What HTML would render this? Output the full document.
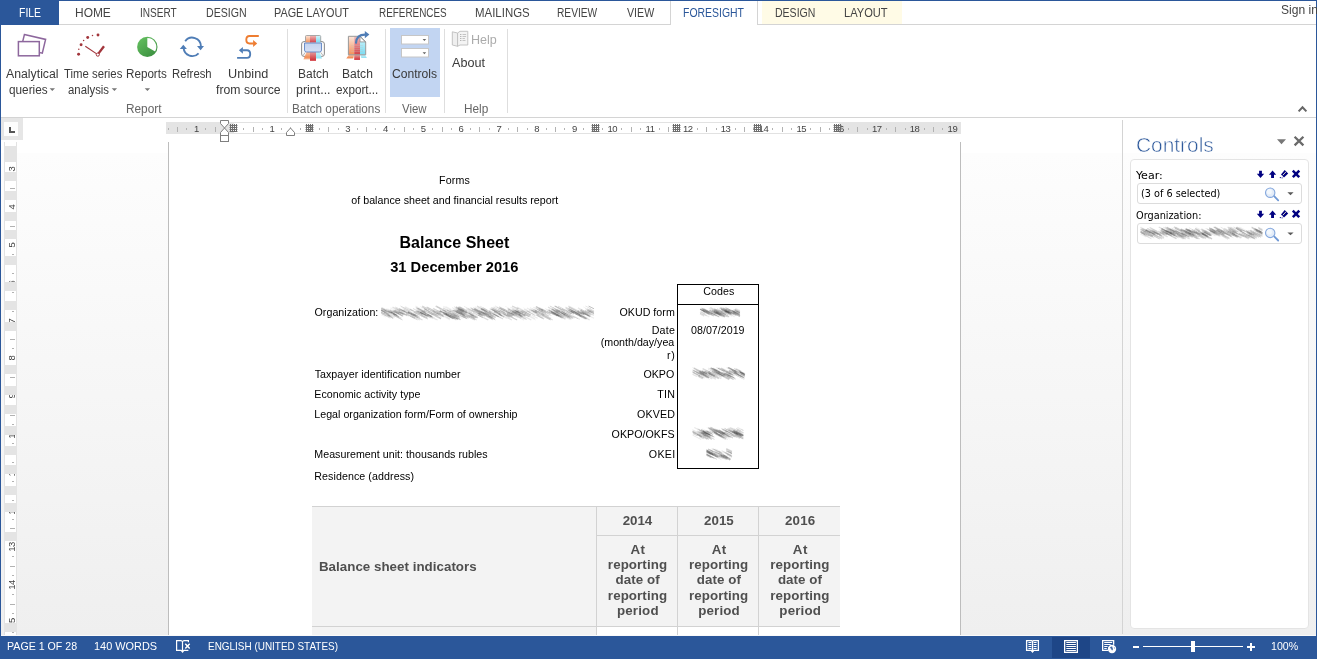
<!DOCTYPE html><html><head><meta charset="utf-8"><title>Document - Word</title><style>
html,body{margin:0;padding:0}
body{width:1317px;height:659px;position:relative;overflow:hidden;background:#fff;
 font-family:"Liberation Sans",sans-serif}
.a{position:absolute}
.t{position:absolute;white-space:pre;line-height:30px;transform-origin:0 0}
svg{position:absolute;left:0;top:0}
.rn{position:absolute;font-size:9.5px;color:#444;line-height:12px;width:20px;text-align:center;letter-spacing:-0.5px}
.vn{position:absolute;font-size:9.5px;color:#444;line-height:12px;width:20px;height:12px;text-align:center;
 transform:rotate(-90deg);transform-origin:50% 50%;letter-spacing:-0.5px}
</style></head><body>
<div class="a" style="left:0px;top:153px;width:1317px;height:483px;background:linear-gradient(#fdfdfd,#efefef);"></div>
<div class="a" style="left:0px;top:24px;width:1317px;height:1px;background:#d4d4d4;"></div>
<div class="a" style="left:0px;top:0px;width:59px;height:25px;background:#2b579a;"></div>
<div class="a" style="left:762px;top:1px;width:140px;height:23px;background:#fffbe6;"></div>
<div class="a" style="left:670px;top:1px;width:88px;height:24px;background:#fff;box-sizing:border-box;border-left:1px solid #d4d4d4;border-right:1px solid #d4d4d4"></div>
<div class="a" style="left:0px;top:117px;width:1317px;height:1px;background:#d4d4d4;"></div>
<div class="a" style="left:287px;top:29px;width:1px;height:84px;background:#dedede;"></div>
<div class="a" style="left:385px;top:29px;width:1px;height:84px;background:#dedede;"></div>
<div class="a" style="left:444px;top:29px;width:1px;height:84px;background:#dedede;"></div>
<div class="a" style="left:507px;top:29px;width:1px;height:84px;background:#dedede;"></div>
<div class="a" style="left:390px;top:28px;width:50px;height:69px;background:#c2d5f2;"></div>
<div class="a" style="left:1px;top:118px;width:22px;height:22px;background:#e6e6e6;"></div>
<div class="a" style="left:4px;top:122px;width:14px;height:14px;background:#fdfdfd;"></div>
<div class="a" style="left:0;top:0;width:1317px;height:659px;will-change:transform"><div class="a" style="left:166px;top:122px;width:795px;height:12px;background:#e4e4e4;"></div>
<div class="a" style="left:234px;top:122px;width:605px;height:12px;background:#fff;box-sizing:border-box;border-top:1px solid #e2e2e2;border-bottom:1px solid #e2e2e2"></div>
<span class="rn" style="left:186.4px;top:122.5px">1</span>
<span class="rn" style="left:262.0px;top:122.5px">1</span>
<span class="rn" style="left:299.8px;top:122.5px">2</span>
<span class="rn" style="left:337.6px;top:122.5px">3</span>
<span class="rn" style="left:375.4px;top:122.5px">4</span>
<span class="rn" style="left:413.2px;top:122.5px">5</span>
<span class="rn" style="left:451.0px;top:122.5px">6</span>
<span class="rn" style="left:488.8px;top:122.5px">7</span>
<span class="rn" style="left:526.6px;top:122.5px">8</span>
<span class="rn" style="left:564.4px;top:122.5px">9</span>
<span class="rn" style="left:602.2px;top:122.5px">10</span>
<span class="rn" style="left:640.0px;top:122.5px">11</span>
<span class="rn" style="left:677.8px;top:122.5px">12</span>
<span class="rn" style="left:715.6px;top:122.5px">13</span>
<span class="rn" style="left:753.4px;top:122.5px">14</span>
<span class="rn" style="left:791.2px;top:122.5px">15</span>
<span class="rn" style="left:829.0px;top:122.5px">16</span>
<span class="rn" style="left:866.8px;top:122.5px">17</span>
<span class="rn" style="left:904.6px;top:122.5px">18</span>
<span class="rn" style="left:942.4px;top:122.5px">19</span><div class="a" style="left:4px;top:142px;width:13px;height:494px;background:#fff;box-sizing:border-box;border-left:1px solid #e2e2e2;border-right:1px solid #e2e2e2"></div>
<span class="vn" style="left:1.5px;top:163.4px">3</span>
<span class="vn" style="left:1.5px;top:201.2px">4</span>
<span class="vn" style="left:1.5px;top:239.0px">5</span>
<span class="vn" style="left:1.5px;top:276.8px">6</span>
<span class="vn" style="left:1.5px;top:314.6px">7</span>
<span class="vn" style="left:1.5px;top:352.4px">8</span>
<span class="vn" style="left:1.5px;top:390.2px">9</span>
<span class="vn" style="left:1.5px;top:428.0px">10</span>
<span class="vn" style="left:1.5px;top:465.8px">11</span>
<span class="vn" style="left:1.5px;top:503.6px">12</span>
<span class="vn" style="left:1.5px;top:541.4px">13</span>
<span class="vn" style="left:1.5px;top:579.2px">14</span>
<span class="vn" style="left:1.5px;top:617.0px">15</span></div>
<div class="a" style="left:168px;top:142px;width:793px;height:494px;background:#fff;box-sizing:border-box;border-left:1px solid #bdbdbd;border-right:1px solid #bdbdbd"></div>
<div class="a" style="left:312px;top:506px;width:528px;height:121px;background:#f3f3f3;"></div>
<div class="a" style="left:312px;top:627px;width:284px;height:9px;background:#f3f3f3;"></div>
<div class="a" style="left:312px;top:506px;width:528px;height:1px;background:#d2d2d2;"></div>
<div class="a" style="left:312px;top:626px;width:528px;height:1px;background:#d2d2d2;"></div>
<div class="a" style="left:596px;top:535px;width:244px;height:1px;background:#d2d2d2;"></div>
<div class="a" style="left:596px;top:506px;width:1px;height:130px;background:#d2d2d2;"></div>
<div class="a" style="left:677px;top:506px;width:1px;height:130px;background:#d2d2d2;"></div>
<div class="a" style="left:758px;top:506px;width:1px;height:130px;background:#d2d2d2;"></div>
<div class="a" style="left:677px;top:284px;width:82px;height:185px;background:transparent;box-sizing:border-box;border:1px solid #000"></div>
<div class="a" style="left:677px;top:304px;width:82px;height:1px;background:#000;"></div>
<div class="a" style="left:1122px;top:120px;width:1px;height:514px;background:#d4d4d4;"></div>
<div class="a" style="left:1130px;top:159px;width:179px;height:470px;background:#fff;box-sizing:border-box;border:1px solid #e4e4e4;border-radius:4px"></div>
<div class="a" style="left:1137px;top:183px;width:165px;height:21px;background:#fff;box-sizing:border-box;border:1px solid #dcdcdc;border-radius:3px"></div>
<div class="a" style="left:1137px;top:223px;width:165px;height:21px;background:#fff;box-sizing:border-box;border:1px solid #dcdcdc;border-radius:3px"></div>
<div class="a" style="left:0px;top:635px;width:1317px;height:1px;background:#fafafa;"></div>
<div class="a" style="left:0px;top:636px;width:1317px;height:23px;background:#2b579a;"></div>
<div class="a" style="left:1052px;top:637px;width:38px;height:21px;background:#1e4687;"></div>
<div class="a" style="left:0px;top:0px;width:1317px;height:1px;background:#2b579a;"></div>
<div class="a" style="left:0px;top:0px;width:1px;height:659px;background:#2b579a;"></div>
<div class="a" style="left:1316px;top:0px;width:1px;height:659px;background:#2b579a;"></div>
<svg width="1317" height="659" viewBox="0 0 1317 659">

<defs>
<filter id="bl" x="-5%" y="-30%" width="110%" height="160%"><feGaussianBlur stdDeviation="0.6"/></filter>
<linearGradient id="gpie" x1="0.15" y1="0.1" x2="0.85" y2="0.95"><stop offset="0" stop-color="#62bd5e"/><stop offset="1" stop-color="#3b8f3f"/></linearGradient>
<linearGradient id="gor" x1="0" y1="0" x2="0" y2="1"><stop offset="0" stop-color="#fde6da"/><stop offset="1" stop-color="#f3905a"/></linearGradient>
<linearGradient id="grd" x1="0" y1="0" x2="0" y2="1"><stop offset="0" stop-color="#f1b9b7"/><stop offset="1" stop-color="#d2434a"/></linearGradient>
<linearGradient id="gcy" x1="0" y1="0" x2="0" y2="1"><stop offset="0" stop-color="#d4f5fb"/><stop offset="1" stop-color="#7adcf2"/></linearGradient>
<linearGradient id="gor2" x1="0" y1="0" x2="0" y2="1"><stop offset="0" stop-color="#f8c3a6"/><stop offset=".7" stop-color="#f28c55"/><stop offset="1" stop-color="#f28c55" stop-opacity=".5"/></linearGradient>
<linearGradient id="grd2" x1="0" y1="0" x2="0" y2="1"><stop offset="0" stop-color="#e59a9c"/><stop offset="1" stop-color="#cf2b32"/></linearGradient>
<linearGradient id="gcy2" x1="0" y1="0" x2="0" y2="1"><stop offset="0" stop-color="#c6f0f8"/><stop offset="1" stop-color="#8fe1f3"/></linearGradient>
<linearGradient id="gpanel" x1="0" y1="0" x2="0" y2="1"><stop offset="0" stop-color="#c3d3ef"/><stop offset="1" stop-color="#d6e0f4"/></linearGradient>
</defs>

<rect x="168" y="128" width="1" height="2" fill="#b2b2b2"/>
<rect x="177" y="127" width="1" height="5" fill="#b2b2b2"/>
<rect x="186" y="128" width="1" height="2" fill="#b2b2b2"/>
<rect x="205" y="128" width="1" height="2" fill="#b2b2b2"/>
<rect x="215" y="127" width="1" height="5" fill="#b2b2b2"/>
<rect x="224" y="128" width="1" height="2" fill="#b2b2b2"/>
<rect x="243" y="128" width="1" height="2" fill="#b2b2b2"/>
<rect x="253" y="127" width="1" height="5" fill="#b2b2b2"/>
<rect x="262" y="128" width="1" height="2" fill="#b2b2b2"/>
<rect x="281" y="128" width="1" height="2" fill="#b2b2b2"/>
<rect x="290" y="127" width="1" height="5" fill="#b2b2b2"/>
<rect x="300" y="128" width="1" height="2" fill="#b2b2b2"/>
<rect x="319" y="128" width="1" height="2" fill="#b2b2b2"/>
<rect x="328" y="127" width="1" height="5" fill="#b2b2b2"/>
<rect x="338" y="128" width="1" height="2" fill="#b2b2b2"/>
<rect x="357" y="128" width="1" height="2" fill="#b2b2b2"/>
<rect x="366" y="127" width="1" height="5" fill="#b2b2b2"/>
<rect x="375" y="128" width="1" height="2" fill="#b2b2b2"/>
<rect x="394" y="128" width="1" height="2" fill="#b2b2b2"/>
<rect x="404" y="127" width="1" height="5" fill="#b2b2b2"/>
<rect x="413" y="128" width="1" height="2" fill="#b2b2b2"/>
<rect x="432" y="128" width="1" height="2" fill="#b2b2b2"/>
<rect x="442" y="127" width="1" height="5" fill="#b2b2b2"/>
<rect x="451" y="128" width="1" height="2" fill="#b2b2b2"/>
<rect x="470" y="128" width="1" height="2" fill="#b2b2b2"/>
<rect x="479" y="127" width="1" height="5" fill="#b2b2b2"/>
<rect x="489" y="128" width="1" height="2" fill="#b2b2b2"/>
<rect x="508" y="128" width="1" height="2" fill="#b2b2b2"/>
<rect x="517" y="127" width="1" height="5" fill="#b2b2b2"/>
<rect x="527" y="128" width="1" height="2" fill="#b2b2b2"/>
<rect x="546" y="128" width="1" height="2" fill="#b2b2b2"/>
<rect x="555" y="127" width="1" height="5" fill="#b2b2b2"/>
<rect x="564" y="128" width="1" height="2" fill="#b2b2b2"/>
<rect x="583" y="128" width="1" height="2" fill="#b2b2b2"/>
<rect x="593" y="127" width="1" height="5" fill="#b2b2b2"/>
<rect x="602" y="128" width="1" height="2" fill="#b2b2b2"/>
<rect x="621" y="128" width="1" height="2" fill="#b2b2b2"/>
<rect x="631" y="127" width="1" height="5" fill="#b2b2b2"/>
<rect x="640" y="128" width="1" height="2" fill="#b2b2b2"/>
<rect x="659" y="128" width="1" height="2" fill="#b2b2b2"/>
<rect x="668" y="127" width="1" height="5" fill="#b2b2b2"/>
<rect x="678" y="128" width="1" height="2" fill="#b2b2b2"/>
<rect x="697" y="128" width="1" height="2" fill="#b2b2b2"/>
<rect x="706" y="127" width="1" height="5" fill="#b2b2b2"/>
<rect x="716" y="128" width="1" height="2" fill="#b2b2b2"/>
<rect x="735" y="128" width="1" height="2" fill="#b2b2b2"/>
<rect x="744" y="127" width="1" height="5" fill="#b2b2b2"/>
<rect x="753" y="128" width="1" height="2" fill="#b2b2b2"/>
<rect x="772" y="128" width="1" height="2" fill="#b2b2b2"/>
<rect x="782" y="127" width="1" height="5" fill="#b2b2b2"/>
<rect x="791" y="128" width="1" height="2" fill="#b2b2b2"/>
<rect x="810" y="128" width="1" height="2" fill="#b2b2b2"/>
<rect x="820" y="127" width="1" height="5" fill="#b2b2b2"/>
<rect x="829" y="128" width="1" height="2" fill="#b2b2b2"/>
<rect x="848" y="128" width="1" height="2" fill="#b2b2b2"/>
<rect x="857" y="127" width="1" height="5" fill="#b2b2b2"/>
<rect x="867" y="128" width="1" height="2" fill="#b2b2b2"/>
<rect x="886" y="128" width="1" height="2" fill="#b2b2b2"/>
<rect x="895" y="127" width="1" height="5" fill="#b2b2b2"/>
<rect x="905" y="128" width="1" height="2" fill="#b2b2b2"/>
<rect x="924" y="128" width="1" height="2" fill="#b2b2b2"/>
<rect x="933" y="127" width="1" height="5" fill="#b2b2b2"/>
<rect x="942" y="128" width="1" height="2" fill="#b2b2b2"/>
<rect x="230" y="124" width="7" height="8" fill="#fff" opacity="0.35"/>
<rect x="230" y="124" width="1" height="8" fill="#6e6e6e"/>
<rect x="232" y="124" width="1" height="8" fill="#6e6e6e"/>
<rect x="234" y="124" width="1" height="8" fill="#6e6e6e"/>
<rect x="236" y="124" width="1" height="8" fill="#6e6e6e"/>
<rect x="229.6" y="125" width="7.8" height="1" fill="#6e6e6e"/>
<rect x="229.6" y="127" width="7.8" height="1" fill="#6e6e6e"/>
<rect x="229.6" y="129" width="7.8" height="1" fill="#6e6e6e"/>
<rect x="229.6" y="131" width="7.8" height="1" fill="#6e6e6e"/>
<rect x="306" y="124" width="7" height="8" fill="#fff" opacity="0.35"/>
<rect x="306" y="124" width="1" height="8" fill="#6e6e6e"/>
<rect x="308" y="124" width="1" height="8" fill="#6e6e6e"/>
<rect x="310" y="124" width="1" height="8" fill="#6e6e6e"/>
<rect x="312" y="124" width="1" height="8" fill="#6e6e6e"/>
<rect x="305.6" y="125" width="7.8" height="1" fill="#6e6e6e"/>
<rect x="305.6" y="127" width="7.8" height="1" fill="#6e6e6e"/>
<rect x="305.6" y="129" width="7.8" height="1" fill="#6e6e6e"/>
<rect x="305.6" y="131" width="7.8" height="1" fill="#6e6e6e"/>
<rect x="592" y="124" width="7" height="8" fill="#fff" opacity="0.35"/>
<rect x="592" y="124" width="1" height="8" fill="#6e6e6e"/>
<rect x="594" y="124" width="1" height="8" fill="#6e6e6e"/>
<rect x="596" y="124" width="1" height="8" fill="#6e6e6e"/>
<rect x="598" y="124" width="1" height="8" fill="#6e6e6e"/>
<rect x="591.6" y="125" width="7.8" height="1" fill="#6e6e6e"/>
<rect x="591.6" y="127" width="7.8" height="1" fill="#6e6e6e"/>
<rect x="591.6" y="129" width="7.8" height="1" fill="#6e6e6e"/>
<rect x="591.6" y="131" width="7.8" height="1" fill="#6e6e6e"/>
<rect x="673" y="124" width="7" height="8" fill="#fff" opacity="0.35"/>
<rect x="673" y="124" width="1" height="8" fill="#6e6e6e"/>
<rect x="675" y="124" width="1" height="8" fill="#6e6e6e"/>
<rect x="677" y="124" width="1" height="8" fill="#6e6e6e"/>
<rect x="679" y="124" width="1" height="8" fill="#6e6e6e"/>
<rect x="672.6" y="125" width="7.8" height="1" fill="#6e6e6e"/>
<rect x="672.6" y="127" width="7.8" height="1" fill="#6e6e6e"/>
<rect x="672.6" y="129" width="7.8" height="1" fill="#6e6e6e"/>
<rect x="672.6" y="131" width="7.8" height="1" fill="#6e6e6e"/>
<rect x="754" y="124" width="7" height="8" fill="#fff" opacity="0.35"/>
<rect x="754" y="124" width="1" height="8" fill="#6e6e6e"/>
<rect x="756" y="124" width="1" height="8" fill="#6e6e6e"/>
<rect x="758" y="124" width="1" height="8" fill="#6e6e6e"/>
<rect x="760" y="124" width="1" height="8" fill="#6e6e6e"/>
<rect x="753.6" y="125" width="7.8" height="1" fill="#6e6e6e"/>
<rect x="753.6" y="127" width="7.8" height="1" fill="#6e6e6e"/>
<rect x="753.6" y="129" width="7.8" height="1" fill="#6e6e6e"/>
<rect x="753.6" y="131" width="7.8" height="1" fill="#6e6e6e"/>
<rect x="834" y="124" width="7" height="8" fill="#fff" opacity="0.35"/>
<rect x="834" y="124" width="1" height="8" fill="#6e6e6e"/>
<rect x="836" y="124" width="1" height="8" fill="#6e6e6e"/>
<rect x="838" y="124" width="1" height="8" fill="#6e6e6e"/>
<rect x="840" y="124" width="1" height="8" fill="#6e6e6e"/>
<rect x="833.6" y="125" width="7.8" height="1" fill="#6e6e6e"/>
<rect x="833.6" y="127" width="7.8" height="1" fill="#6e6e6e"/>
<rect x="833.6" y="129" width="7.8" height="1" fill="#6e6e6e"/>
<rect x="833.6" y="131" width="7.8" height="1" fill="#6e6e6e"/>
<g fill="#fff" stroke="#7f7f7f" stroke-width="1"><path d="M220.5 120.5 h8 v3 l-4 4.5 l-4 -4.5 z"/><path d="M220.5 135.5 v-3 l4 -4.5 l4 4.5 v3 z"/><rect x="220.5" y="135.5" width="8" height="6"/></g>
<path d="M286.5 135.5 v-3 l4 -4.5 l4 4.5 v3 z" fill="#fff" stroke="#7f7f7f"/>
<g fill="#fff" stroke="#8d679d" stroke-width="1.5" stroke-linejoin="miter"><path d="M24.4 34.6 L45.6 39.4 L42.3 53.2 L21 48.4 Z"/><rect x="18.4" y="41.6" width="20.9" height="14.2"/></g>
<g fill="#a2353b"><circle cx="78.6" cy="54.2" r="1.45"/><circle cx="78.8" cy="49.2" r="0.75"/><circle cx="81.1" cy="44.7" r="1.45"/><circle cx="83.6" cy="40.5" r="0.75"/><circle cx="87.7" cy="37.5" r="1.45"/><circle cx="92.5" cy="35.4" r="0.75"/><circle cx="98" cy="35" r="1.45"/></g>
<g stroke="#a2353b" fill="none"><path d="M97.8 54.6 L85.3 46.2" stroke-width="1.1"/><path d="M98.4 53.6 L104 46.2" stroke-width="2.3"/><circle cx="97.8" cy="54.6" r="1.6" fill="#fff" stroke-width="1"/></g>
<circle cx="147.3" cy="46.9" r="10.2" fill="url(#gpie)"/><path d="M147.3 46.9 V37.9 A9 9 0 0 1 155.1 51.4 Z" fill="#fff"/>
<g fill="none" stroke="#4f7db6" stroke-width="1.9"><path d="M185.2 41.2 A8.7 8.7 0 0 1 200.9 46.2"/><path d="M198.6 53.3 A8.7 8.7 0 0 1 183.6 48.2"/></g><path d="M197 46 L204 46 L200.6 50.2 Z" fill="#4f7db6"/><path d="M179.8 48.9 L186.9 48.9 L183.3 44.8 Z" fill="#4f7db6"/>
<path d="M258.8 36 H249.5 Q246.3 36 246.3 39.8 Q246.3 43.5 249.5 43.5 H253.5" fill="none" stroke="#ee7d31" stroke-width="1.9"/><path d="M253.1 40 L257.2 43.5 L253.1 47 Z" fill="#ee7d31"/><path d="M242.5 50.2 H247 Q250.2 50.2 250.2 54 Q250.2 57.9 247 57.9 H237.1" fill="none" stroke="#4f7db6" stroke-width="1.9"/><path d="M242.9 46.9 L238.9 50.3 L242.9 53.8 Z" fill="#4f7db6"/>
<g><rect x="301.6" y="41.6" width="22.8" height="14.8" rx="2.4" fill="#fbfbfb" stroke="#8c8c8c" stroke-width="1"/><path d="M303 55.6 l2.2 -3.2 M323 55.6 l-2.2 -3.2" fill="none" stroke="#a4a4a4" stroke-width="0.8"/><rect x="305.5" y="35.5" width="5" height="7" fill="url(#gor)"/><rect x="310" y="35.5" width="6" height="7" fill="url(#grd)"/><rect x="316" y="35.5" width="4.7" height="7" fill="url(#gcy)"/><path d="M305.5 42 v-5.5 q0 -1 1 -1 h13.2 q1 0 1 1 v5.5" fill="none" stroke="#a0a0a0" stroke-width="0.9"/><path d="M306.6 52 h3.4 v7.6 h-6.6 z" fill="url(#gor2)"/><rect x="310" y="52" width="6" height="8.8" fill="url(#grd2)"/><path d="M316 52 h3.6 l2.4 6.6 h-6 z" fill="url(#gcy2)"/><path d="M304.5 43 h17 v7 q0 2 -2 2 h-13 q-2 0 -2 -2 z" fill="url(#gpanel)" stroke="#5f85c4" stroke-width="0.9"/></g>
<g><path d="M348.6 55 h5.5 l-.9 3.8 h-7 z" fill="url(#gor2)"/><rect x="354.2" y="55" width="5.8" height="4.9" fill="url(#grd2)"/><path d="M360.3 55 h5 l1.6 3 h-5.5 z" fill="url(#gcy2)"/><rect x="348.7" y="36.6" width="5.6" height="18" fill="url(#gor)"/><rect x="354.2" y="36.6" width="5.8" height="18" fill="url(#grd)"/><path d="M360 36.6 l5.4 5.4 v12.6 h-5.4 z" fill="url(#gcy)"/><path d="M360 36.4 v5.5 h5.6 z" fill="#fff" stroke="#8c8c8c" stroke-width="0.8"/><path d="M348.4 36.3 H360 L365.7 42 V54.8 H348.4 Z" fill="none" stroke="#8c8c8c" stroke-width="0.9"/><g stroke="#c9b8b8" stroke-width="0.5" opacity=".55"><path d="M351 45.5h12M351 47.5h12M351 49.5h12M351 51.5h12"/></g><path d="M356 42.8 Q356.6 34.6 365 34.6" fill="none" stroke="#4f7db6" stroke-width="2.1" stroke-linecap="round"/><path d="M364.8 31 L369.4 34.6 L364.8 38.2 Z" fill="#4f7db6"/></g>
<g fill="#fff" stroke="#c6c6c6" stroke-width="1"><rect x="401.5" y="35.5" width="27" height="8.5"/><rect x="401.5" y="48.5" width="27" height="8.5"/></g><path d="M422.6 39 h3.6 l-1.8 2 z M422.6 52.2 h3.6 l-1.8 2 z" fill="#666"/>
<g stroke="#bdbdbd" stroke-width="0.9" fill="#efefef"><path d="M452.3 31.8 L457.6 33 V46.3 L452.3 45 Z"/><path d="M457.6 33 L460 31.3 H467.8 V45 H460 L457.6 46.3 Z" fill="#f4f4f4"/></g><g fill="#9a9a9a"><rect x="460.3" y="34" width="1" height="1"/><rect x="460.3" y="36" width="1" height="1"/><rect x="460.3" y="38" width="1" height="1"/><rect x="460.3" y="40" width="1" height="1"/></g><g fill="#c4c4c4"><rect x="462.5" y="34" width="3.6" height="1"/><rect x="462.5" y="36" width="3.6" height="1"/><rect x="462.5" y="38" width="2.4" height="1"/><rect x="462.5" y="40" width="3" height="1"/></g>
<path d="M10 127 V132 H15" fill="none" stroke="#555" stroke-width="2"/>
<path d="M49.6 88.2 h5.4 l-2.7 2.7 z M111.7 88.2 h5.4 l-2.7 2.7 z M144.7 88.2 h5.4 l-2.7 2.7 z" fill="#777"/>
<path d="M1298.6 111.4 L1302.5 107.3 L1306.4 111.4" fill="none" stroke="#666" stroke-width="2"/>
<path d="M1277 139.2 h9 l-4.5 5 z" fill="#777"/>
<path d="M1294.6 136.8 L1303.4 145.4 M1303.4 136.8 L1294.6 145.4" stroke="#6a6a6a" stroke-width="2.3"/>
<g transform="translate(0,0.0)"><path d="M1259.1 170.7 h2.8 v3 h2.3 l-3.7 4.4 l-3.7 -4.4 h2.3 z" fill="#000080"/><path d="M1271.1 178 h2.9 v-3.2 h2.2 l-3.65 -4.2 l-3.65 4.2 h2.2 z" fill="#000080"/><path d="M1284.7 169.9 L1288.2 173.4 L1284 177.6 L1281 174.4 Z" fill="#000080"/><path d="M1282.8 175.3 L1286.2 171.6" stroke="#d9d6c4" stroke-width="1"/><path d="M1279.8 177.6 h1.2 M1281.6 177.9 h1" stroke="#000080" stroke-width="0.9"/><path d="M1293.7 171.6 L1298.4 176.3 M1298.4 171.6 L1293.7 176.3" stroke="#000080" stroke-width="2.5" stroke-linecap="square"/></g>
<g transform="translate(0,40.0)"><path d="M1259.1 170.7 h2.8 v3 h2.3 l-3.7 4.4 l-3.7 -4.4 h2.3 z" fill="#000080"/><path d="M1271.1 178 h2.9 v-3.2 h2.2 l-3.65 -4.2 l-3.65 4.2 h2.2 z" fill="#000080"/><path d="M1284.7 169.9 L1288.2 173.4 L1284 177.6 L1281 174.4 Z" fill="#000080"/><path d="M1282.8 175.3 L1286.2 171.6" stroke="#d9d6c4" stroke-width="1"/><path d="M1279.8 177.6 h1.2 M1281.6 177.9 h1" stroke="#000080" stroke-width="0.9"/><path d="M1293.7 171.6 L1298.4 176.3 M1298.4 171.6 L1293.7 176.3" stroke="#000080" stroke-width="2.5" stroke-linecap="square"/></g>
<g transform="translate(1264.6,187.3)"><path d="M9.3 8.6 L13.6 13" stroke="#7099d6" stroke-width="1.8" stroke-linecap="round"/><circle cx="5.6" cy="5.4" r="4.7" fill="#e4edf9" stroke="#86a9de" stroke-width="1.1"/><circle cx="4.8" cy="4.4" r="2.6" fill="#f4f8fd" opacity=".9"/></g>
<g transform="translate(1264.6,227.5)"><path d="M9.3 8.6 L13.6 13" stroke="#7099d6" stroke-width="1.8" stroke-linecap="round"/><circle cx="5.6" cy="5.4" r="4.7" fill="#e4edf9" stroke="#86a9de" stroke-width="1.1"/><circle cx="4.8" cy="4.4" r="2.6" fill="#f4f8fd" opacity=".9"/></g>
<path d="M1287.4 192.3 h6.2 l-3.1 2.9 z M1287.4 232.4 h6.2 l-3.1 2.9 z" fill="#5a5a5a"/>
<g filter="url(#bl)" stroke-linecap="butt"><path d="M556.9 309.6L566.1 314.3" stroke="rgba(30,30,30,0.09)" stroke-width="1.3"/><path d="M398.7 311.9L403.3 314.3" stroke="rgba(30,30,30,0.24)" stroke-width="1.1"/><path d="M531.7 315.2L537.6 318.2" stroke="rgba(30,30,30,0.08)" stroke-width="1.1"/><path d="M577.6 309.7L584.5 313.1" stroke="rgba(30,30,30,0.04)" stroke-width="1.1"/><path d="M483.7 308.7L489.6 311.7" stroke="rgba(30,30,30,0.09)" stroke-width="0.7"/><path d="M555.4 310.0L563.4 314.0" stroke="rgba(30,30,30,0.16)" stroke-width="0.8"/><path d="M447.4 315.3L456.3 319.9" stroke="rgba(30,30,30,0.09)" stroke-width="1.2"/><path d="M441.6 314.9L449.7 319.0" stroke="rgba(30,30,30,0.10)" stroke-width="0.7"/><path d="M428.0 309.1L437.4 313.9" stroke="rgba(30,30,30,0.10)" stroke-width="1.2"/><path d="M457.2 312.0L464.4 315.6" stroke="rgba(30,30,30,0.10)" stroke-width="1.1"/><path d="M384.9 315.2L389.7 317.6" stroke="rgba(30,30,30,0.11)" stroke-width="0.8"/><path d="M482.7 312.7L493.3 318.1" stroke="rgba(30,30,30,0.14)" stroke-width="1.1"/><path d="M579.8 310.3L587.9 314.5" stroke="rgba(30,30,30,0.10)" stroke-width="0.7"/><path d="M543.1 315.1L552.7 320.0" stroke="rgba(30,30,30,0.14)" stroke-width="1.1"/><path d="M469.4 315.4L474.2 317.8" stroke="rgba(30,30,30,0.06)" stroke-width="1.1"/><path d="M453.7 310.7L460.3 314.1" stroke="rgba(30,30,30,0.11)" stroke-width="0.7"/><path d="M427.1 314.5L432.7 317.3" stroke="rgba(30,30,30,0.14)" stroke-width="1.4"/><path d="M430.5 310.4L440.2 315.4" stroke="rgba(30,30,30,0.07)" stroke-width="1.3"/><path d="M431.6 312.6L436.7 315.2" stroke="rgba(30,30,30,0.05)" stroke-width="1.1"/><path d="M413.7 313.7L419.9 316.9" stroke="rgba(30,30,30,0.08)" stroke-width="0.7"/><path d="M459.8 306.8L466.9 310.4" stroke="rgba(30,30,30,0.15)" stroke-width="0.9"/><path d="M505.2 306.3L514.8 311.1" stroke="rgba(30,30,30,0.06)" stroke-width="0.8"/><path d="M526.7 311.0L535.4 315.5" stroke="rgba(30,30,30,0.16)" stroke-width="1.1"/><path d="M424.3 310.8L432.8 315.1" stroke="rgba(30,30,30,0.08)" stroke-width="0.7"/><path d="M439.4 311.0L449.8 316.3" stroke="rgba(30,30,30,0.14)" stroke-width="1.5"/><path d="M535.9 306.7L543.0 310.3" stroke="rgba(30,30,30,0.26)" stroke-width="1.4"/><path d="M581.9 312.5L590.0 316.6" stroke="rgba(30,30,30,0.16)" stroke-width="1.1"/><path d="M458.2 309.9L464.8 313.3" stroke="rgba(30,30,30,0.09)" stroke-width="0.8"/><path d="M519.7 310.5L526.0 313.7" stroke="rgba(30,30,30,0.14)" stroke-width="0.7"/><path d="M420.5 315.0L427.0 318.3" stroke="rgba(30,30,30,0.08)" stroke-width="1.2"/><path d="M554.3 311.6L564.6 316.9" stroke="rgba(30,30,30,0.12)" stroke-width="1.5"/><path d="M426.5 307.0L435.5 311.6" stroke="rgba(30,30,30,0.15)" stroke-width="1.3"/><path d="M504.0 309.8L513.7 314.8" stroke="rgba(30,30,30,0.07)" stroke-width="1.2"/><path d="M579.3 309.7L589.3 314.8" stroke="rgba(30,30,30,0.09)" stroke-width="0.8"/><path d="M560.8 312.6L570.2 317.4" stroke="rgba(30,30,30,0.11)" stroke-width="1.0"/><path d="M499.7 307.7L505.5 310.7" stroke="rgba(30,30,30,0.15)" stroke-width="1.4"/><path d="M475.4 313.9L481.6 317.0" stroke="rgba(30,30,30,0.04)" stroke-width="0.8"/><path d="M400.5 306.0L410.5 311.1" stroke="rgba(30,30,30,0.16)" stroke-width="0.8"/><path d="M413.7 311.9L419.6 315.0" stroke="rgba(30,30,30,0.15)" stroke-width="1.5"/><path d="M571.5 309.2L577.8 312.4" stroke="rgba(30,30,30,0.05)" stroke-width="0.7"/><path d="M381.0 310.0L388.5 313.8" stroke="rgba(30,30,30,0.09)" stroke-width="0.8"/><path d="M570.3 310.3L580.8 315.6" stroke="rgba(30,30,30,0.06)" stroke-width="1.5"/><path d="M492.3 309.2L501.0 313.6" stroke="rgba(30,30,30,0.10)" stroke-width="0.9"/><path d="M395.2 315.3L401.4 318.4" stroke="rgba(30,30,30,0.12)" stroke-width="1.5"/><path d="M461.0 309.1L467.4 312.3" stroke="rgba(30,30,30,0.14)" stroke-width="0.9"/><path d="M448.3 312.9L456.1 316.9" stroke="rgba(30,30,30,0.12)" stroke-width="0.9"/><path d="M392.5 307.2L400.4 311.2" stroke="rgba(30,30,30,0.12)" stroke-width="1.3"/><path d="M481.1 308.8L491.0 313.8" stroke="rgba(30,30,30,0.24)" stroke-width="1.5"/><path d="M413.3 315.3L422.5 320.0" stroke="rgba(30,30,30,0.14)" stroke-width="1.1"/><path d="M573.7 311.3L580.0 314.5" stroke="rgba(30,30,30,0.27)" stroke-width="1.0"/><path d="M568.6 314.0L578.1 318.8" stroke="rgba(30,30,30,0.13)" stroke-width="0.8"/><path d="M470.4 315.1L475.9 317.9" stroke="rgba(30,30,30,0.12)" stroke-width="1.5"/><path d="M549.2 312.1L557.1 316.1" stroke="rgba(30,30,30,0.09)" stroke-width="1.0"/><path d="M433.6 313.6L438.3 315.9" stroke="rgba(30,30,30,0.19)" stroke-width="1.0"/><path d="M407.8 312.4L413.1 315.1" stroke="rgba(30,30,30,0.09)" stroke-width="1.2"/><path d="M428.5 312.5L433.0 314.8" stroke="rgba(30,30,30,0.12)" stroke-width="1.2"/><path d="M533.8 310.6L539.8 313.7" stroke="rgba(30,30,30,0.07)" stroke-width="1.1"/><path d="M569.1 309.2L579.3 314.4" stroke="rgba(30,30,30,0.08)" stroke-width="1.1"/><path d="M565.2 316.8L570.6 319.5" stroke="rgba(30,30,30,0.08)" stroke-width="1.4"/><path d="M455.7 311.7L464.6 316.2" stroke="rgba(30,30,30,0.14)" stroke-width="1.5"/><path d="M499.9 308.5L505.4 311.3" stroke="rgba(30,30,30,0.11)" stroke-width="0.7"/><path d="M521.7 310.7L530.7 315.2" stroke="rgba(30,30,30,0.06)" stroke-width="0.7"/><path d="M585.3 308.7L594.0 313.2" stroke="rgba(30,30,30,0.15)" stroke-width="0.8"/><path d="M541.4 313.5L551.1 318.5" stroke="rgba(30,30,30,0.09)" stroke-width="1.5"/><path d="M457.7 307.7L467.2 312.6" stroke="rgba(30,30,30,0.08)" stroke-width="1.4"/><path d="M582.8 312.9L588.0 315.6" stroke="rgba(30,30,30,0.05)" stroke-width="0.9"/><path d="M538.4 309.7L542.9 312.0" stroke="rgba(30,30,30,0.04)" stroke-width="1.2"/><path d="M556.1 310.4L561.8 313.3" stroke="rgba(30,30,30,0.07)" stroke-width="0.9"/><path d="M521.9 315.2L531.3 320.0" stroke="rgba(30,30,30,0.10)" stroke-width="1.4"/><path d="M540.8 309.8L548.8 313.8" stroke="rgba(30,30,30,0.05)" stroke-width="0.8"/><path d="M536.2 315.0L544.1 319.0" stroke="rgba(30,30,30,0.16)" stroke-width="1.1"/><path d="M499.8 310.5L506.2 313.8" stroke="rgba(30,30,30,0.18)" stroke-width="1.1"/><path d="M473.6 311.1L479.9 314.3" stroke="rgba(30,30,30,0.12)" stroke-width="1.2"/><path d="M458.6 306.7L464.3 309.6" stroke="rgba(30,30,30,0.11)" stroke-width="1.4"/><path d="M484.5 312.9L495.1 318.3" stroke="rgba(30,30,30,0.09)" stroke-width="1.5"/><path d="M443.3 312.3L448.8 315.1" stroke="rgba(30,30,30,0.15)" stroke-width="1.0"/><path d="M468.2 314.8L475.2 318.4" stroke="rgba(30,30,30,0.13)" stroke-width="1.3"/><path d="M481.4 312.6L490.5 317.2" stroke="rgba(30,30,30,0.11)" stroke-width="1.2"/><path d="M510.8 312.9L521.1 318.1" stroke="rgba(30,30,30,0.13)" stroke-width="1.2"/><path d="M452.4 316.3L458.5 319.4" stroke="rgba(30,30,30,0.10)" stroke-width="1.4"/><path d="M480.5 308.6L487.9 312.3" stroke="rgba(30,30,30,0.13)" stroke-width="1.0"/><path d="M518.6 314.2L523.2 316.6" stroke="rgba(30,30,30,0.12)" stroke-width="1.3"/><path d="M507.0 313.2L512.7 316.2" stroke="rgba(30,30,30,0.13)" stroke-width="1.4"/><path d="M489.1 314.1L495.8 317.5" stroke="rgba(30,30,30,0.06)" stroke-width="1.3"/><path d="M551.5 309.6L557.7 312.8" stroke="rgba(30,30,30,0.11)" stroke-width="1.3"/><path d="M562.4 313.4L568.9 316.8" stroke="rgba(30,30,30,0.12)" stroke-width="0.7"/><path d="M568.4 308.4L576.7 312.7" stroke="rgba(30,30,30,0.13)" stroke-width="0.9"/><path d="M511.6 312.6L517.1 315.4" stroke="rgba(30,30,30,0.15)" stroke-width="1.2"/><path d="M432.9 308.4L440.7 312.4" stroke="rgba(30,30,30,0.13)" stroke-width="1.3"/><path d="M427.8 311.6L436.7 316.2" stroke="rgba(30,30,30,0.05)" stroke-width="1.1"/><path d="M399.5 308.4L405.1 311.2" stroke="rgba(30,30,30,0.15)" stroke-width="0.7"/><path d="M526.2 315.1L535.7 320.0" stroke="rgba(30,30,30,0.08)" stroke-width="0.8"/><path d="M526.0 312.3L531.1 314.8" stroke="rgba(30,30,30,0.08)" stroke-width="0.9"/><path d="M552.0 309.2L559.4 313.0" stroke="rgba(30,30,30,0.13)" stroke-width="1.2"/><path d="M569.4 308.7L580.0 314.2" stroke="rgba(30,30,30,0.14)" stroke-width="1.0"/><path d="M499.5 312.2L509.7 317.4" stroke="rgba(30,30,30,0.13)" stroke-width="1.4"/><path d="M381.6 309.0L386.9 311.7" stroke="rgba(30,30,30,0.08)" stroke-width="1.1"/><path d="M554.9 306.0L565.0 311.1" stroke="rgba(30,30,30,0.25)" stroke-width="0.9"/><path d="M403.5 309.3L408.5 311.8" stroke="rgba(30,30,30,0.13)" stroke-width="1.4"/><path d="M518.8 314.7L525.7 318.2" stroke="rgba(30,30,30,0.12)" stroke-width="0.7"/><path d="M576.1 311.0L584.3 315.1" stroke="rgba(30,30,30,0.11)" stroke-width="0.7"/><path d="M452.7 310.0L459.8 313.6" stroke="rgba(30,30,30,0.09)" stroke-width="1.3"/><path d="M534.8 310.5L543.8 315.0" stroke="rgba(30,30,30,0.16)" stroke-width="1.4"/><path d="M558.1 306.2L567.9 311.2" stroke="rgba(30,30,30,0.14)" stroke-width="1.0"/><path d="M588.4 310.5L593.1 312.9" stroke="rgba(30,30,30,0.05)" stroke-width="1.3"/><path d="M566.6 311.3L571.2 313.6" stroke="rgba(30,30,30,0.24)" stroke-width="0.7"/><path d="M458.3 307.0L467.4 311.6" stroke="rgba(30,30,30,0.13)" stroke-width="1.4"/><path d="M442.1 309.9L449.2 313.5" stroke="rgba(30,30,30,0.08)" stroke-width="1.3"/><path d="M580.6 310.6L588.7 314.8" stroke="rgba(30,30,30,0.09)" stroke-width="1.3"/><path d="M554.4 313.1L563.2 317.6" stroke="rgba(30,30,30,0.14)" stroke-width="0.8"/><path d="M456.0 306.9L463.7 310.8" stroke="rgba(30,30,30,0.19)" stroke-width="1.4"/><path d="M516.5 309.0L522.9 312.2" stroke="rgba(30,30,30,0.08)" stroke-width="1.1"/><path d="M490.4 314.5L495.8 317.3" stroke="rgba(30,30,30,0.14)" stroke-width="1.5"/><path d="M478.1 314.8L488.3 320.0" stroke="rgba(30,30,30,0.14)" stroke-width="1.4"/><path d="M549.0 310.8L554.3 313.5" stroke="rgba(30,30,30,0.16)" stroke-width="1.3"/><path d="M536.7 314.5L543.4 317.9" stroke="rgba(30,30,30,0.09)" stroke-width="1.5"/><path d="M491.6 309.1L497.1 311.9" stroke="rgba(30,30,30,0.11)" stroke-width="0.8"/><path d="M464.1 306.4L473.1 311.0" stroke="rgba(30,30,30,0.10)" stroke-width="0.8"/><path d="M432.5 310.1L440.9 314.4" stroke="rgba(30,30,30,0.05)" stroke-width="1.2"/><path d="M413.0 308.5L422.8 313.6" stroke="rgba(30,30,30,0.14)" stroke-width="0.9"/><path d="M566.8 313.9L574.9 318.1" stroke="rgba(30,30,30,0.09)" stroke-width="1.1"/><path d="M577.5 314.3L586.9 319.1" stroke="rgba(30,30,30,0.16)" stroke-width="0.9"/><path d="M535.4 310.5L544.7 315.2" stroke="rgba(30,30,30,0.09)" stroke-width="1.3"/><path d="M503.2 314.0L507.9 316.4" stroke="rgba(30,30,30,0.06)" stroke-width="1.3"/><path d="M381.0 312.0L384.8 314.0" stroke="rgba(30,30,30,0.13)" stroke-width="1.1"/><path d="M498.9 311.3L506.8 315.3" stroke="rgba(30,30,30,0.14)" stroke-width="1.0"/><path d="M512.0 309.1L518.4 312.3" stroke="rgba(30,30,30,0.11)" stroke-width="1.5"/><path d="M411.5 315.7L419.9 320.0" stroke="rgba(30,30,30,0.11)" stroke-width="1.0"/><path d="M575.5 314.0L585.5 319.2" stroke="rgba(30,30,30,0.15)" stroke-width="1.0"/><path d="M475.2 310.5L484.6 315.3" stroke="rgba(30,30,30,0.10)" stroke-width="1.1"/><path d="M402.5 307.5L409.1 310.9" stroke="rgba(30,30,30,0.06)" stroke-width="1.4"/><path d="M503.5 313.5L509.7 316.6" stroke="rgba(30,30,30,0.10)" stroke-width="1.3"/><path d="M468.7 313.1L478.0 317.9" stroke="rgba(30,30,30,0.10)" stroke-width="1.3"/><path d="M397.8 311.2L403.1 313.9" stroke="rgba(30,30,30,0.04)" stroke-width="1.1"/><path d="M580.3 315.3L587.3 318.9" stroke="rgba(30,30,30,0.05)" stroke-width="1.5"/><path d="M494.2 311.8L502.0 315.7" stroke="rgba(30,30,30,0.28)" stroke-width="1.1"/><path d="M466.1 308.1L474.7 312.5" stroke="rgba(30,30,30,0.07)" stroke-width="1.3"/><path d="M559.0 310.0L568.4 314.8" stroke="rgba(30,30,30,0.09)" stroke-width="0.9"/><path d="M484.1 311.1L494.2 316.2" stroke="rgba(30,30,30,0.05)" stroke-width="1.4"/><path d="M420.0 312.0L427.7 316.0" stroke="rgba(30,30,30,0.16)" stroke-width="1.1"/><path d="M567.7 309.7L575.6 313.7" stroke="rgba(30,30,30,0.08)" stroke-width="0.7"/><path d="M587.4 314.9L594.0 318.3" stroke="rgba(30,30,30,0.07)" stroke-width="1.1"/><path d="M538.0 308.0L547.7 313.0" stroke="rgba(30,30,30,0.12)" stroke-width="0.8"/><path d="M418.6 313.2L426.6 317.3" stroke="rgba(30,30,30,0.10)" stroke-width="0.8"/><path d="M466.0 311.8L472.2 315.0" stroke="rgba(30,30,30,0.06)" stroke-width="1.1"/><path d="M449.0 312.3L457.2 316.5" stroke="rgba(30,30,30,0.12)" stroke-width="0.7"/><path d="M446.1 314.0L454.8 318.5" stroke="rgba(30,30,30,0.15)" stroke-width="1.1"/><path d="M448.7 309.0L453.9 311.7" stroke="rgba(30,30,30,0.05)" stroke-width="1.3"/><path d="M496.6 307.1L505.3 311.5" stroke="rgba(30,30,30,0.11)" stroke-width="1.0"/><path d="M381.0 310.6L384.2 312.2" stroke="rgba(30,30,30,0.05)" stroke-width="1.2"/><path d="M587.5 310.9L594.0 314.2" stroke="rgba(30,30,30,0.04)" stroke-width="0.8"/><path d="M429.8 310.2L439.1 314.9" stroke="rgba(30,30,30,0.05)" stroke-width="0.8"/><path d="M445.5 306.5L451.6 309.6" stroke="rgba(30,30,30,0.06)" stroke-width="1.4"/><path d="M514.0 310.3L520.0 313.4" stroke="rgba(30,30,30,0.10)" stroke-width="1.5"/><path d="M451.3 315.0L460.8 319.8" stroke="rgba(30,30,30,0.11)" stroke-width="1.0"/><path d="M521.5 312.0L529.8 316.3" stroke="rgba(30,30,30,0.10)" stroke-width="1.4"/><path d="M511.8 307.4L519.7 311.4" stroke="rgba(30,30,30,0.06)" stroke-width="1.0"/><path d="M494.3 309.3L500.3 312.4" stroke="rgba(30,30,30,0.10)" stroke-width="0.8"/><path d="M456.3 310.4L464.8 314.8" stroke="rgba(30,30,30,0.14)" stroke-width="1.2"/><path d="M384.3 309.9L390.7 313.2" stroke="rgba(30,30,30,0.15)" stroke-width="1.4"/><path d="M422.2 311.4L431.9 316.4" stroke="rgba(30,30,30,0.15)" stroke-width="1.4"/><path d="M458.7 309.0L465.9 312.6" stroke="rgba(30,30,30,0.07)" stroke-width="1.3"/><path d="M507.3 317.7L511.8 320.0" stroke="rgba(30,30,30,0.12)" stroke-width="1.1"/><path d="M565.4 314.9L572.7 318.7" stroke="rgba(30,30,30,0.09)" stroke-width="1.0"/><path d="M507.6 310.2L512.4 312.6" stroke="rgba(30,30,30,0.22)" stroke-width="0.7"/><path d="M402.0 310.1L407.3 312.8" stroke="rgba(30,30,30,0.07)" stroke-width="1.4"/><path d="M515.8 310.7L525.2 315.5" stroke="rgba(30,30,30,0.14)" stroke-width="1.1"/><path d="M454.5 314.1L459.9 316.9" stroke="rgba(30,30,30,0.08)" stroke-width="1.0"/><path d="M515.7 309.1L526.4 314.6" stroke="rgba(30,30,30,0.09)" stroke-width="0.9"/><path d="M551.2 312.2L558.4 315.9" stroke="rgba(30,30,30,0.18)" stroke-width="1.2"/><path d="M568.1 311.0L573.6 313.8" stroke="rgba(30,30,30,0.08)" stroke-width="1.5"/><path d="M381.0 311.0L390.6 316.0" stroke="rgba(30,30,30,0.06)" stroke-width="0.8"/><path d="M447.2 313.8L457.7 319.2" stroke="rgba(30,30,30,0.09)" stroke-width="1.1"/><path d="M541.2 309.5L550.2 314.0" stroke="rgba(30,30,30,0.10)" stroke-width="1.4"/><path d="M557.2 308.7L562.6 311.5" stroke="rgba(30,30,30,0.08)" stroke-width="0.8"/><path d="M539.9 311.9L548.5 316.3" stroke="rgba(30,30,30,0.06)" stroke-width="1.4"/><path d="M580.4 312.7L585.0 315.1" stroke="rgba(30,30,30,0.13)" stroke-width="1.1"/><path d="M462.0 316.1L466.5 318.4" stroke="rgba(30,30,30,0.15)" stroke-width="1.0"/><path d="M427.3 315.3L436.6 320.0" stroke="rgba(30,30,30,0.06)" stroke-width="1.1"/><path d="M467.3 315.2L476.7 320.0" stroke="rgba(30,30,30,0.12)" stroke-width="1.2"/><path d="M492.3 309.5L498.3 312.6" stroke="rgba(30,30,30,0.12)" stroke-width="1.1"/><path d="M513.9 311.6L521.3 315.4" stroke="rgba(30,30,30,0.04)" stroke-width="0.9"/><path d="M436.7 313.4L443.8 317.0" stroke="rgba(30,30,30,0.12)" stroke-width="1.1"/><path d="M472.8 307.3L480.4 311.2" stroke="rgba(30,30,30,0.09)" stroke-width="0.9"/><path d="M551.7 308.9L558.4 312.3" stroke="rgba(30,30,30,0.14)" stroke-width="1.2"/><path d="M533.4 307.2L540.0 310.5" stroke="rgba(30,30,30,0.08)" stroke-width="1.1"/><path d="M410.1 309.1L415.4 311.8" stroke="rgba(30,30,30,0.14)" stroke-width="0.9"/><path d="M467.5 312.4L477.4 317.5" stroke="rgba(30,30,30,0.09)" stroke-width="1.2"/><path d="M392.8 310.7L402.1 315.5" stroke="rgba(30,30,30,0.08)" stroke-width="1.2"/><path d="M404.6 307.0L412.4 311.0" stroke="rgba(30,30,30,0.08)" stroke-width="1.2"/><path d="M587.9 310.6L594.0 313.7" stroke="rgba(30,30,30,0.12)" stroke-width="1.1"/><path d="M395.1 307.0L404.7 311.9" stroke="rgba(30,30,30,0.07)" stroke-width="1.2"/><path d="M507.5 308.3L516.6 313.0" stroke="rgba(30,30,30,0.14)" stroke-width="1.3"/><path d="M580.6 311.7L589.0 316.0" stroke="rgba(30,30,30,0.12)" stroke-width="0.9"/><path d="M486.5 316.0L491.8 318.7" stroke="rgba(30,30,30,0.14)" stroke-width="1.4"/><path d="M405.1 306.6L414.0 311.1" stroke="rgba(30,30,30,0.05)" stroke-width="1.3"/><path d="M457.8 309.7L465.3 313.5" stroke="rgba(30,30,30,0.12)" stroke-width="1.4"/><path d="M483.2 315.0L493.0 320.0" stroke="rgba(30,30,30,0.09)" stroke-width="0.8"/><path d="M555.4 311.4L560.6 314.1" stroke="rgba(30,30,30,0.04)" stroke-width="1.4"/><path d="M490.6 309.1L500.8 314.3" stroke="rgba(30,30,30,0.22)" stroke-width="1.0"/><path d="M469.9 307.5L480.3 312.8" stroke="rgba(30,30,30,0.10)" stroke-width="0.9"/><path d="M452.7 313.4L462.6 318.4" stroke="rgba(30,30,30,0.05)" stroke-width="1.1"/><path d="M555.9 311.7L561.4 314.5" stroke="rgba(30,30,30,0.13)" stroke-width="1.1"/><path d="M587.2 311.8L594.0 315.3" stroke="rgba(30,30,30,0.13)" stroke-width="1.2"/><path d="M460.0 312.6L470.1 317.8" stroke="rgba(30,30,30,0.11)" stroke-width="1.1"/><path d="M467.8 309.0L476.0 313.1" stroke="rgba(30,30,30,0.11)" stroke-width="0.9"/><path d="M560.6 312.7L569.9 317.5" stroke="rgba(30,30,30,0.16)" stroke-width="1.2"/><path d="M401.2 309.8L409.2 313.9" stroke="rgba(30,30,30,0.08)" stroke-width="1.1"/><path d="M512.7 310.7L520.8 314.8" stroke="rgba(30,30,30,0.14)" stroke-width="1.1"/><path d="M551.4 307.9L555.8 310.1" stroke="rgba(30,30,30,0.06)" stroke-width="0.8"/><path d="M400.8 312.3L407.2 315.6" stroke="rgba(30,30,30,0.16)" stroke-width="1.2"/><path d="M386.6 314.1L391.4 316.6" stroke="rgba(30,30,30,0.07)" stroke-width="1.1"/><path d="M499.1 306.6L507.4 310.8" stroke="rgba(30,30,30,0.15)" stroke-width="0.8"/><path d="M436.7 306.7L445.6 311.3" stroke="rgba(30,30,30,0.07)" stroke-width="1.3"/><path d="M440.2 314.7L450.1 319.8" stroke="rgba(30,30,30,0.05)" stroke-width="1.4"/><path d="M561.4 311.3L566.7 314.0" stroke="rgba(30,30,30,0.23)" stroke-width="1.0"/><path d="M535.7 308.3L545.7 313.4" stroke="rgba(30,30,30,0.12)" stroke-width="1.0"/><path d="M585.4 306.0L591.1 308.9" stroke="rgba(30,30,30,0.11)" stroke-width="0.9"/><path d="M420.4 312.6L425.2 315.0" stroke="rgba(30,30,30,0.16)" stroke-width="0.9"/><path d="M577.4 312.1L581.9 314.4" stroke="rgba(30,30,30,0.07)" stroke-width="0.7"/><path d="M541.4 311.4L546.4 314.0" stroke="rgba(30,30,30,0.10)" stroke-width="0.9"/><path d="M482.1 311.7L488.9 315.2" stroke="rgba(30,30,30,0.06)" stroke-width="1.2"/><path d="M439.1 309.4L449.4 314.6" stroke="rgba(30,30,30,0.07)" stroke-width="0.8"/><path d="M510.0 311.6L518.6 316.0" stroke="rgba(30,30,30,0.12)" stroke-width="0.8"/><path d="M466.1 315.5L474.9 320.0" stroke="rgba(30,30,30,0.14)" stroke-width="1.1"/><path d="M484.0 313.1L491.5 316.9" stroke="rgba(30,30,30,0.14)" stroke-width="1.1"/><path d="M553.9 311.0L562.6 315.5" stroke="rgba(30,30,30,0.14)" stroke-width="0.9"/><path d="M443.0 308.1L451.2 312.3" stroke="rgba(30,30,30,0.15)" stroke-width="1.1"/><path d="M524.9 313.6L535.1 318.8" stroke="rgba(30,30,30,0.08)" stroke-width="1.2"/><path d="M452.2 307.7L461.6 312.5" stroke="rgba(30,30,30,0.13)" stroke-width="0.7"/><path d="M449.0 315.8L457.1 319.9" stroke="rgba(30,30,30,0.11)" stroke-width="0.8"/><path d="M587.4 308.8L594.0 312.2" stroke="rgba(30,30,30,0.15)" stroke-width="0.9"/><path d="M581.6 311.8L590.4 316.3" stroke="rgba(30,30,30,0.10)" stroke-width="1.0"/><path d="M440.0 310.6L447.1 314.2" stroke="rgba(30,30,30,0.26)" stroke-width="0.9"/><path d="M576.6 312.7L584.8 316.9" stroke="rgba(30,30,30,0.07)" stroke-width="0.9"/><path d="M408.1 314.6L418.7 320.0" stroke="rgba(30,30,30,0.04)" stroke-width="0.9"/><path d="M482.7 307.8L491.4 312.3" stroke="rgba(30,30,30,0.11)" stroke-width="1.1"/><path d="M444.5 310.5L452.8 314.7" stroke="rgba(30,30,30,0.10)" stroke-width="0.7"/><path d="M444.7 311.8L449.7 314.3" stroke="rgba(30,30,30,0.14)" stroke-width="1.3"/><path d="M588.7 308.2L594.0 310.9" stroke="rgba(30,30,30,0.05)" stroke-width="1.1"/><path d="M403.5 310.6L413.7 315.8" stroke="rgba(30,30,30,0.07)" stroke-width="1.3"/><path d="M560.2 309.7L565.0 312.2" stroke="rgba(30,30,30,0.14)" stroke-width="0.7"/><path d="M423.2 310.3L428.9 313.2" stroke="rgba(30,30,30,0.07)" stroke-width="0.9"/><path d="M567.0 310.0L572.9 313.1" stroke="rgba(30,30,30,0.08)" stroke-width="0.7"/><path d="M416.2 309.4L424.6 313.7" stroke="rgba(30,30,30,0.06)" stroke-width="0.8"/><path d="M545.3 308.7L555.3 313.8" stroke="rgba(30,30,30,0.10)" stroke-width="0.9"/><path d="M450.3 313.6L458.4 317.7" stroke="rgba(30,30,30,0.21)" stroke-width="0.9"/><path d="M537.3 315.9L542.5 318.5" stroke="rgba(30,30,30,0.07)" stroke-width="0.9"/><path d="M468.1 308.3L474.1 311.4" stroke="rgba(30,30,30,0.06)" stroke-width="1.1"/><path d="M562.9 314.9L571.5 319.2" stroke="rgba(30,30,30,0.09)" stroke-width="0.9"/><path d="M552.9 313.1L562.8 318.1" stroke="rgba(30,30,30,0.09)" stroke-width="1.3"/><path d="M565.7 314.3L573.5 318.3" stroke="rgba(30,30,30,0.13)" stroke-width="1.1"/><path d="M452.5 309.9L459.4 313.5" stroke="rgba(30,30,30,0.05)" stroke-width="1.2"/><path d="M562.2 309.7L571.1 314.3" stroke="rgba(30,30,30,0.11)" stroke-width="0.8"/><path d="M508.4 311.9L514.3 314.9" stroke="rgba(30,30,30,0.14)" stroke-width="1.0"/><path d="M493.2 313.9L503.1 319.0" stroke="rgba(30,30,30,0.22)" stroke-width="0.8"/><path d="M489.6 308.4L500.2 313.8" stroke="rgba(30,30,30,0.08)" stroke-width="1.1"/><path d="M561.5 314.0L571.3 319.0" stroke="rgba(30,30,30,0.12)" stroke-width="0.8"/><path d="M580.7 312.0L585.4 314.3" stroke="rgba(30,30,30,0.16)" stroke-width="0.9"/><path d="M558.4 310.3L564.9 313.6" stroke="rgba(30,30,30,0.04)" stroke-width="1.3"/><path d="M381.0 308.0L385.0 310.1" stroke="rgba(30,30,30,0.15)" stroke-width="0.9"/><path d="M443.5 313.7L451.2 317.5" stroke="rgba(30,30,30,0.15)" stroke-width="1.0"/><path d="M562.6 312.1L570.7 316.2" stroke="rgba(30,30,30,0.08)" stroke-width="0.8"/><path d="M420.1 306.3L429.3 311.0" stroke="rgba(30,30,30,0.06)" stroke-width="0.7"/><path d="M453.6 312.6L461.9 316.8" stroke="rgba(30,30,30,0.05)" stroke-width="0.9"/><path d="M449.9 315.1L458.0 319.2" stroke="rgba(30,30,30,0.28)" stroke-width="1.0"/><path d="M481.0 308.3L485.7 310.7" stroke="rgba(30,30,30,0.11)" stroke-width="0.8"/><path d="M444.4 314.3L453.5 318.9" stroke="rgba(30,30,30,0.11)" stroke-width="1.2"/><path d="M479.9 306.1L487.0 309.7" stroke="rgba(30,30,30,0.12)" stroke-width="0.7"/><path d="M416.1 310.7L422.6 314.0" stroke="rgba(30,30,30,0.07)" stroke-width="1.1"/><path d="M580.4 310.5L586.7 313.7" stroke="rgba(30,30,30,0.09)" stroke-width="0.9"/><path d="M452.7 310.1L461.2 314.5" stroke="rgba(30,30,30,0.11)" stroke-width="1.0"/><path d="M452.4 313.3L459.4 316.9" stroke="rgba(30,30,30,0.14)" stroke-width="1.1"/><path d="M553.1 309.9L563.6 315.3" stroke="rgba(30,30,30,0.07)" stroke-width="0.7"/><path d="M485.0 315.3L493.0 319.4" stroke="rgba(30,30,30,0.13)" stroke-width="1.1"/><path d="M381.0 312.1L387.8 315.6" stroke="rgba(30,30,30,0.06)" stroke-width="0.7"/><path d="M530.8 310.4L540.4 315.2" stroke="rgba(30,30,30,0.12)" stroke-width="0.8"/><path d="M539.1 309.3L545.8 312.7" stroke="rgba(30,30,30,0.14)" stroke-width="1.2"/><path d="M584.8 310.3L590.3 313.2" stroke="rgba(30,30,30,0.07)" stroke-width="0.7"/><path d="M516.6 316.1L524.2 320.0" stroke="rgba(30,30,30,0.05)" stroke-width="1.5"/><path d="M448.5 315.4L454.1 318.2" stroke="rgba(30,30,30,0.08)" stroke-width="1.0"/><path d="M474.6 308.7L482.5 312.8" stroke="rgba(30,30,30,0.15)" stroke-width="1.3"/><path d="M438.5 310.6L443.9 313.3" stroke="rgba(30,30,30,0.05)" stroke-width="1.2"/><path d="M533.3 311.7L541.6 316.0" stroke="rgba(30,30,30,0.09)" stroke-width="0.7"/><path d="M532.3 309.7L537.3 312.3" stroke="rgba(30,30,30,0.06)" stroke-width="1.4"/><path d="M385.9 313.7L391.6 316.6" stroke="rgba(30,30,30,0.09)" stroke-width="1.3"/><path d="M413.9 312.2L422.1 316.4" stroke="rgba(30,30,30,0.11)" stroke-width="0.8"/><path d="M575.7 313.2L581.6 316.2" stroke="rgba(30,30,30,0.26)" stroke-width="0.7"/><path d="M475.6 309.6L485.9 314.8" stroke="rgba(30,30,30,0.06)" stroke-width="1.0"/><path d="M565.6 307.1L574.7 311.7" stroke="rgba(30,30,30,0.06)" stroke-width="1.2"/><path d="M424.2 308.9L433.7 313.7" stroke="rgba(30,30,30,0.26)" stroke-width="0.8"/><path d="M389.5 310.2L394.9 313.0" stroke="rgba(30,30,30,0.13)" stroke-width="1.1"/><path d="M471.3 308.5L480.4 313.1" stroke="rgba(30,30,30,0.08)" stroke-width="0.8"/><path d="M481.6 311.3L488.8 315.0" stroke="rgba(30,30,30,0.10)" stroke-width="1.4"/><path d="M579.7 313.9L587.6 318.0" stroke="rgba(30,30,30,0.08)" stroke-width="1.1"/><path d="M480.7 309.8L487.6 313.3" stroke="rgba(30,30,30,0.07)" stroke-width="1.2"/><path d="M428.6 315.2L437.9 320.0" stroke="rgba(30,30,30,0.08)" stroke-width="1.0"/><path d="M453.9 310.0L462.1 314.1" stroke="rgba(30,30,30,0.13)" stroke-width="0.9"/><path d="M425.4 313.5L432.3 317.0" stroke="rgba(30,30,30,0.06)" stroke-width="1.4"/><path d="M581.3 315.7L589.6 319.9" stroke="rgba(30,30,30,0.12)" stroke-width="1.2"/><path d="M458.5 308.7L467.4 313.2" stroke="rgba(30,30,30,0.25)" stroke-width="1.0"/><path d="M409.7 315.9L417.5 319.9" stroke="rgba(30,30,30,0.13)" stroke-width="1.0"/><path d="M492.3 313.5L500.7 317.8" stroke="rgba(30,30,30,0.15)" stroke-width="0.8"/><path d="M584.9 313.7L590.3 316.5" stroke="rgba(30,30,30,0.11)" stroke-width="0.8"/><path d="M447.4 311.6L456.8 316.4" stroke="rgba(30,30,30,0.06)" stroke-width="0.8"/><path d="M427.3 314.0L434.8 317.8" stroke="rgba(30,30,30,0.05)" stroke-width="1.2"/><path d="M408.1 311.9L414.8 315.3" stroke="rgba(30,30,30,0.15)" stroke-width="1.1"/><path d="M488.7 311.7L498.7 316.7" stroke="rgba(30,30,30,0.27)" stroke-width="1.3"/><path d="M385.2 310.4L394.8 315.3" stroke="rgba(30,30,30,0.14)" stroke-width="0.8"/><path d="M463.7 315.9L468.8 318.5" stroke="rgba(30,30,30,0.10)" stroke-width="1.2"/><path d="M408.0 312.2L414.8 315.7" stroke="rgba(30,30,30,0.09)" stroke-width="1.1"/><path d="M422.4 307.0L427.3 309.5" stroke="rgba(30,30,30,0.12)" stroke-width="1.2"/><path d="M499.5 315.2L504.3 317.6" stroke="rgba(30,30,30,0.04)" stroke-width="1.3"/><path d="M464.6 313.2L474.4 318.2" stroke="rgba(30,30,30,0.15)" stroke-width="1.2"/><path d="M387.4 312.5L394.7 316.2" stroke="rgba(30,30,30,0.11)" stroke-width="1.4"/><path d="M429.1 309.4L437.5 313.7" stroke="rgba(30,30,30,0.04)" stroke-width="0.9"/><path d="M479.3 310.5L483.9 312.9" stroke="rgba(30,30,30,0.16)" stroke-width="1.1"/><path d="M506.8 314.0L511.9 316.6" stroke="rgba(30,30,30,0.15)" stroke-width="1.1"/><path d="M463.3 310.9L473.4 316.1" stroke="rgba(30,30,30,0.13)" stroke-width="0.8"/><path d="M502.1 308.1L512.0 313.1" stroke="rgba(30,30,30,0.05)" stroke-width="0.8"/><path d="M517.8 313.8L522.8 316.4" stroke="rgba(30,30,30,0.07)" stroke-width="1.2"/><path d="M499.2 307.7L507.1 311.8" stroke="rgba(30,30,30,0.11)" stroke-width="1.2"/><path d="M471.2 314.8L477.3 317.9" stroke="rgba(30,30,30,0.16)" stroke-width="1.1"/><path d="M435.5 311.0L441.0 313.8" stroke="rgba(30,30,30,0.11)" stroke-width="1.1"/><path d="M516.7 311.0L525.9 315.7" stroke="rgba(30,30,30,0.12)" stroke-width="1.1"/><path d="M512.1 306.0L518.4 309.2" stroke="rgba(30,30,30,0.16)" stroke-width="1.4"/><path d="M431.4 313.9L441.0 318.8" stroke="rgba(30,30,30,0.14)" stroke-width="1.5"/><path d="M588.9 310.9L594.0 313.5" stroke="rgba(30,30,30,0.15)" stroke-width="0.8"/><path d="M585.0 311.8L592.8 315.8" stroke="rgba(30,30,30,0.05)" stroke-width="0.7"/><path d="M432.4 310.2L442.9 315.5" stroke="rgba(30,30,30,0.05)" stroke-width="1.2"/><path d="M512.4 312.0L521.2 316.4" stroke="rgba(30,30,30,0.11)" stroke-width="1.2"/><path d="M522.9 307.5L528.5 310.4" stroke="rgba(30,30,30,0.04)" stroke-width="0.9"/><path d="M545.4 313.0L550.9 315.8" stroke="rgba(30,30,30,0.05)" stroke-width="1.3"/><path d="M497.8 309.4L503.9 312.5" stroke="rgba(30,30,30,0.07)" stroke-width="0.9"/><path d="M577.5 311.4L582.0 313.8" stroke="rgba(30,30,30,0.10)" stroke-width="1.3"/><path d="M415.8 307.4L425.1 312.2" stroke="rgba(30,30,30,0.14)" stroke-width="1.4"/><path d="M453.2 314.8L459.9 318.2" stroke="rgba(30,30,30,0.13)" stroke-width="1.5"/><path d="M453.9 306.7L463.8 311.7" stroke="rgba(30,30,30,0.07)" stroke-width="1.5"/><path d="M489.4 316.3L494.5 319.0" stroke="rgba(30,30,30,0.24)" stroke-width="0.9"/><path d="M542.0 315.5L550.8 320.0" stroke="rgba(30,30,30,0.14)" stroke-width="1.0"/><path d="M383.8 312.1L393.1 316.8" stroke="rgba(30,30,30,0.05)" stroke-width="1.2"/><path d="M565.3 308.9L574.2 313.4" stroke="rgba(30,30,30,0.05)" stroke-width="1.2"/><path d="M415.5 311.0L422.2 314.5" stroke="rgba(30,30,30,0.15)" stroke-width="1.1"/><path d="M466.3 314.8L475.4 319.5" stroke="rgba(30,30,30,0.06)" stroke-width="0.9"/><path d="M508.0 309.4L516.5 313.7" stroke="rgba(30,30,30,0.11)" stroke-width="1.4"/><path d="M399.0 308.9L408.4 313.7" stroke="rgba(30,30,30,0.13)" stroke-width="1.4"/><path d="M381.9 314.0L390.5 318.3" stroke="rgba(30,30,30,0.09)" stroke-width="0.9"/><path d="M548.6 309.9L555.6 313.4" stroke="rgba(30,30,30,0.11)" stroke-width="1.3"/><path d="M584.0 313.1L591.5 317.0" stroke="rgba(30,30,30,0.04)" stroke-width="1.0"/><path d="M394.6 312.2L403.2 316.6" stroke="rgba(30,30,30,0.11)" stroke-width="0.7"/><path d="M394.2 310.7L399.0 313.1" stroke="rgba(30,30,30,0.10)" stroke-width="1.4"/><path d="M560.6 315.1L566.1 317.9" stroke="rgba(30,30,30,0.07)" stroke-width="1.5"/><path d="M511.7 311.4L520.5 315.9" stroke="rgba(30,30,30,0.14)" stroke-width="0.9"/><path d="M381.0 314.8L385.8 317.2" stroke="rgba(30,30,30,0.06)" stroke-width="0.8"/><path d="M433.4 311.4L439.2 314.3" stroke="rgba(30,30,30,0.15)" stroke-width="1.2"/><path d="M443.3 306.4L453.4 311.6" stroke="rgba(30,30,30,0.06)" stroke-width="1.3"/><path d="M444.3 312.4L450.1 315.4" stroke="rgba(30,30,30,0.13)" stroke-width="0.8"/><path d="M393.1 313.8L399.0 316.8" stroke="rgba(30,30,30,0.19)" stroke-width="1.5"/><path d="M474.7 306.8L482.5 310.8" stroke="rgba(30,30,30,0.06)" stroke-width="1.4"/><path d="M433.9 309.0L440.6 312.4" stroke="rgba(30,30,30,0.04)" stroke-width="1.5"/><path d="M387.6 310.3L392.5 312.8" stroke="rgba(30,30,30,0.07)" stroke-width="0.9"/><path d="M417.4 311.2L427.5 316.4" stroke="rgba(30,30,30,0.21)" stroke-width="1.5"/><path d="M384.2 312.7L390.1 315.7" stroke="rgba(30,30,30,0.28)" stroke-width="0.8"/><path d="M381.7 310.6L387.1 313.3" stroke="rgba(30,30,30,0.10)" stroke-width="0.7"/><path d="M437.5 312.7L443.6 315.8" stroke="rgba(30,30,30,0.10)" stroke-width="0.9"/><path d="M415.6 311.3L423.1 315.1" stroke="rgba(30,30,30,0.11)" stroke-width="0.7"/><path d="M445.6 313.4L451.5 316.4" stroke="rgba(30,30,30,0.13)" stroke-width="1.4"/><path d="M565.8 312.2L570.7 314.7" stroke="rgba(30,30,30,0.09)" stroke-width="0.9"/><path d="M387.6 315.3L393.3 318.2" stroke="rgba(30,30,30,0.27)" stroke-width="1.2"/><path d="M417.8 308.2L425.5 312.1" stroke="rgba(30,30,30,0.05)" stroke-width="0.7"/><path d="M555.1 309.5L565.1 314.6" stroke="rgba(30,30,30,0.25)" stroke-width="1.2"/><path d="M479.4 313.4L484.9 316.2" stroke="rgba(30,30,30,0.14)" stroke-width="1.5"/><path d="M517.2 307.1L527.1 312.1" stroke="rgba(30,30,30,0.10)" stroke-width="1.0"/><path d="M551.0 311.8L559.1 315.9" stroke="rgba(30,30,30,0.15)" stroke-width="1.5"/><path d="M498.2 309.4L505.0 312.9" stroke="rgba(30,30,30,0.12)" stroke-width="1.3"/><path d="M393.6 310.4L400.7 314.0" stroke="rgba(30,30,30,0.13)" stroke-width="1.2"/><path d="M538.6 310.7L548.9 316.0" stroke="rgba(30,30,30,0.15)" stroke-width="0.9"/><path d="M501.9 311.1L511.2 315.8" stroke="rgba(30,30,30,0.06)" stroke-width="1.3"/><path d="M532.6 312.3L540.1 316.1" stroke="rgba(30,30,30,0.07)" stroke-width="0.7"/><path d="M394.8 311.7L403.2 316.0" stroke="rgba(30,30,30,0.13)" stroke-width="1.0"/><path d="M512.0 311.2L521.3 315.9" stroke="rgba(30,30,30,0.10)" stroke-width="1.4"/><path d="M496.9 310.4L504.8 314.4" stroke="rgba(30,30,30,0.07)" stroke-width="0.9"/><path d="M491.4 307.8L499.7 312.0" stroke="rgba(30,30,30,0.14)" stroke-width="1.5"/><path d="M449.8 310.4L459.5 315.3" stroke="rgba(30,30,30,0.10)" stroke-width="1.5"/><path d="M427.0 307.0L433.9 310.5" stroke="rgba(30,30,30,0.10)" stroke-width="0.8"/><path d="M556.5 314.9L562.3 317.9" stroke="rgba(30,30,30,0.16)" stroke-width="1.4"/><path d="M505.5 311.5L514.4 316.0" stroke="rgba(30,30,30,0.07)" stroke-width="1.4"/><path d="M392.9 311.3L402.5 316.2" stroke="rgba(30,30,30,0.09)" stroke-width="1.1"/><path d="M485.4 312.8L493.0 316.7" stroke="rgba(30,30,30,0.13)" stroke-width="1.0"/><path d="M526.8 308.0L536.7 313.0" stroke="rgba(30,30,30,0.08)" stroke-width="1.4"/><path d="M528.0 311.2L533.9 314.2" stroke="rgba(30,30,30,0.07)" stroke-width="0.8"/><path d="M588.5 306.0L594.0 308.8" stroke="rgba(30,30,30,0.25)" stroke-width="0.8"/><path d="M460.1 309.1L465.6 311.9" stroke="rgba(30,30,30,0.12)" stroke-width="0.7"/><path d="M388.2 311.1L395.6 314.9" stroke="rgba(30,30,30,0.20)" stroke-width="1.4"/><path d="M561.9 308.7L572.2 313.9" stroke="rgba(30,30,30,0.14)" stroke-width="1.0"/><path d="M467.6 312.8L476.5 317.3" stroke="rgba(30,30,30,0.07)" stroke-width="0.7"/><path d="M580.7 309.7L591.2 315.0" stroke="rgba(30,30,30,0.16)" stroke-width="1.5"/><path d="M407.5 311.0L416.4 315.5" stroke="rgba(30,30,30,0.06)" stroke-width="0.9"/><path d="M507.2 314.8L517.4 319.9" stroke="rgba(30,30,30,0.07)" stroke-width="0.8"/><path d="M462.4 309.7L469.9 313.5" stroke="rgba(30,30,30,0.05)" stroke-width="0.8"/><path d="M571.1 310.6L578.4 314.3" stroke="rgba(30,30,30,0.14)" stroke-width="1.4"/><path d="M394.1 315.8L402.4 320.0" stroke="rgba(30,30,30,0.11)" stroke-width="0.8"/><path d="M381.0 310.8L385.0 312.8" stroke="rgba(30,30,30,0.09)" stroke-width="0.9"/><path d="M583.2 306.8L593.4 312.0" stroke="rgba(30,30,30,0.05)" stroke-width="0.9"/><path d="M532.6 308.8L539.0 312.1" stroke="rgba(30,30,30,0.12)" stroke-width="0.9"/><path d="M540.3 314.7L550.2 319.7" stroke="rgba(30,30,30,0.09)" stroke-width="1.3"/><path d="M443.3 313.5L453.2 318.5" stroke="rgba(30,30,30,0.23)" stroke-width="1.4"/><path d="M471.8 309.7L480.5 314.2" stroke="rgba(30,30,30,0.13)" stroke-width="1.5"/><path d="M381.0 312.2L389.8 316.7" stroke="rgba(30,30,30,0.13)" stroke-width="1.0"/><path d="M384.5 312.1L394.8 317.3" stroke="rgba(30,30,30,0.11)" stroke-width="0.8"/><path d="M498.0 313.8L507.0 318.3" stroke="rgba(30,30,30,0.07)" stroke-width="1.3"/><path d="M459.1 307.6L469.4 312.9" stroke="rgba(30,30,30,0.06)" stroke-width="1.5"/><path d="M570.8 310.9L580.9 316.1" stroke="rgba(30,30,30,0.12)" stroke-width="1.5"/><path d="M461.2 314.1L468.1 317.6" stroke="rgba(30,30,30,0.13)" stroke-width="1.2"/><path d="M435.2 306.0L441.3 309.1" stroke="rgba(30,30,30,0.05)" stroke-width="1.3"/><path d="M398.6 310.8L408.9 316.1" stroke="rgba(30,30,30,0.08)" stroke-width="1.4"/><path d="M399.2 308.8L403.9 311.1" stroke="rgba(30,30,30,0.09)" stroke-width="0.8"/><path d="M555.4 313.9L565.5 319.1" stroke="rgba(30,30,30,0.14)" stroke-width="1.2"/><path d="M562.5 311.9L572.4 316.9" stroke="rgba(30,30,30,0.09)" stroke-width="1.3"/><path d="M520.1 316.1L526.6 319.4" stroke="rgba(30,30,30,0.25)" stroke-width="0.7"/><path d="M501.0 311.5L506.1 314.1" stroke="rgba(30,30,30,0.04)" stroke-width="0.9"/><path d="M574.5 312.0L584.8 317.2" stroke="rgba(30,30,30,0.05)" stroke-width="0.9"/><path d="M512.9 312.1L522.2 316.8" stroke="rgba(30,30,30,0.15)" stroke-width="1.3"/><path d="M397.5 309.5L404.7 313.1" stroke="rgba(30,30,30,0.08)" stroke-width="0.9"/><path d="M574.8 310.5L580.1 313.3" stroke="rgba(30,30,30,0.07)" stroke-width="1.0"/><path d="M403.8 310.9L412.4 315.3" stroke="rgba(30,30,30,0.09)" stroke-width="0.9"/><path d="M487.9 312.9L493.6 315.8" stroke="rgba(30,30,30,0.07)" stroke-width="1.4"/><path d="M588.9 309.4L594.0 312.0" stroke="rgba(30,30,30,0.05)" stroke-width="0.9"/><path d="M424.1 310.0L431.3 313.7" stroke="rgba(30,30,30,0.14)" stroke-width="1.3"/><path d="M412.3 313.4L418.4 316.6" stroke="rgba(30,30,30,0.13)" stroke-width="0.8"/><path d="M423.0 313.3L433.3 318.5" stroke="rgba(30,30,30,0.07)" stroke-width="1.5"/><path d="M546.7 310.2L555.5 314.7" stroke="rgba(30,30,30,0.05)" stroke-width="1.3"/><path d="M455.1 310.4L464.6 315.3" stroke="rgba(30,30,30,0.15)" stroke-width="1.0"/><path d="M547.0 311.3L553.6 314.6" stroke="rgba(30,30,30,0.15)" stroke-width="0.9"/><path d="M453.8 313.8L458.7 316.3" stroke="rgba(30,30,30,0.07)" stroke-width="1.0"/><path d="M438.9 313.9L443.6 316.3" stroke="rgba(30,30,30,0.06)" stroke-width="1.3"/><path d="M490.2 309.3L499.9 314.3" stroke="rgba(30,30,30,0.05)" stroke-width="1.2"/><path d="M556.7 313.7L564.1 317.5" stroke="rgba(30,30,30,0.09)" stroke-width="1.4"/><path d="M568.6 307.1L577.2 311.5" stroke="rgba(30,30,30,0.19)" stroke-width="0.9"/><path d="M545.8 312.6L551.8 315.7" stroke="rgba(30,30,30,0.05)" stroke-width="1.0"/><path d="M437.0 313.0L443.4 316.3" stroke="rgba(30,30,30,0.10)" stroke-width="0.9"/><path d="M548.0 307.2L554.5 310.5" stroke="rgba(30,30,30,0.12)" stroke-width="1.4"/><path d="M483.7 311.5L489.2 314.3" stroke="rgba(30,30,30,0.11)" stroke-width="1.0"/><path d="M489.2 310.1L495.6 313.3" stroke="rgba(30,30,30,0.11)" stroke-width="0.8"/><path d="M381.0 309.4L386.2 312.1" stroke="rgba(30,30,30,0.12)" stroke-width="0.7"/><path d="M381.4 310.1L388.7 313.8" stroke="rgba(30,30,30,0.13)" stroke-width="1.2"/><path d="M420.9 307.1L430.3 311.9" stroke="rgba(30,30,30,0.04)" stroke-width="1.5"/><path d="M522.4 310.6L531.0 315.0" stroke="rgba(30,30,30,0.15)" stroke-width="1.0"/><path d="M502.5 310.0L510.0 313.8" stroke="rgba(30,30,30,0.05)" stroke-width="1.0"/><path d="M515.7 311.4L525.0 316.1" stroke="rgba(30,30,30,0.16)" stroke-width="0.8"/><path d="M512.9 309.9L521.6 314.3" stroke="rgba(30,30,30,0.07)" stroke-width="0.8"/><path d="M508.3 309.0L517.4 313.7" stroke="rgba(30,30,30,0.13)" stroke-width="0.8"/><path d="M432.3 309.6L438.1 312.5" stroke="rgba(30,30,30,0.04)" stroke-width="0.7"/><path d="M459.8 310.3L464.8 312.9" stroke="rgba(30,30,30,0.05)" stroke-width="1.2"/><path d="M513.6 309.9L521.4 313.9" stroke="rgba(30,30,30,0.16)" stroke-width="0.7"/><path d="M465.4 315.8L473.7 320.0" stroke="rgba(30,30,30,0.04)" stroke-width="1.0"/><path d="M466.5 309.6L472.0 312.4" stroke="rgba(30,30,30,0.10)" stroke-width="1.2"/><path d="M417.8 310.2L425.9 314.4" stroke="rgba(30,30,30,0.07)" stroke-width="1.5"/><path d="M408.1 311.9L416.5 316.2" stroke="rgba(30,30,30,0.10)" stroke-width="1.4"/><path d="M493.1 307.0L497.7 309.3" stroke="rgba(30,30,30,0.08)" stroke-width="1.2"/><path d="M507.2 311.9L514.0 315.4" stroke="rgba(30,30,30,0.08)" stroke-width="1.4"/><path d="M529.1 310.1L539.4 315.3" stroke="rgba(30,30,30,0.09)" stroke-width="1.2"/><path d="M438.9 312.5L445.1 315.7" stroke="rgba(30,30,30,0.06)" stroke-width="0.8"/><path d="M391.0 312.0L397.1 315.1" stroke="rgba(30,30,30,0.26)" stroke-width="1.0"/><path d="M381.0 313.3L386.3 316.0" stroke="rgba(30,30,30,0.14)" stroke-width="1.0"/><path d="M455.0 307.9L463.2 312.1" stroke="rgba(30,30,30,0.09)" stroke-width="1.4"/><path d="M393.7 315.4L402.7 320.0" stroke="rgba(30,30,30,0.11)" stroke-width="0.8"/><path d="M564.7 311.5L569.5 313.9" stroke="rgba(30,30,30,0.07)" stroke-width="1.0"/><path d="M524.2 309.2L530.1 312.2" stroke="rgba(30,30,30,0.10)" stroke-width="1.4"/><path d="M456.4 308.2L466.8 313.5" stroke="rgba(30,30,30,0.10)" stroke-width="1.3"/><path d="M401.2 307.3L411.7 312.7" stroke="rgba(30,30,30,0.07)" stroke-width="0.7"/><path d="M443.1 310.0L451.8 314.4" stroke="rgba(30,30,30,0.11)" stroke-width="1.3"/><path d="M393.7 314.7L399.4 317.6" stroke="rgba(30,30,30,0.06)" stroke-width="1.4"/><path d="M415.4 311.6L420.3 314.1" stroke="rgba(30,30,30,0.12)" stroke-width="0.9"/><path d="M506.5 314.7L517.0 320.0" stroke="rgba(30,30,30,0.16)" stroke-width="1.2"/><path d="M457.8 309.1L462.7 311.7" stroke="rgba(30,30,30,0.11)" stroke-width="1.1"/><path d="M499.7 313.8L507.6 317.8" stroke="rgba(30,30,30,0.05)" stroke-width="1.3"/><path d="M455.7 309.8L462.9 313.5" stroke="rgba(30,30,30,0.12)" stroke-width="0.7"/><path d="M571.1 311.8L581.7 317.2" stroke="rgba(30,30,30,0.12)" stroke-width="1.0"/><path d="M411.4 311.1L417.1 314.0" stroke="rgba(30,30,30,0.06)" stroke-width="0.9"/><path d="M555.8 309.5L560.8 312.0" stroke="rgba(30,30,30,0.06)" stroke-width="1.1"/><path d="M391.3 312.2L397.0 315.2" stroke="rgba(30,30,30,0.07)" stroke-width="0.7"/><path d="M539.3 307.9L545.8 311.2" stroke="rgba(30,30,30,0.10)" stroke-width="1.5"/><path d="M577.4 311.9L581.9 314.3" stroke="rgba(30,30,30,0.10)" stroke-width="1.4"/><path d="M503.9 314.7L511.1 318.3" stroke="rgba(30,30,30,0.04)" stroke-width="1.5"/><path d="M517.3 310.5L523.0 313.4" stroke="rgba(30,30,30,0.14)" stroke-width="1.4"/><path d="M416.3 308.7L421.7 311.4" stroke="rgba(30,30,30,0.12)" stroke-width="0.8"/><path d="M577.9 307.9L587.6 312.8" stroke="rgba(30,30,30,0.09)" stroke-width="1.5"/><path d="M414.1 314.7L419.8 317.6" stroke="rgba(30,30,30,0.12)" stroke-width="1.4"/><path d="M548.2 309.8L556.5 314.1" stroke="rgba(30,30,30,0.15)" stroke-width="0.8"/><path d="M539.6 313.2L550.3 318.6" stroke="rgba(30,30,30,0.05)" stroke-width="0.8"/><path d="M492.7 308.2L499.7 311.7" stroke="rgba(30,30,30,0.13)" stroke-width="0.8"/><path d="M575.3 312.6L585.6 317.9" stroke="rgba(30,30,30,0.06)" stroke-width="1.4"/><path d="M395.8 308.4L402.8 311.9" stroke="rgba(30,30,30,0.08)" stroke-width="1.2"/><path d="M396.5 309.6L405.9 314.4" stroke="rgba(30,30,30,0.06)" stroke-width="1.5"/><path d="M424.4 313.0L431.0 316.3" stroke="rgba(30,30,30,0.08)" stroke-width="0.8"/><path d="M474.3 308.5L484.7 313.9" stroke="rgba(30,30,30,0.10)" stroke-width="1.5"/><path d="M530.9 309.8L536.9 312.9" stroke="rgba(30,30,30,0.16)" stroke-width="0.9"/><path d="M565.3 307.7L572.9 311.5" stroke="rgba(30,30,30,0.09)" stroke-width="1.1"/><path d="M470.8 308.1L476.9 311.2" stroke="rgba(30,30,30,0.13)" stroke-width="1.4"/><path d="M407.7 312.4L417.9 317.6" stroke="rgba(30,30,30,0.15)" stroke-width="1.4"/><path d="M494.7 306.0L504.6 311.0" stroke="rgba(30,30,30,0.06)" stroke-width="1.5"/><path d="M419.7 315.0L425.0 317.7" stroke="rgba(30,30,30,0.10)" stroke-width="0.9"/><path d="M436.9 310.4L441.4 312.7" stroke="rgba(30,30,30,0.05)" stroke-width="1.3"/><path d="M529.9 307.5L536.3 310.8" stroke="rgba(30,30,30,0.08)" stroke-width="0.9"/><path d="M476.9 306.0L487.5 311.4" stroke="rgba(30,30,30,0.14)" stroke-width="1.3"/><path d="M392.5 310.4L403.2 315.8" stroke="rgba(30,30,30,0.07)" stroke-width="1.3"/><path d="M532.2 310.2L542.7 315.5" stroke="rgba(30,30,30,0.11)" stroke-width="0.9"/><path d="M395.3 307.0L405.3 312.2" stroke="rgba(30,30,30,0.05)" stroke-width="1.1"/><path d="M419.9 311.9L429.3 316.7" stroke="rgba(30,30,30,0.12)" stroke-width="1.0"/><path d="M568.4 310.1L574.0 312.9" stroke="rgba(30,30,30,0.12)" stroke-width="1.2"/><path d="M590.3 309.0L594.0 310.9" stroke="rgba(30,30,30,0.07)" stroke-width="1.0"/><path d="M446.7 309.8L454.4 313.7" stroke="rgba(30,30,30,0.15)" stroke-width="1.3"/><path d="M452.2 310.5L457.4 313.2" stroke="rgba(30,30,30,0.08)" stroke-width="1.2"/><path d="M417.4 308.4L426.2 312.9" stroke="rgba(30,30,30,0.20)" stroke-width="1.2"/><path d="M433.5 313.0L441.7 317.1" stroke="rgba(30,30,30,0.11)" stroke-width="0.9"/><path d="M478.4 313.8L483.2 316.2" stroke="rgba(30,30,30,0.10)" stroke-width="1.4"/><path d="M498.9 314.2L504.2 316.9" stroke="rgba(30,30,30,0.16)" stroke-width="1.3"/><path d="M557.5 310.7L565.3 314.7" stroke="rgba(30,30,30,0.06)" stroke-width="0.9"/><path d="M489.0 310.8L497.5 315.1" stroke="rgba(30,30,30,0.07)" stroke-width="1.1"/><path d="M582.0 311.9L590.5 316.3" stroke="rgba(30,30,30,0.04)" stroke-width="0.9"/><path d="M447.3 311.4L456.3 316.0" stroke="rgba(30,30,30,0.09)" stroke-width="0.7"/><path d="M389.9 309.6L398.6 314.0" stroke="rgba(30,30,30,0.08)" stroke-width="1.5"/><path d="M561.7 310.5L568.0 313.7" stroke="rgba(30,30,30,0.05)" stroke-width="1.2"/><path d="M529.6 308.9L536.7 312.5" stroke="rgba(30,30,30,0.07)" stroke-width="1.5"/><path d="M584.3 314.0L590.1 316.9" stroke="rgba(30,30,30,0.09)" stroke-width="1.3"/><path d="M422.1 306.0L429.5 309.7" stroke="rgba(30,30,30,0.16)" stroke-width="1.2"/><path d="M421.5 316.0L427.8 319.2" stroke="rgba(30,30,30,0.12)" stroke-width="1.0"/><path d="M556.2 311.7L565.2 316.3" stroke="rgba(30,30,30,0.04)" stroke-width="1.1"/><path d="M577.5 310.8L584.1 314.1" stroke="rgba(30,30,30,0.22)" stroke-width="1.3"/><path d="M460.1 315.3L467.2 318.9" stroke="rgba(30,30,30,0.16)" stroke-width="1.0"/><path d="M457.9 308.4L463.2 311.1" stroke="rgba(30,30,30,0.06)" stroke-width="0.9"/><path d="M483.1 313.3L493.1 318.4" stroke="rgba(30,30,30,0.07)" stroke-width="1.3"/><path d="M469.1 312.2L477.7 316.6" stroke="rgba(30,30,30,0.08)" stroke-width="1.5"/><path d="M420.6 314.5L428.0 318.3" stroke="rgba(30,30,30,0.16)" stroke-width="0.9"/><path d="M563.5 315.1L568.3 317.6" stroke="rgba(30,30,30,0.12)" stroke-width="1.1"/><path d="M550.9 312.2L560.6 317.2" stroke="rgba(30,30,30,0.07)" stroke-width="1.3"/><path d="M553.0 307.6L560.1 311.2" stroke="rgba(30,30,30,0.12)" stroke-width="0.8"/><path d="M505.9 312.4L512.7 315.9" stroke="rgba(30,30,30,0.11)" stroke-width="0.9"/><path d="M408.4 311.1L417.5 315.7" stroke="rgba(30,30,30,0.12)" stroke-width="1.2"/><path d="M523.7 314.1L528.8 316.7" stroke="rgba(30,30,30,0.25)" stroke-width="0.7"/><path d="M515.5 312.5L521.9 315.7" stroke="rgba(30,30,30,0.09)" stroke-width="1.1"/><path d="M421.1 311.1L431.5 316.5" stroke="rgba(30,30,30,0.16)" stroke-width="1.4"/><path d="M569.6 312.7L574.3 315.1" stroke="rgba(30,30,30,0.08)" stroke-width="0.8"/><path d="M381.6 307.7L392.1 313.1" stroke="rgba(30,30,30,0.11)" stroke-width="1.4"/><path d="M552.6 313.7L557.2 316.0" stroke="rgba(30,30,30,0.09)" stroke-width="1.2"/><path d="M381.1 308.6L387.9 312.1" stroke="rgba(30,30,30,0.11)" stroke-width="1.1"/><path d="M493.7 307.4L499.3 310.3" stroke="rgba(30,30,30,0.07)" stroke-width="0.8"/><path d="M473.6 308.9L481.2 312.8" stroke="rgba(30,30,30,0.15)" stroke-width="1.4"/><path d="M548.9 309.5L558.9 314.6" stroke="rgba(30,30,30,0.08)" stroke-width="1.0"/><path d="M516.7 307.7L526.6 312.7" stroke="rgba(30,30,30,0.14)" stroke-width="0.8"/><path d="M537.0 309.3L543.2 312.5" stroke="rgba(30,30,30,0.11)" stroke-width="1.1"/><path d="M453.9 309.4L463.2 314.1" stroke="rgba(30,30,30,0.06)" stroke-width="1.4"/><path d="M381.0 310.2L384.3 311.9" stroke="rgba(30,30,30,0.14)" stroke-width="0.9"/><path d="M475.8 312.9L481.1 315.7" stroke="rgba(30,30,30,0.09)" stroke-width="1.3"/><path d="M492.7 310.4L501.2 314.7" stroke="rgba(30,30,30,0.07)" stroke-width="1.2"/><path d="M456.3 310.0L466.7 315.3" stroke="rgba(30,30,30,0.09)" stroke-width="1.0"/><path d="M510.4 307.1L519.0 311.5" stroke="rgba(30,30,30,0.06)" stroke-width="1.2"/><path d="M569.2 310.9L576.7 314.7" stroke="rgba(30,30,30,0.12)" stroke-width="0.8"/><path d="M552.9 309.2L559.8 312.7" stroke="rgba(30,30,30,0.07)" stroke-width="0.8"/><path d="M394.7 309.9L404.5 314.9" stroke="rgba(30,30,30,0.16)" stroke-width="1.2"/><path d="M518.7 315.8L525.4 319.2" stroke="rgba(30,30,30,0.09)" stroke-width="1.0"/><path d="M554.4 306.0L561.9 309.9" stroke="rgba(30,30,30,0.12)" stroke-width="1.3"/><path d="M505.9 311.0L511.6 313.9" stroke="rgba(30,30,30,0.06)" stroke-width="1.1"/><path d="M445.9 312.8L455.4 317.7" stroke="rgba(30,30,30,0.13)" stroke-width="0.7"/><path d="M409.6 309.3L420.3 314.7" stroke="rgba(30,30,30,0.10)" stroke-width="0.9"/><path d="M515.2 310.5L525.5 315.7" stroke="rgba(30,30,30,0.15)" stroke-width="1.4"/><path d="M515.0 310.4L520.9 313.5" stroke="rgba(30,30,30,0.11)" stroke-width="0.8"/><path d="M577.8 311.9L583.5 314.8" stroke="rgba(30,30,30,0.13)" stroke-width="0.9"/><path d="M456.5 312.5L466.0 317.3" stroke="rgba(30,30,30,0.06)" stroke-width="1.5"/><path d="M587.3 309.4L593.6 312.6" stroke="rgba(30,30,30,0.09)" stroke-width="0.8"/><path d="M582.9 312.5L589.8 316.0" stroke="rgba(30,30,30,0.07)" stroke-width="1.0"/><path d="M420.3 312.6L430.9 318.0" stroke="rgba(30,30,30,0.10)" stroke-width="1.2"/><path d="M405.9 313.6L414.8 318.1" stroke="rgba(30,30,30,0.18)" stroke-width="1.4"/><path d="M584.9 310.3L589.7 312.8" stroke="rgba(30,30,30,0.13)" stroke-width="1.4"/><path d="M564.4 313.9L572.6 318.1" stroke="rgba(30,30,30,0.08)" stroke-width="1.4"/><path d="M431.5 313.5L441.1 318.4" stroke="rgba(30,30,30,0.13)" stroke-width="1.4"/><path d="M445.9 314.1L455.6 319.1" stroke="rgba(30,30,30,0.06)" stroke-width="1.3"/><path d="M459.7 313.6L466.0 316.8" stroke="rgba(30,30,30,0.08)" stroke-width="1.5"/><path d="M520.7 310.6L530.4 315.5" stroke="rgba(30,30,30,0.14)" stroke-width="1.4"/><path d="M450.0 314.4L460.3 319.6" stroke="rgba(30,30,30,0.14)" stroke-width="1.4"/><path d="M565.5 307.0L576.0 312.4" stroke="rgba(30,30,30,0.07)" stroke-width="0.8"/><path d="M457.6 310.6L465.7 314.8" stroke="rgba(30,30,30,0.15)" stroke-width="1.3"/><path d="M554.0 313.4L560.7 316.8" stroke="rgba(30,30,30,0.08)" stroke-width="1.4"/><path d="M381.0 312.5L388.2 316.2" stroke="rgba(30,30,30,0.05)" stroke-width="1.1"/><path d="M436.1 311.4L443.6 315.2" stroke="rgba(30,30,30,0.09)" stroke-width="1.4"/><path d="M424.1 308.7L431.7 312.6" stroke="rgba(30,30,30,0.11)" stroke-width="0.8"/><path d="M467.8 311.3L473.8 314.4" stroke="rgba(30,30,30,0.07)" stroke-width="1.2"/><path d="M415.4 306.0L425.0 310.9" stroke="rgba(30,30,30,0.06)" stroke-width="1.1"/><path d="M572.4 315.6L579.9 319.4" stroke="rgba(30,30,30,0.08)" stroke-width="1.3"/><path d="M440.0 311.0L447.3 314.8" stroke="rgba(30,30,30,0.26)" stroke-width="0.9"/><path d="M391.1 312.2L397.2 315.3" stroke="rgba(30,30,30,0.10)" stroke-width="1.3"/><path d="M411.4 314.6L420.5 319.2" stroke="rgba(30,30,30,0.05)" stroke-width="1.4"/><path d="M488.4 316.4L495.5 320.0" stroke="rgba(30,30,30,0.13)" stroke-width="1.0"/><path d="M435.8 306.0L446.3 311.4" stroke="rgba(30,30,30,0.12)" stroke-width="1.5"/><path d="M505.8 311.1L515.6 316.1" stroke="rgba(30,30,30,0.13)" stroke-width="1.3"/><path d="M469.1 313.4L473.8 315.8" stroke="rgba(30,30,30,0.14)" stroke-width="1.3"/><path d="M456.6 309.4L463.0 312.7" stroke="rgba(30,30,30,0.08)" stroke-width="1.3"/><path d="M410.6 313.0L415.9 315.7" stroke="rgba(30,30,30,0.12)" stroke-width="1.2"/><path d="M506.8 313.4L513.1 316.6" stroke="rgba(30,30,30,0.05)" stroke-width="1.2"/><path d="M477.2 310.7L486.9 315.7" stroke="rgba(30,30,30,0.13)" stroke-width="1.2"/><path d="M590.3 309.9L594.0 311.8" stroke="rgba(30,30,30,0.07)" stroke-width="1.4"/><path d="M480.7 311.4L485.7 313.9" stroke="rgba(30,30,30,0.17)" stroke-width="0.9"/><path d="M490.7 307.4L497.2 310.7" stroke="rgba(30,30,30,0.05)" stroke-width="1.0"/><path d="M477.0 312.5L484.8 316.5" stroke="rgba(30,30,30,0.06)" stroke-width="0.8"/><path d="M389.5 311.8L398.4 316.3" stroke="rgba(30,30,30,0.18)" stroke-width="0.8"/><path d="M382.7 308.6L390.7 312.7" stroke="rgba(30,30,30,0.07)" stroke-width="1.4"/><path d="M566.1 308.5L575.7 313.4" stroke="rgba(30,30,30,0.08)" stroke-width="0.9"/><path d="M532.9 311.2L538.1 313.8" stroke="rgba(30,30,30,0.07)" stroke-width="0.8"/><path d="M569.5 307.1L575.8 310.3" stroke="rgba(30,30,30,0.05)" stroke-width="1.1"/><path d="M445.4 316.2L449.9 318.5" stroke="rgba(30,30,30,0.11)" stroke-width="0.8"/><path d="M481.6 308.7L487.1 311.5" stroke="rgba(30,30,30,0.13)" stroke-width="0.9"/><path d="M578.8 314.3L587.0 318.5" stroke="rgba(30,30,30,0.09)" stroke-width="1.0"/><path d="M390.4 307.8L400.7 313.1" stroke="rgba(30,30,30,0.05)" stroke-width="1.3"/><path d="M484.2 311.7L490.7 315.0" stroke="rgba(30,30,30,0.07)" stroke-width="1.1"/><path d="M477.7 312.8L482.6 315.4" stroke="rgba(30,30,30,0.25)" stroke-width="1.2"/><path d="M549.8 306.0L559.8 311.1" stroke="rgba(30,30,30,0.15)" stroke-width="1.0"/><path d="M534.3 309.2L540.1 312.2" stroke="rgba(30,30,30,0.11)" stroke-width="0.8"/><path d="M515.9 312.3L521.1 315.0" stroke="rgba(30,30,30,0.09)" stroke-width="1.0"/><path d="M551.3 311.0L561.1 316.0" stroke="rgba(30,30,30,0.09)" stroke-width="1.2"/><path d="M506.9 314.4L514.2 318.1" stroke="rgba(30,30,30,0.08)" stroke-width="0.8"/><path d="M586.9 310.1L591.6 312.5" stroke="rgba(30,30,30,0.21)" stroke-width="1.0"/><path d="M386.2 309.0L393.3 312.6" stroke="rgba(30,30,30,0.10)" stroke-width="1.4"/><path d="M462.9 312.4L467.5 314.8" stroke="rgba(30,30,30,0.10)" stroke-width="1.0"/><path d="M439.8 309.2L445.1 311.9" stroke="rgba(30,30,30,0.06)" stroke-width="0.9"/><path d="M568.6 310.2L574.3 313.1" stroke="rgba(30,30,30,0.10)" stroke-width="1.3"/><path d="M477.5 307.3L484.6 310.9" stroke="rgba(30,30,30,0.07)" stroke-width="1.4"/><path d="M507.7 312.3L518.0 317.6" stroke="rgba(30,30,30,0.05)" stroke-width="1.4"/><path d="M541.7 309.0L551.3 313.9" stroke="rgba(30,30,30,0.10)" stroke-width="1.3"/><path d="M454.2 312.9L464.3 318.0" stroke="rgba(30,30,30,0.13)" stroke-width="0.8"/><path d="M451.9 313.2L459.1 316.9" stroke="rgba(30,30,30,0.09)" stroke-width="0.7"/><path d="M387.5 308.7L395.0 312.5" stroke="rgba(30,30,30,0.07)" stroke-width="0.8"/><path d="M479.3 312.3L485.2 315.3" stroke="rgba(30,30,30,0.05)" stroke-width="1.3"/><path d="M568.4 306.0L579.0 311.4" stroke="rgba(30,30,30,0.12)" stroke-width="1.4"/><path d="M503.0 308.4L512.6 313.3" stroke="rgba(30,30,30,0.06)" stroke-width="0.8"/><path d="M579.0 315.2L585.9 318.7" stroke="rgba(30,30,30,0.14)" stroke-width="1.3"/><path d="M472.7 312.5L483.0 317.8" stroke="rgba(30,30,30,0.15)" stroke-width="1.0"/><path d="M381.0 309.9L386.4 312.7" stroke="rgba(30,30,30,0.11)" stroke-width="1.4"/><path d="M588.8 306.2L594.0 308.8" stroke="rgba(30,30,30,0.06)" stroke-width="1.2"/></g>
<g filter="url(#bl)" stroke-linecap="butt"><path d="M735.5 310.9L740.0 313.2" stroke="rgba(30,30,30,0.13)" stroke-width="0.9"/><path d="M720.1 308.0L728.4 312.2" stroke="rgba(30,30,30,0.09)" stroke-width="1.3"/><path d="M734.6 310.0L740.0 312.7" stroke="rgba(30,30,30,0.13)" stroke-width="0.7"/><path d="M715.4 312.3L721.8 315.6" stroke="rgba(30,30,30,0.10)" stroke-width="0.9"/><path d="M700.0 309.3L704.2 311.4" stroke="rgba(30,30,30,0.16)" stroke-width="0.8"/><path d="M731.0 312.2L740.0 316.8" stroke="rgba(30,30,30,0.13)" stroke-width="1.0"/><path d="M734.0 309.6L740.0 312.7" stroke="rgba(30,30,30,0.13)" stroke-width="1.1"/><path d="M714.5 311.7L724.7 316.9" stroke="rgba(30,30,30,0.08)" stroke-width="1.4"/><path d="M714.4 312.9L722.4 317.0" stroke="rgba(30,30,30,0.10)" stroke-width="1.0"/><path d="M725.2 310.8L730.7 313.6" stroke="rgba(30,30,30,0.15)" stroke-width="1.5"/><path d="M724.4 310.3L732.0 314.1" stroke="rgba(30,30,30,0.11)" stroke-width="0.9"/><path d="M715.3 309.3L725.6 314.5" stroke="rgba(30,30,30,0.14)" stroke-width="1.4"/><path d="M703.1 308.4L712.2 313.0" stroke="rgba(30,30,30,0.07)" stroke-width="1.4"/><path d="M700.4 309.9L708.1 313.9" stroke="rgba(30,30,30,0.06)" stroke-width="1.0"/><path d="M726.4 308.5L731.0 310.9" stroke="rgba(30,30,30,0.22)" stroke-width="1.5"/><path d="M700.0 309.3L705.5 312.1" stroke="rgba(30,30,30,0.14)" stroke-width="0.8"/><path d="M724.2 309.9L731.1 313.4" stroke="rgba(30,30,30,0.10)" stroke-width="1.0"/><path d="M720.1 307.5L729.2 312.1" stroke="rgba(30,30,30,0.04)" stroke-width="1.3"/><path d="M724.6 311.6L734.6 316.7" stroke="rgba(30,30,30,0.12)" stroke-width="0.9"/><path d="M723.2 307.9L729.6 311.2" stroke="rgba(30,30,30,0.14)" stroke-width="1.2"/><path d="M711.9 311.1L719.6 315.0" stroke="rgba(30,30,30,0.07)" stroke-width="1.0"/><path d="M700.0 309.2L704.7 311.5" stroke="rgba(30,30,30,0.04)" stroke-width="0.8"/><path d="M721.6 313.0L729.2 316.9" stroke="rgba(30,30,30,0.16)" stroke-width="1.1"/><path d="M706.0 311.7L714.1 315.8" stroke="rgba(30,30,30,0.12)" stroke-width="1.0"/><path d="M718.8 309.8L723.3 312.1" stroke="rgba(30,30,30,0.05)" stroke-width="0.9"/><path d="M701.2 307.9L706.8 310.7" stroke="rgba(30,30,30,0.10)" stroke-width="0.9"/><path d="M722.8 313.3L728.6 316.2" stroke="rgba(30,30,30,0.13)" stroke-width="1.1"/><path d="M720.9 311.9L725.6 314.3" stroke="rgba(30,30,30,0.11)" stroke-width="1.3"/><path d="M710.8 312.7L718.5 316.6" stroke="rgba(30,30,30,0.07)" stroke-width="1.0"/><path d="M700.0 309.3L705.1 311.9" stroke="rgba(30,30,30,0.14)" stroke-width="0.7"/><path d="M714.5 309.8L721.6 313.4" stroke="rgba(30,30,30,0.20)" stroke-width="0.9"/><path d="M709.8 309.3L720.1 314.5" stroke="rgba(30,30,30,0.06)" stroke-width="1.0"/><path d="M714.0 308.6L723.1 313.3" stroke="rgba(30,30,30,0.10)" stroke-width="1.4"/><path d="M720.4 307.5L730.9 312.8" stroke="rgba(30,30,30,0.12)" stroke-width="1.3"/><path d="M716.6 312.4L723.3 315.8" stroke="rgba(30,30,30,0.07)" stroke-width="1.1"/><path d="M733.5 312.2L740.0 315.5" stroke="rgba(30,30,30,0.07)" stroke-width="1.1"/><path d="M706.8 312.7L713.9 316.3" stroke="rgba(30,30,30,0.11)" stroke-width="0.8"/><path d="M708.9 308.0L719.6 313.5" stroke="rgba(30,30,30,0.08)" stroke-width="1.4"/><path d="M735.3 308.2L740.0 310.6" stroke="rgba(30,30,30,0.07)" stroke-width="1.2"/><path d="M713.7 309.5L721.4 313.4" stroke="rgba(30,30,30,0.15)" stroke-width="0.8"/><path d="M716.2 311.4L725.1 316.0" stroke="rgba(30,30,30,0.09)" stroke-width="1.0"/><path d="M735.1 309.2L740.0 311.6" stroke="rgba(30,30,30,0.17)" stroke-width="1.2"/><path d="M732.5 310.8L738.1 313.6" stroke="rgba(30,30,30,0.09)" stroke-width="1.4"/><path d="M724.5 310.8L731.9 314.6" stroke="rgba(30,30,30,0.13)" stroke-width="1.3"/><path d="M731.2 310.7L737.0 313.7" stroke="rgba(30,30,30,0.12)" stroke-width="1.2"/><path d="M700.0 313.3L704.1 315.4" stroke="rgba(30,30,30,0.12)" stroke-width="0.7"/><path d="M733.2 312.2L740.0 315.7" stroke="rgba(30,30,30,0.26)" stroke-width="1.4"/><path d="M727.8 311.6L733.5 314.5" stroke="rgba(30,30,30,0.06)" stroke-width="0.8"/><path d="M720.9 308.6L728.1 312.3" stroke="rgba(30,30,30,0.10)" stroke-width="1.5"/><path d="M700.7 311.5L705.2 313.8" stroke="rgba(30,30,30,0.12)" stroke-width="1.1"/><path d="M723.7 308.8L730.3 312.2" stroke="rgba(30,30,30,0.08)" stroke-width="1.3"/><path d="M702.4 310.2L711.5 314.9" stroke="rgba(30,30,30,0.12)" stroke-width="1.4"/><path d="M702.7 309.6L708.1 312.4" stroke="rgba(30,30,30,0.13)" stroke-width="1.1"/><path d="M735.3 310.5L740.0 312.9" stroke="rgba(30,30,30,0.09)" stroke-width="0.9"/><path d="M722.2 311.2L729.7 315.0" stroke="rgba(30,30,30,0.05)" stroke-width="0.9"/><path d="M721.1 309.1L730.6 313.9" stroke="rgba(30,30,30,0.25)" stroke-width="1.2"/><path d="M711.8 313.0L719.5 317.0" stroke="rgba(30,30,30,0.11)" stroke-width="0.9"/><path d="M715.4 312.3L721.3 315.3" stroke="rgba(30,30,30,0.05)" stroke-width="1.0"/><path d="M711.4 309.0L717.8 312.3" stroke="rgba(30,30,30,0.06)" stroke-width="0.9"/><path d="M730.7 310.0L740.0 314.7" stroke="rgba(30,30,30,0.15)" stroke-width="0.8"/><path d="M706.7 310.8L712.3 313.7" stroke="rgba(30,30,30,0.08)" stroke-width="0.9"/><path d="M728.1 310.7L736.5 315.0" stroke="rgba(30,30,30,0.08)" stroke-width="1.4"/><path d="M715.7 312.5L724.5 317.0" stroke="rgba(30,30,30,0.13)" stroke-width="1.4"/><path d="M724.9 308.7L735.4 314.1" stroke="rgba(30,30,30,0.12)" stroke-width="1.0"/><path d="M701.8 308.4L712.2 313.8" stroke="rgba(30,30,30,0.15)" stroke-width="1.5"/><path d="M702.8 309.3L707.4 311.6" stroke="rgba(30,30,30,0.15)" stroke-width="1.3"/><path d="M713.5 311.1L721.4 315.1" stroke="rgba(30,30,30,0.09)" stroke-width="1.2"/><path d="M702.8 310.1L709.2 313.4" stroke="rgba(30,30,30,0.06)" stroke-width="0.9"/><path d="M713.8 309.6L719.8 312.6" stroke="rgba(30,30,30,0.07)" stroke-width="1.0"/><path d="M710.3 307.5L719.5 312.2" stroke="rgba(30,30,30,0.14)" stroke-width="1.3"/><path d="M701.5 310.4L709.2 314.3" stroke="rgba(30,30,30,0.13)" stroke-width="1.0"/><path d="M736.4 311.3L740.0 313.1" stroke="rgba(30,30,30,0.08)" stroke-width="1.2"/><path d="M719.6 313.0L727.4 317.0" stroke="rgba(30,30,30,0.14)" stroke-width="1.0"/><path d="M718.6 312.3L723.4 314.8" stroke="rgba(30,30,30,0.05)" stroke-width="1.2"/><path d="M734.1 311.5L739.1 314.0" stroke="rgba(30,30,30,0.07)" stroke-width="1.0"/><path d="M704.2 309.4L709.6 312.2" stroke="rgba(30,30,30,0.16)" stroke-width="0.7"/><path d="M733.0 310.9L738.9 314.0" stroke="rgba(30,30,30,0.06)" stroke-width="0.7"/><path d="M702.9 310.7L713.1 315.8" stroke="rgba(30,30,30,0.12)" stroke-width="0.8"/><path d="M717.0 308.6L722.3 311.3" stroke="rgba(30,30,30,0.12)" stroke-width="0.9"/><path d="M711.0 312.8L719.3 317.0" stroke="rgba(30,30,30,0.13)" stroke-width="1.4"/><path d="M704.0 312.2L709.1 314.8" stroke="rgba(30,30,30,0.06)" stroke-width="0.9"/><path d="M713.7 311.7L720.8 315.4" stroke="rgba(30,30,30,0.14)" stroke-width="1.1"/><path d="M706.8 310.7L716.0 315.4" stroke="rgba(30,30,30,0.12)" stroke-width="1.2"/><path d="M700.0 308.9L705.2 311.5" stroke="rgba(30,30,30,0.11)" stroke-width="1.2"/><path d="M725.3 307.5L734.1 312.0" stroke="rgba(30,30,30,0.13)" stroke-width="1.4"/><path d="M721.6 307.5L726.3 309.9" stroke="rgba(30,30,30,0.12)" stroke-width="0.8"/><path d="M733.0 311.3L740.0 314.9" stroke="rgba(30,30,30,0.07)" stroke-width="1.4"/><path d="M724.9 311.8L731.1 315.0" stroke="rgba(30,30,30,0.09)" stroke-width="1.3"/><path d="M713.9 310.0L722.5 314.3" stroke="rgba(30,30,30,0.07)" stroke-width="0.9"/><path d="M709.4 310.1L717.2 314.1" stroke="rgba(30,30,30,0.15)" stroke-width="1.3"/><path d="M723.1 308.7L732.4 313.5" stroke="rgba(30,30,30,0.08)" stroke-width="0.9"/><path d="M703.9 308.6L711.3 312.4" stroke="rgba(30,30,30,0.11)" stroke-width="0.8"/><path d="M719.3 308.0L729.1 313.0" stroke="rgba(30,30,30,0.12)" stroke-width="1.2"/><path d="M709.4 311.4L715.2 314.3" stroke="rgba(30,30,30,0.04)" stroke-width="0.9"/><path d="M709.3 310.6L715.7 313.9" stroke="rgba(30,30,30,0.08)" stroke-width="1.0"/><path d="M731.1 309.7L735.6 312.0" stroke="rgba(30,30,30,0.06)" stroke-width="1.0"/><path d="M700.0 312.3L706.7 315.6" stroke="rgba(30,30,30,0.10)" stroke-width="1.4"/><path d="M702.9 313.6L709.2 316.8" stroke="rgba(30,30,30,0.06)" stroke-width="1.4"/><path d="M719.2 310.2L728.1 314.7" stroke="rgba(30,30,30,0.12)" stroke-width="1.2"/><path d="M701.4 308.8L709.7 313.1" stroke="rgba(30,30,30,0.16)" stroke-width="1.1"/><path d="M712.3 310.1L718.1 313.1" stroke="rgba(30,30,30,0.25)" stroke-width="1.5"/><path d="M724.6 310.6L729.4 313.1" stroke="rgba(30,30,30,0.18)" stroke-width="1.1"/><path d="M716.1 311.9L725.5 316.6" stroke="rgba(30,30,30,0.13)" stroke-width="0.7"/><path d="M716.5 309.5L721.8 312.2" stroke="rgba(30,30,30,0.10)" stroke-width="1.2"/><path d="M735.2 309.7L740.0 312.2" stroke="rgba(30,30,30,0.12)" stroke-width="0.8"/><path d="M708.1 311.8L716.7 316.2" stroke="rgba(30,30,30,0.08)" stroke-width="1.4"/><path d="M721.7 310.4L726.8 313.0" stroke="rgba(30,30,30,0.15)" stroke-width="1.3"/><path d="M732.0 310.3L739.7 314.2" stroke="rgba(30,30,30,0.08)" stroke-width="0.7"/><path d="M721.6 311.0L732.2 316.4" stroke="rgba(30,30,30,0.05)" stroke-width="1.2"/><path d="M713.9 310.8L721.0 314.4" stroke="rgba(30,30,30,0.04)" stroke-width="1.5"/><path d="M728.8 310.6L737.4 315.0" stroke="rgba(30,30,30,0.04)" stroke-width="1.3"/><path d="M732.3 310.6L739.3 314.1" stroke="rgba(30,30,30,0.20)" stroke-width="0.9"/><path d="M705.3 310.3L709.8 312.6" stroke="rgba(30,30,30,0.07)" stroke-width="0.7"/><path d="M716.8 312.4L724.6 316.4" stroke="rgba(30,30,30,0.05)" stroke-width="1.1"/><path d="M709.6 310.2L720.2 315.6" stroke="rgba(30,30,30,0.09)" stroke-width="1.5"/><path d="M727.7 308.8L736.2 313.1" stroke="rgba(30,30,30,0.05)" stroke-width="0.7"/><path d="M722.9 309.7L733.5 315.0" stroke="rgba(30,30,30,0.07)" stroke-width="1.1"/><path d="M713.9 311.1L720.0 314.2" stroke="rgba(30,30,30,0.15)" stroke-width="1.2"/><path d="M700.0 313.9L704.3 316.1" stroke="rgba(30,30,30,0.10)" stroke-width="1.2"/><path d="M705.4 310.6L714.3 315.2" stroke="rgba(30,30,30,0.09)" stroke-width="1.1"/><path d="M717.7 313.3L725.1 317.0" stroke="rgba(30,30,30,0.09)" stroke-width="1.4"/><path d="M725.6 309.8L734.1 314.2" stroke="rgba(30,30,30,0.11)" stroke-width="1.1"/><path d="M733.3 309.9L740.0 313.3" stroke="rgba(30,30,30,0.13)" stroke-width="1.0"/><path d="M728.6 309.5L735.2 312.8" stroke="rgba(30,30,30,0.12)" stroke-width="1.1"/><path d="M734.8 311.5L740.0 314.1" stroke="rgba(30,30,30,0.11)" stroke-width="1.2"/><path d="M726.3 310.6L736.4 315.7" stroke="rgba(30,30,30,0.16)" stroke-width="1.1"/><path d="M700.0 309.1L709.7 314.0" stroke="rgba(30,30,30,0.13)" stroke-width="1.4"/><path d="M710.5 311.1L715.5 313.6" stroke="rgba(30,30,30,0.15)" stroke-width="0.8"/><path d="M700.0 311.6L703.1 313.2" stroke="rgba(30,30,30,0.04)" stroke-width="1.1"/><path d="M730.6 311.6L740.0 316.4" stroke="rgba(30,30,30,0.11)" stroke-width="1.2"/><path d="M703.5 311.7L709.8 314.9" stroke="rgba(30,30,30,0.13)" stroke-width="0.9"/><path d="M716.1 311.4L724.2 315.4" stroke="rgba(30,30,30,0.16)" stroke-width="0.9"/></g>
<g filter="url(#bl)" stroke-linecap="butt"><path d="M717.7 372.8L724.5 376.3" stroke="rgba(30,30,30,0.08)" stroke-width="1.4"/><path d="M703.2 374.9L709.1 377.9" stroke="rgba(30,30,30,0.14)" stroke-width="1.2"/><path d="M696.2 373.0L704.6 377.3" stroke="rgba(30,30,30,0.13)" stroke-width="0.8"/><path d="M728.2 367.5L736.4 371.6" stroke="rgba(30,30,30,0.14)" stroke-width="1.3"/><path d="M734.2 372.4L743.1 377.0" stroke="rgba(30,30,30,0.14)" stroke-width="1.4"/><path d="M736.1 368.7L741.2 371.2" stroke="rgba(30,30,30,0.16)" stroke-width="1.2"/><path d="M704.5 371.2L712.1 375.0" stroke="rgba(30,30,30,0.11)" stroke-width="1.4"/><path d="M723.2 374.3L733.4 379.5" stroke="rgba(30,30,30,0.12)" stroke-width="1.4"/><path d="M738.1 372.6L745.0 376.1" stroke="rgba(30,30,30,0.06)" stroke-width="1.2"/><path d="M705.0 377.0L709.9 379.5" stroke="rgba(30,30,30,0.05)" stroke-width="1.0"/><path d="M697.3 374.8L703.6 378.0" stroke="rgba(30,30,30,0.04)" stroke-width="0.7"/><path d="M727.0 376.2L733.5 379.5" stroke="rgba(30,30,30,0.10)" stroke-width="0.9"/><path d="M692.5 367.5L700.6 371.7" stroke="rgba(30,30,30,0.09)" stroke-width="0.8"/><path d="M692.5 372.6L699.7 376.3" stroke="rgba(30,30,30,0.15)" stroke-width="1.1"/><path d="M715.6 371.8L724.0 376.2" stroke="rgba(30,30,30,0.11)" stroke-width="1.1"/><path d="M710.7 368.0L719.6 372.5" stroke="rgba(30,30,30,0.16)" stroke-width="1.1"/><path d="M692.5 369.9L696.6 372.0" stroke="rgba(30,30,30,0.11)" stroke-width="0.7"/><path d="M721.8 372.3L729.1 376.1" stroke="rgba(30,30,30,0.12)" stroke-width="0.7"/><path d="M692.5 372.0L700.0 375.8" stroke="rgba(30,30,30,0.09)" stroke-width="1.0"/><path d="M708.4 373.1L714.8 376.3" stroke="rgba(30,30,30,0.07)" stroke-width="1.3"/><path d="M692.5 371.8L697.9 374.5" stroke="rgba(30,30,30,0.07)" stroke-width="0.9"/><path d="M698.8 370.7L705.9 374.4" stroke="rgba(30,30,30,0.08)" stroke-width="1.4"/><path d="M710.6 367.7L720.4 372.7" stroke="rgba(30,30,30,0.12)" stroke-width="1.1"/><path d="M701.7 371.1L706.9 373.8" stroke="rgba(30,30,30,0.14)" stroke-width="0.8"/><path d="M702.4 374.0L711.9 378.9" stroke="rgba(30,30,30,0.08)" stroke-width="0.9"/><path d="M731.1 369.8L737.3 372.9" stroke="rgba(30,30,30,0.09)" stroke-width="1.4"/><path d="M698.4 376.2L702.9 378.5" stroke="rgba(30,30,30,0.16)" stroke-width="1.5"/><path d="M738.3 374.9L744.1 377.9" stroke="rgba(30,30,30,0.12)" stroke-width="0.9"/><path d="M707.5 371.5L713.3 374.5" stroke="rgba(30,30,30,0.07)" stroke-width="0.7"/><path d="M735.5 375.0L744.3 379.5" stroke="rgba(30,30,30,0.15)" stroke-width="0.7"/><path d="M728.9 370.5L734.4 373.3" stroke="rgba(30,30,30,0.10)" stroke-width="1.5"/><path d="M721.3 372.8L727.9 376.2" stroke="rgba(30,30,30,0.10)" stroke-width="1.0"/><path d="M699.0 371.6L706.8 375.5" stroke="rgba(30,30,30,0.13)" stroke-width="1.3"/><path d="M733.5 374.0L738.0 376.3" stroke="rgba(30,30,30,0.04)" stroke-width="0.9"/><path d="M716.6 372.7L723.7 376.3" stroke="rgba(30,30,30,0.07)" stroke-width="0.8"/><path d="M696.6 375.9L701.5 378.4" stroke="rgba(30,30,30,0.05)" stroke-width="1.0"/><path d="M705.7 374.0L712.3 377.3" stroke="rgba(30,30,30,0.08)" stroke-width="1.0"/><path d="M695.0 371.5L703.0 375.5" stroke="rgba(30,30,30,0.05)" stroke-width="1.0"/><path d="M719.6 372.4L728.9 377.2" stroke="rgba(30,30,30,0.11)" stroke-width="1.0"/><path d="M714.1 371.4L723.0 375.9" stroke="rgba(30,30,30,0.09)" stroke-width="1.1"/><path d="M726.5 372.6L731.4 375.1" stroke="rgba(30,30,30,0.14)" stroke-width="1.0"/><path d="M734.9 369.5L744.3 374.3" stroke="rgba(30,30,30,0.05)" stroke-width="1.2"/><path d="M734.4 372.8L743.8 377.6" stroke="rgba(30,30,30,0.19)" stroke-width="1.2"/><path d="M692.5 371.1L695.4 372.6" stroke="rgba(30,30,30,0.09)" stroke-width="1.4"/><path d="M699.6 372.1L704.2 374.4" stroke="rgba(30,30,30,0.14)" stroke-width="1.4"/><path d="M738.5 370.8L745.0 374.2" stroke="rgba(30,30,30,0.13)" stroke-width="1.3"/><path d="M693.5 370.5L702.7 375.2" stroke="rgba(30,30,30,0.08)" stroke-width="1.4"/><path d="M702.4 371.9L708.0 374.7" stroke="rgba(30,30,30,0.13)" stroke-width="1.0"/><path d="M710.0 368.1L716.6 371.5" stroke="rgba(30,30,30,0.10)" stroke-width="1.0"/><path d="M729.0 372.9L734.5 375.7" stroke="rgba(30,30,30,0.12)" stroke-width="1.1"/><path d="M721.2 367.9L731.3 373.0" stroke="rgba(30,30,30,0.13)" stroke-width="1.1"/><path d="M711.3 367.7L720.2 372.2" stroke="rgba(30,30,30,0.06)" stroke-width="1.0"/><path d="M700.3 372.9L709.1 377.3" stroke="rgba(30,30,30,0.12)" stroke-width="1.4"/><path d="M720.1 368.4L726.3 371.5" stroke="rgba(30,30,30,0.10)" stroke-width="0.8"/><path d="M708.2 372.8L714.7 376.1" stroke="rgba(30,30,30,0.16)" stroke-width="1.2"/><path d="M712.2 372.2L721.9 377.2" stroke="rgba(30,30,30,0.10)" stroke-width="1.4"/><path d="M709.0 372.1L718.0 376.7" stroke="rgba(30,30,30,0.07)" stroke-width="1.3"/><path d="M722.7 372.2L733.2 377.6" stroke="rgba(30,30,30,0.06)" stroke-width="0.8"/><path d="M724.6 372.9L734.4 377.9" stroke="rgba(30,30,30,0.14)" stroke-width="1.0"/><path d="M728.3 373.2L733.3 375.8" stroke="rgba(30,30,30,0.07)" stroke-width="1.2"/><path d="M725.7 372.2L730.2 374.4" stroke="rgba(30,30,30,0.10)" stroke-width="1.2"/><path d="M739.2 370.3L745.0 373.3" stroke="rgba(30,30,30,0.07)" stroke-width="0.8"/><path d="M734.0 370.8L744.1 376.0" stroke="rgba(30,30,30,0.08)" stroke-width="1.3"/><path d="M703.7 374.4L712.4 378.8" stroke="rgba(30,30,30,0.07)" stroke-width="1.5"/><path d="M723.9 370.5L731.7 374.5" stroke="rgba(30,30,30,0.08)" stroke-width="1.2"/><path d="M719.4 373.5L725.0 376.4" stroke="rgba(30,30,30,0.06)" stroke-width="1.2"/><path d="M693.8 367.8L704.1 373.0" stroke="rgba(30,30,30,0.13)" stroke-width="1.1"/><path d="M722.8 369.8L730.1 373.6" stroke="rgba(30,30,30,0.05)" stroke-width="1.3"/><path d="M716.5 369.2L725.5 373.9" stroke="rgba(30,30,30,0.08)" stroke-width="0.7"/><path d="M716.0 372.2L722.0 375.2" stroke="rgba(30,30,30,0.08)" stroke-width="1.1"/><path d="M729.7 370.4L736.3 373.8" stroke="rgba(30,30,30,0.13)" stroke-width="0.8"/><path d="M728.9 367.5L737.9 372.1" stroke="rgba(30,30,30,0.09)" stroke-width="1.4"/><path d="M727.7 367.8L735.9 372.0" stroke="rgba(30,30,30,0.06)" stroke-width="1.2"/><path d="M700.1 371.2L706.1 374.2" stroke="rgba(30,30,30,0.14)" stroke-width="1.5"/><path d="M708.7 371.2L716.6 375.3" stroke="rgba(30,30,30,0.16)" stroke-width="0.9"/><path d="M733.9 372.7L741.4 376.5" stroke="rgba(30,30,30,0.04)" stroke-width="1.2"/><path d="M714.5 369.3L722.2 373.3" stroke="rgba(30,30,30,0.18)" stroke-width="1.1"/><path d="M722.8 375.0L730.0 378.6" stroke="rgba(30,30,30,0.15)" stroke-width="1.3"/><path d="M722.8 370.8L727.6 373.2" stroke="rgba(30,30,30,0.05)" stroke-width="1.4"/><path d="M704.5 371.2L714.4 376.2" stroke="rgba(30,30,30,0.14)" stroke-width="1.4"/><path d="M725.6 373.2L734.6 377.8" stroke="rgba(30,30,30,0.15)" stroke-width="1.0"/><path d="M728.5 367.5L736.0 371.3" stroke="rgba(30,30,30,0.05)" stroke-width="0.8"/><path d="M714.2 370.6L723.0 375.1" stroke="rgba(30,30,30,0.12)" stroke-width="1.1"/><path d="M728.8 370.8L735.7 374.4" stroke="rgba(30,30,30,0.13)" stroke-width="1.0"/><path d="M716.2 367.5L724.4 371.7" stroke="rgba(30,30,30,0.06)" stroke-width="0.8"/><path d="M713.8 368.3L719.5 371.1" stroke="rgba(30,30,30,0.09)" stroke-width="0.7"/><path d="M695.5 369.3L701.0 372.1" stroke="rgba(30,30,30,0.04)" stroke-width="1.0"/><path d="M727.0 372.4L731.8 374.9" stroke="rgba(30,30,30,0.04)" stroke-width="0.9"/><path d="M693.7 369.9L701.2 373.6" stroke="rgba(30,30,30,0.08)" stroke-width="0.7"/><path d="M727.6 374.5L733.8 377.7" stroke="rgba(30,30,30,0.15)" stroke-width="0.9"/><path d="M701.7 371.6L711.2 376.4" stroke="rgba(30,30,30,0.05)" stroke-width="1.5"/><path d="M721.4 368.3L725.8 370.6" stroke="rgba(30,30,30,0.11)" stroke-width="0.7"/><path d="M721.8 372.6L731.9 377.7" stroke="rgba(30,30,30,0.10)" stroke-width="1.4"/><path d="M739.5 372.0L744.2 374.4" stroke="rgba(30,30,30,0.28)" stroke-width="0.9"/><path d="M734.5 370.2L739.7 372.9" stroke="rgba(30,30,30,0.12)" stroke-width="0.8"/><path d="M726.8 374.5L735.9 379.2" stroke="rgba(30,30,30,0.15)" stroke-width="1.0"/><path d="M699.9 370.2L709.2 375.0" stroke="rgba(30,30,30,0.06)" stroke-width="1.2"/><path d="M726.4 371.2L733.2 374.7" stroke="rgba(30,30,30,0.22)" stroke-width="1.1"/><path d="M728.0 367.5L736.7 371.9" stroke="rgba(30,30,30,0.14)" stroke-width="1.4"/><path d="M734.7 374.4L741.9 378.1" stroke="rgba(30,30,30,0.08)" stroke-width="0.8"/><path d="M708.3 368.0L718.7 373.3" stroke="rgba(30,30,30,0.09)" stroke-width="1.2"/><path d="M702.8 371.7L707.5 374.1" stroke="rgba(30,30,30,0.20)" stroke-width="0.9"/><path d="M740.4 372.3L745.0 374.6" stroke="rgba(30,30,30,0.13)" stroke-width="1.3"/><path d="M717.8 368.2L723.4 371.1" stroke="rgba(30,30,30,0.25)" stroke-width="0.7"/><path d="M740.4 372.3L745.0 374.6" stroke="rgba(30,30,30,0.09)" stroke-width="1.4"/><path d="M720.6 374.9L729.0 379.2" stroke="rgba(30,30,30,0.08)" stroke-width="1.1"/><path d="M693.5 372.5L703.2 377.4" stroke="rgba(30,30,30,0.06)" stroke-width="1.1"/><path d="M728.3 372.7L733.2 375.3" stroke="rgba(30,30,30,0.05)" stroke-width="1.3"/><path d="M710.5 369.4L718.9 373.8" stroke="rgba(30,30,30,0.08)" stroke-width="1.0"/><path d="M712.6 368.2L717.6 370.8" stroke="rgba(30,30,30,0.15)" stroke-width="1.4"/><path d="M740.2 374.2L745.0 376.6" stroke="rgba(30,30,30,0.09)" stroke-width="1.4"/><path d="M738.6 372.7L745.0 375.9" stroke="rgba(30,30,30,0.16)" stroke-width="0.9"/><path d="M738.7 371.2L744.3 374.1" stroke="rgba(30,30,30,0.07)" stroke-width="1.2"/><path d="M692.5 369.9L699.2 373.3" stroke="rgba(30,30,30,0.08)" stroke-width="1.3"/><path d="M705.0 371.6L710.1 374.2" stroke="rgba(30,30,30,0.05)" stroke-width="1.3"/><path d="M724.0 374.1L734.5 379.5" stroke="rgba(30,30,30,0.08)" stroke-width="0.9"/><path d="M712.9 370.3L720.7 374.3" stroke="rgba(30,30,30,0.14)" stroke-width="1.1"/><path d="M734.3 368.5L743.8 373.3" stroke="rgba(30,30,30,0.24)" stroke-width="0.8"/><path d="M716.5 367.5L724.3 371.5" stroke="rgba(30,30,30,0.06)" stroke-width="1.1"/><path d="M739.2 371.6L745.0 374.5" stroke="rgba(30,30,30,0.11)" stroke-width="1.0"/><path d="M707.9 371.7L712.6 374.1" stroke="rgba(30,30,30,0.08)" stroke-width="1.3"/><path d="M711.4 368.3L717.5 371.4" stroke="rgba(30,30,30,0.11)" stroke-width="1.4"/><path d="M732.0 370.5L737.9 373.6" stroke="rgba(30,30,30,0.13)" stroke-width="1.4"/><path d="M718.4 367.9L724.6 371.0" stroke="rgba(30,30,30,0.12)" stroke-width="1.4"/><path d="M712.7 374.3L721.3 378.7" stroke="rgba(30,30,30,0.11)" stroke-width="1.1"/><path d="M698.7 375.3L704.3 378.2" stroke="rgba(30,30,30,0.10)" stroke-width="1.0"/><path d="M711.7 372.3L721.1 377.2" stroke="rgba(30,30,30,0.06)" stroke-width="1.1"/><path d="M709.2 373.7L719.0 378.6" stroke="rgba(30,30,30,0.20)" stroke-width="1.2"/><path d="M717.6 371.5L725.1 375.3" stroke="rgba(30,30,30,0.27)" stroke-width="1.2"/><path d="M708.2 374.4L715.8 378.3" stroke="rgba(30,30,30,0.12)" stroke-width="1.4"/><path d="M698.6 372.4L705.4 375.9" stroke="rgba(30,30,30,0.07)" stroke-width="1.5"/><path d="M705.7 369.9L712.6 373.4" stroke="rgba(30,30,30,0.07)" stroke-width="0.8"/><path d="M701.7 370.4L707.4 373.4" stroke="rgba(30,30,30,0.13)" stroke-width="1.2"/><path d="M733.2 372.7L737.7 375.0" stroke="rgba(30,30,30,0.05)" stroke-width="1.1"/><path d="M702.6 368.6L710.5 372.6" stroke="rgba(30,30,30,0.15)" stroke-width="1.4"/><path d="M696.5 372.3L707.2 377.7" stroke="rgba(30,30,30,0.10)" stroke-width="1.3"/><path d="M698.9 375.4L704.6 378.3" stroke="rgba(30,30,30,0.04)" stroke-width="1.1"/><path d="M710.0 372.7L715.1 375.3" stroke="rgba(30,30,30,0.07)" stroke-width="0.8"/><path d="M695.8 371.3L702.5 374.7" stroke="rgba(30,30,30,0.06)" stroke-width="1.5"/><path d="M741.0 373.9L745.0 376.0" stroke="rgba(30,30,30,0.10)" stroke-width="1.0"/><path d="M692.5 374.3L696.9 376.5" stroke="rgba(30,30,30,0.11)" stroke-width="1.1"/><path d="M711.8 370.8L719.6 374.8" stroke="rgba(30,30,30,0.11)" stroke-width="1.4"/><path d="M696.7 370.8L707.2 376.2" stroke="rgba(30,30,30,0.07)" stroke-width="0.7"/><path d="M740.4 372.1L745.0 374.4" stroke="rgba(30,30,30,0.04)" stroke-width="1.3"/><path d="M740.2 373.2L745.0 375.7" stroke="rgba(30,30,30,0.05)" stroke-width="1.1"/><path d="M696.1 370.3L704.3 374.4" stroke="rgba(30,30,30,0.08)" stroke-width="1.0"/><path d="M718.8 374.1L729.3 379.5" stroke="rgba(30,30,30,0.14)" stroke-width="1.5"/><path d="M704.1 374.0L709.3 376.6" stroke="rgba(30,30,30,0.08)" stroke-width="0.9"/><path d="M739.6 372.0L745.0 374.8" stroke="rgba(30,30,30,0.14)" stroke-width="1.1"/><path d="M711.5 368.0L719.8 372.2" stroke="rgba(30,30,30,0.14)" stroke-width="0.7"/><path d="M733.9 372.9L740.8 376.4" stroke="rgba(30,30,30,0.06)" stroke-width="1.4"/><path d="M710.2 370.4L720.1 375.4" stroke="rgba(30,30,30,0.07)" stroke-width="1.0"/><path d="M707.8 372.2L716.3 376.5" stroke="rgba(30,30,30,0.06)" stroke-width="1.0"/><path d="M722.1 369.7L727.4 372.4" stroke="rgba(30,30,30,0.13)" stroke-width="1.1"/><path d="M737.0 374.3L744.8 378.2" stroke="rgba(30,30,30,0.14)" stroke-width="1.1"/><path d="M725.7 374.4L730.9 377.1" stroke="rgba(30,30,30,0.10)" stroke-width="0.9"/><path d="M697.7 369.5L707.3 374.4" stroke="rgba(30,30,30,0.04)" stroke-width="0.7"/><path d="M733.4 369.7L739.0 372.5" stroke="rgba(30,30,30,0.10)" stroke-width="1.2"/><path d="M723.6 372.9L730.7 376.5" stroke="rgba(30,30,30,0.22)" stroke-width="1.1"/><path d="M726.7 367.5L737.4 372.9" stroke="rgba(30,30,30,0.10)" stroke-width="1.4"/><path d="M732.6 371.1L739.2 374.4" stroke="rgba(30,30,30,0.15)" stroke-width="1.0"/><path d="M692.9 370.4L701.4 374.7" stroke="rgba(30,30,30,0.10)" stroke-width="0.8"/><path d="M701.0 373.9L708.4 377.7" stroke="rgba(30,30,30,0.07)" stroke-width="1.2"/><path d="M717.4 372.8L723.1 375.7" stroke="rgba(30,30,30,0.05)" stroke-width="1.2"/><path d="M706.5 374.8L715.8 379.5" stroke="rgba(30,30,30,0.13)" stroke-width="0.7"/><path d="M712.0 371.2L718.4 374.5" stroke="rgba(30,30,30,0.06)" stroke-width="1.5"/><path d="M693.7 368.5L703.9 373.7" stroke="rgba(30,30,30,0.11)" stroke-width="1.1"/><path d="M707.8 369.1L717.6 374.1" stroke="rgba(30,30,30,0.09)" stroke-width="0.8"/><path d="M702.6 372.6L708.7 375.7" stroke="rgba(30,30,30,0.05)" stroke-width="1.1"/><path d="M719.2 371.6L725.1 374.7" stroke="rgba(30,30,30,0.12)" stroke-width="0.8"/><path d="M728.5 371.1L735.4 374.6" stroke="rgba(30,30,30,0.11)" stroke-width="0.7"/><path d="M728.9 370.3L738.7 375.3" stroke="rgba(30,30,30,0.07)" stroke-width="1.2"/><path d="M699.4 373.0L708.9 377.9" stroke="rgba(30,30,30,0.16)" stroke-width="0.8"/></g>
<g filter="url(#bl)" stroke-linecap="butt"><path d="M694.3 427.5L701.2 431.0" stroke="rgba(30,30,30,0.09)" stroke-width="1.3"/><path d="M728.6 429.7L734.4 432.7" stroke="rgba(30,30,30,0.11)" stroke-width="0.9"/><path d="M735.0 433.9L743.5 438.2" stroke="rgba(30,30,30,0.06)" stroke-width="1.2"/><path d="M724.9 432.1L734.7 437.0" stroke="rgba(30,30,30,0.11)" stroke-width="1.1"/><path d="M697.9 431.6L705.3 435.4" stroke="rgba(30,30,30,0.14)" stroke-width="0.9"/><path d="M734.8 434.7L742.9 438.8" stroke="rgba(30,30,30,0.10)" stroke-width="1.2"/><path d="M711.8 431.6L717.2 434.4" stroke="rgba(30,30,30,0.08)" stroke-width="1.2"/><path d="M702.9 431.3L710.7 435.2" stroke="rgba(30,30,30,0.16)" stroke-width="1.0"/><path d="M698.6 429.6L707.0 433.9" stroke="rgba(30,30,30,0.13)" stroke-width="1.1"/><path d="M736.1 428.3L741.2 430.9" stroke="rgba(30,30,30,0.13)" stroke-width="0.9"/><path d="M706.6 430.7L712.2 433.5" stroke="rgba(30,30,30,0.12)" stroke-width="1.5"/><path d="M724.8 428.6L735.2 434.0" stroke="rgba(30,30,30,0.16)" stroke-width="1.0"/><path d="M736.4 431.9L743.5 435.5" stroke="rgba(30,30,30,0.06)" stroke-width="0.8"/><path d="M706.7 427.5L717.2 432.8" stroke="rgba(30,30,30,0.04)" stroke-width="1.3"/><path d="M707.9 433.6L714.1 436.8" stroke="rgba(30,30,30,0.09)" stroke-width="0.7"/><path d="M692.6 430.2L698.1 433.0" stroke="rgba(30,30,30,0.04)" stroke-width="0.9"/><path d="M740.8 434.0L743.5 435.4" stroke="rgba(30,30,30,0.09)" stroke-width="1.1"/><path d="M701.3 429.4L708.3 433.0" stroke="rgba(30,30,30,0.07)" stroke-width="1.4"/><path d="M715.6 429.3L720.3 431.7" stroke="rgba(30,30,30,0.06)" stroke-width="1.4"/><path d="M697.3 434.4L702.1 436.8" stroke="rgba(30,30,30,0.16)" stroke-width="1.4"/><path d="M721.2 432.9L730.5 437.7" stroke="rgba(30,30,30,0.05)" stroke-width="1.4"/><path d="M733.3 430.5L743.5 435.7" stroke="rgba(30,30,30,0.14)" stroke-width="1.4"/><path d="M715.2 430.8L723.7 435.1" stroke="rgba(30,30,30,0.15)" stroke-width="0.8"/><path d="M736.8 429.6L743.5 433.0" stroke="rgba(30,30,30,0.15)" stroke-width="1.5"/><path d="M724.1 432.0L728.9 434.5" stroke="rgba(30,30,30,0.11)" stroke-width="1.4"/><path d="M701.4 432.3L705.9 434.5" stroke="rgba(30,30,30,0.26)" stroke-width="1.3"/><path d="M727.5 431.8L737.4 436.9" stroke="rgba(30,30,30,0.06)" stroke-width="1.0"/><path d="M733.3 430.7L742.6 435.4" stroke="rgba(30,30,30,0.08)" stroke-width="1.2"/><path d="M712.5 429.1L722.4 434.1" stroke="rgba(30,30,30,0.08)" stroke-width="1.1"/><path d="M692.5 431.4L697.9 434.2" stroke="rgba(30,30,30,0.10)" stroke-width="1.3"/><path d="M705.4 435.1L711.3 438.2" stroke="rgba(30,30,30,0.09)" stroke-width="1.2"/><path d="M733.8 432.5L741.5 436.4" stroke="rgba(30,30,30,0.24)" stroke-width="1.4"/><path d="M699.3 433.2L705.7 436.4" stroke="rgba(30,30,30,0.14)" stroke-width="1.4"/><path d="M698.8 431.2L704.2 433.9" stroke="rgba(30,30,30,0.10)" stroke-width="1.3"/><path d="M692.5 432.1L696.0 433.9" stroke="rgba(30,30,30,0.13)" stroke-width="0.8"/><path d="M700.1 432.0L709.9 437.0" stroke="rgba(30,30,30,0.16)" stroke-width="1.2"/><path d="M720.4 434.0L726.8 437.3" stroke="rgba(30,30,30,0.15)" stroke-width="1.4"/><path d="M728.5 428.1L736.8 432.3" stroke="rgba(30,30,30,0.13)" stroke-width="1.2"/><path d="M696.8 431.6L701.8 434.1" stroke="rgba(30,30,30,0.06)" stroke-width="1.0"/><path d="M718.6 430.4L725.2 433.8" stroke="rgba(30,30,30,0.09)" stroke-width="0.8"/><path d="M722.6 429.1L729.1 432.4" stroke="rgba(30,30,30,0.04)" stroke-width="1.4"/><path d="M728.6 430.5L738.1 435.3" stroke="rgba(30,30,30,0.11)" stroke-width="1.2"/><path d="M735.7 431.5L743.5 435.4" stroke="rgba(30,30,30,0.12)" stroke-width="1.3"/><path d="M719.2 432.5L728.8 437.4" stroke="rgba(30,30,30,0.09)" stroke-width="1.4"/><path d="M725.2 430.7L731.6 433.9" stroke="rgba(30,30,30,0.11)" stroke-width="1.4"/><path d="M709.4 430.9L716.4 434.5" stroke="rgba(30,30,30,0.16)" stroke-width="0.8"/><path d="M715.7 430.9L724.4 435.4" stroke="rgba(30,30,30,0.15)" stroke-width="0.8"/><path d="M692.5 435.1L701.2 439.5" stroke="rgba(30,30,30,0.11)" stroke-width="0.8"/><path d="M702.7 436.5L708.6 439.5" stroke="rgba(30,30,30,0.13)" stroke-width="0.9"/><path d="M702.6 431.4L712.9 436.7" stroke="rgba(30,30,30,0.12)" stroke-width="1.5"/><path d="M702.0 428.4L709.7 432.3" stroke="rgba(30,30,30,0.04)" stroke-width="0.8"/><path d="M692.5 431.8L700.9 436.1" stroke="rgba(30,30,30,0.12)" stroke-width="1.2"/><path d="M736.1 432.4L743.5 436.1" stroke="rgba(30,30,30,0.12)" stroke-width="1.1"/><path d="M715.4 433.2L720.8 436.0" stroke="rgba(30,30,30,0.05)" stroke-width="1.4"/><path d="M702.1 434.9L709.0 438.4" stroke="rgba(30,30,30,0.08)" stroke-width="1.0"/><path d="M692.5 431.4L698.9 434.7" stroke="rgba(30,30,30,0.06)" stroke-width="1.4"/><path d="M731.5 431.2L737.4 434.2" stroke="rgba(30,30,30,0.13)" stroke-width="1.4"/><path d="M738.9 435.0L743.5 437.3" stroke="rgba(30,30,30,0.08)" stroke-width="1.4"/><path d="M719.9 434.9L725.0 437.5" stroke="rgba(30,30,30,0.08)" stroke-width="1.4"/><path d="M720.8 432.0L725.4 434.4" stroke="rgba(30,30,30,0.14)" stroke-width="0.9"/><path d="M734.0 431.8L742.4 436.1" stroke="rgba(30,30,30,0.15)" stroke-width="1.4"/><path d="M721.7 432.6L730.5 437.1" stroke="rgba(30,30,30,0.16)" stroke-width="0.8"/><path d="M725.1 433.4L732.7 437.2" stroke="rgba(30,30,30,0.07)" stroke-width="0.8"/><path d="M727.3 428.7L737.4 433.9" stroke="rgba(30,30,30,0.16)" stroke-width="1.1"/><path d="M692.5 433.3L697.4 435.8" stroke="rgba(30,30,30,0.04)" stroke-width="0.7"/><path d="M714.2 432.7L719.6 435.4" stroke="rgba(30,30,30,0.13)" stroke-width="0.9"/><path d="M708.2 427.5L716.4 431.7" stroke="rgba(30,30,30,0.16)" stroke-width="1.4"/><path d="M703.4 434.5L712.1 439.0" stroke="rgba(30,30,30,0.09)" stroke-width="0.7"/><path d="M732.6 430.6L742.9 435.8" stroke="rgba(30,30,30,0.09)" stroke-width="1.4"/><path d="M704.7 431.2L713.0 435.5" stroke="rgba(30,30,30,0.04)" stroke-width="0.9"/><path d="M736.5 431.1L741.8 433.8" stroke="rgba(30,30,30,0.16)" stroke-width="0.8"/><path d="M698.2 433.8L708.4 439.0" stroke="rgba(30,30,30,0.18)" stroke-width="1.0"/><path d="M710.4 427.5L721.1 432.9" stroke="rgba(30,30,30,0.25)" stroke-width="1.5"/><path d="M703.6 435.1L711.6 439.1" stroke="rgba(30,30,30,0.05)" stroke-width="0.8"/><path d="M726.8 433.2L731.4 435.5" stroke="rgba(30,30,30,0.11)" stroke-width="1.0"/><path d="M703.9 431.7L714.5 437.1" stroke="rgba(30,30,30,0.16)" stroke-width="0.9"/><path d="M736.1 434.2L743.5 437.9" stroke="rgba(30,30,30,0.05)" stroke-width="1.3"/><path d="M721.7 428.3L731.4 433.3" stroke="rgba(30,30,30,0.06)" stroke-width="1.1"/><path d="M716.7 434.4L723.4 437.9" stroke="rgba(30,30,30,0.23)" stroke-width="0.8"/><path d="M700.7 431.1L706.7 434.1" stroke="rgba(30,30,30,0.11)" stroke-width="1.0"/><path d="M723.4 429.6L733.8 434.9" stroke="rgba(30,30,30,0.16)" stroke-width="0.7"/><path d="M697.4 434.4L707.0 439.3" stroke="rgba(30,30,30,0.18)" stroke-width="0.9"/><path d="M725.7 430.5L732.6 434.0" stroke="rgba(30,30,30,0.09)" stroke-width="1.1"/><path d="M697.1 434.5L701.8 436.8" stroke="rgba(30,30,30,0.16)" stroke-width="0.9"/><path d="M716.0 433.1L726.0 438.2" stroke="rgba(30,30,30,0.10)" stroke-width="1.2"/><path d="M719.0 430.4L727.2 434.6" stroke="rgba(30,30,30,0.09)" stroke-width="0.8"/><path d="M692.5 429.9L697.5 432.4" stroke="rgba(30,30,30,0.08)" stroke-width="0.8"/><path d="M705.8 434.9L714.5 439.4" stroke="rgba(30,30,30,0.15)" stroke-width="1.0"/><path d="M716.0 432.4L723.8 436.4" stroke="rgba(30,30,30,0.06)" stroke-width="0.8"/><path d="M733.5 431.5L741.6 435.7" stroke="rgba(30,30,30,0.12)" stroke-width="0.7"/><path d="M729.4 430.1L739.3 435.1" stroke="rgba(30,30,30,0.13)" stroke-width="1.1"/><path d="M703.5 434.5L708.3 437.0" stroke="rgba(30,30,30,0.06)" stroke-width="0.9"/><path d="M722.5 432.6L733.0 437.9" stroke="rgba(30,30,30,0.16)" stroke-width="1.1"/><path d="M731.2 427.8L740.9 432.8" stroke="rgba(30,30,30,0.05)" stroke-width="1.4"/><path d="M702.1 434.5L711.8 439.5" stroke="rgba(30,30,30,0.06)" stroke-width="1.4"/><path d="M741.2 429.2L743.5 430.4" stroke="rgba(30,30,30,0.10)" stroke-width="0.8"/><path d="M720.9 432.5L729.5 436.9" stroke="rgba(30,30,30,0.10)" stroke-width="0.8"/><path d="M712.1 430.5L717.4 433.2" stroke="rgba(30,30,30,0.08)" stroke-width="0.9"/><path d="M719.9 430.9L725.0 433.5" stroke="rgba(30,30,30,0.15)" stroke-width="1.3"/><path d="M716.8 429.8L723.9 433.5" stroke="rgba(30,30,30,0.13)" stroke-width="1.1"/><path d="M701.0 430.1L709.3 434.3" stroke="rgba(30,30,30,0.12)" stroke-width="1.2"/><path d="M718.7 435.2L724.4 438.1" stroke="rgba(30,30,30,0.13)" stroke-width="1.1"/><path d="M706.3 431.1L712.6 434.3" stroke="rgba(30,30,30,0.08)" stroke-width="1.1"/><path d="M704.0 432.4L710.8 435.9" stroke="rgba(30,30,30,0.14)" stroke-width="1.0"/><path d="M732.3 431.7L737.8 434.5" stroke="rgba(30,30,30,0.08)" stroke-width="1.4"/><path d="M692.5 430.9L696.9 433.2" stroke="rgba(30,30,30,0.07)" stroke-width="1.0"/><path d="M701.2 432.2L708.4 435.8" stroke="rgba(30,30,30,0.05)" stroke-width="0.8"/><path d="M693.1 433.5L697.6 435.7" stroke="rgba(30,30,30,0.13)" stroke-width="1.5"/><path d="M706.7 431.4L713.3 434.8" stroke="rgba(30,30,30,0.08)" stroke-width="1.2"/><path d="M712.3 431.1L722.6 436.3" stroke="rgba(30,30,30,0.15)" stroke-width="1.0"/><path d="M700.9 429.6L705.6 431.9" stroke="rgba(30,30,30,0.09)" stroke-width="1.3"/><path d="M734.3 434.1L740.8 437.4" stroke="rgba(30,30,30,0.09)" stroke-width="0.8"/><path d="M734.5 434.4L743.5 439.0" stroke="rgba(30,30,30,0.12)" stroke-width="1.3"/><path d="M733.3 433.6L741.3 437.7" stroke="rgba(30,30,30,0.07)" stroke-width="0.7"/><path d="M733.1 430.4L741.5 434.6" stroke="rgba(30,30,30,0.06)" stroke-width="1.4"/><path d="M707.0 434.2L714.1 437.8" stroke="rgba(30,30,30,0.05)" stroke-width="0.7"/><path d="M723.5 433.2L732.8 437.9" stroke="rgba(30,30,30,0.07)" stroke-width="1.0"/><path d="M701.6 432.9L710.5 437.4" stroke="rgba(30,30,30,0.16)" stroke-width="1.3"/><path d="M736.8 431.5L743.5 434.9" stroke="rgba(30,30,30,0.10)" stroke-width="1.3"/><path d="M733.9 430.4L742.9 435.0" stroke="rgba(30,30,30,0.11)" stroke-width="1.2"/><path d="M699.2 436.3L703.8 438.6" stroke="rgba(30,30,30,0.14)" stroke-width="1.4"/><path d="M729.1 434.0L734.5 436.8" stroke="rgba(30,30,30,0.11)" stroke-width="0.7"/><path d="M692.5 432.7L699.3 436.2" stroke="rgba(30,30,30,0.07)" stroke-width="0.8"/><path d="M721.0 428.5L726.6 431.3" stroke="rgba(30,30,30,0.13)" stroke-width="0.7"/><path d="M713.8 431.9L720.4 435.3" stroke="rgba(30,30,30,0.12)" stroke-width="1.0"/><path d="M722.3 429.4L727.5 432.1" stroke="rgba(30,30,30,0.14)" stroke-width="1.3"/><path d="M733.8 428.5L740.7 432.0" stroke="rgba(30,30,30,0.10)" stroke-width="0.8"/><path d="M731.7 434.1L740.1 438.4" stroke="rgba(30,30,30,0.13)" stroke-width="1.3"/><path d="M709.5 430.1L719.1 435.0" stroke="rgba(30,30,30,0.06)" stroke-width="1.1"/><path d="M732.7 432.0L740.5 435.9" stroke="rgba(30,30,30,0.11)" stroke-width="1.2"/><path d="M704.0 432.8L708.5 435.1" stroke="rgba(30,30,30,0.15)" stroke-width="1.4"/><path d="M731.2 434.6L736.6 437.4" stroke="rgba(30,30,30,0.15)" stroke-width="1.0"/><path d="M716.0 430.1L724.5 434.5" stroke="rgba(30,30,30,0.15)" stroke-width="0.8"/><path d="M705.6 430.9L710.6 433.4" stroke="rgba(30,30,30,0.10)" stroke-width="1.4"/><path d="M728.9 432.6L734.5 435.5" stroke="rgba(30,30,30,0.07)" stroke-width="0.7"/><path d="M708.8 428.4L716.9 432.6" stroke="rgba(30,30,30,0.15)" stroke-width="1.3"/><path d="M696.9 431.5L707.5 436.8" stroke="rgba(30,30,30,0.13)" stroke-width="0.7"/><path d="M698.8 431.3L707.8 435.9" stroke="rgba(30,30,30,0.05)" stroke-width="1.0"/><path d="M713.9 429.5L723.5 434.4" stroke="rgba(30,30,30,0.15)" stroke-width="1.3"/><path d="M729.8 427.5L737.3 431.3" stroke="rgba(30,30,30,0.12)" stroke-width="1.4"/><path d="M735.6 433.6L743.2 437.4" stroke="rgba(30,30,30,0.05)" stroke-width="1.1"/><path d="M719.1 430.0L727.3 434.2" stroke="rgba(30,30,30,0.06)" stroke-width="0.8"/><path d="M704.6 430.2L713.0 434.5" stroke="rgba(30,30,30,0.10)" stroke-width="0.9"/><path d="M702.8 431.0L710.0 434.6" stroke="rgba(30,30,30,0.22)" stroke-width="1.4"/><path d="M697.5 428.7L707.0 433.6" stroke="rgba(30,30,30,0.07)" stroke-width="1.3"/><path d="M696.6 432.5L701.4 435.0" stroke="rgba(30,30,30,0.08)" stroke-width="1.0"/><path d="M718.5 429.8L725.3 433.3" stroke="rgba(30,30,30,0.16)" stroke-width="1.3"/><path d="M736.2 432.2L743.4 435.9" stroke="rgba(30,30,30,0.05)" stroke-width="0.8"/><path d="M720.5 431.1L728.1 435.0" stroke="rgba(30,30,30,0.12)" stroke-width="0.7"/><path d="M724.3 436.3L730.5 439.5" stroke="rgba(30,30,30,0.04)" stroke-width="1.1"/><path d="M737.4 427.5L743.5 430.6" stroke="rgba(30,30,30,0.09)" stroke-width="1.3"/><path d="M715.7 434.2L725.9 439.4" stroke="rgba(30,30,30,0.12)" stroke-width="1.3"/><path d="M723.9 428.0L734.2 433.2" stroke="rgba(30,30,30,0.08)" stroke-width="1.0"/><path d="M692.5 429.4L699.7 433.1" stroke="rgba(30,30,30,0.05)" stroke-width="0.8"/><path d="M733.3 431.3L739.5 434.5" stroke="rgba(30,30,30,0.09)" stroke-width="1.1"/><path d="M710.4 430.1L720.3 435.2" stroke="rgba(30,30,30,0.10)" stroke-width="1.0"/><path d="M702.5 431.8L710.9 436.1" stroke="rgba(30,30,30,0.12)" stroke-width="1.3"/><path d="M703.3 435.1L711.9 439.5" stroke="rgba(30,30,30,0.09)" stroke-width="1.3"/><path d="M706.3 432.9L712.8 436.2" stroke="rgba(30,30,30,0.14)" stroke-width="0.9"/><path d="M719.5 435.3L727.7 439.5" stroke="rgba(30,30,30,0.09)" stroke-width="1.2"/><path d="M714.2 432.2L722.3 436.4" stroke="rgba(30,30,30,0.15)" stroke-width="1.3"/><path d="M734.8 432.2L740.8 435.3" stroke="rgba(30,30,30,0.05)" stroke-width="0.8"/><path d="M701.4 429.7L709.7 433.8" stroke="rgba(30,30,30,0.08)" stroke-width="0.8"/><path d="M714.8 428.7L722.2 432.5" stroke="rgba(30,30,30,0.08)" stroke-width="1.1"/><path d="M717.2 431.8L724.6 435.5" stroke="rgba(30,30,30,0.10)" stroke-width="1.2"/><path d="M708.5 428.2L718.2 433.2" stroke="rgba(30,30,30,0.07)" stroke-width="1.4"/><path d="M721.6 432.8L729.6 436.9" stroke="rgba(30,30,30,0.16)" stroke-width="1.2"/><path d="M696.8 430.4L701.4 432.8" stroke="rgba(30,30,30,0.07)" stroke-width="0.8"/></g>
<g filter="url(#bl)" stroke-linecap="butt"><path d="M720.7 455.2L730.1 460.0" stroke="rgba(30,30,30,0.27)" stroke-width="1.1"/><path d="M726.3 451.1L732.0 454.0" stroke="rgba(30,30,30,0.10)" stroke-width="1.1"/><path d="M718.9 451.2L723.4 453.5" stroke="rgba(30,30,30,0.15)" stroke-width="0.8"/><path d="M724.2 452.9L729.5 455.6" stroke="rgba(30,30,30,0.04)" stroke-width="0.9"/><path d="M706.7 451.6L717.3 457.0" stroke="rgba(30,30,30,0.15)" stroke-width="1.2"/><path d="M706.6 454.0L716.9 459.3" stroke="rgba(30,30,30,0.15)" stroke-width="1.0"/><path d="M708.0 449.0L713.4 451.8" stroke="rgba(30,30,30,0.20)" stroke-width="1.2"/><path d="M711.9 453.8L718.3 457.0" stroke="rgba(30,30,30,0.08)" stroke-width="1.3"/><path d="M706.5 451.2L713.2 454.7" stroke="rgba(30,30,30,0.25)" stroke-width="1.3"/><path d="M711.8 448.5L719.9 452.6" stroke="rgba(30,30,30,0.06)" stroke-width="0.9"/><path d="M720.6 454.1L730.9 459.3" stroke="rgba(30,30,30,0.08)" stroke-width="1.3"/><path d="M706.5 454.9L713.8 458.7" stroke="rgba(30,30,30,0.04)" stroke-width="0.8"/><path d="M711.1 453.1L719.3 457.3" stroke="rgba(30,30,30,0.15)" stroke-width="0.9"/><path d="M711.8 448.8L717.4 451.6" stroke="rgba(30,30,30,0.12)" stroke-width="0.8"/><path d="M706.5 452.1L713.0 455.4" stroke="rgba(30,30,30,0.07)" stroke-width="1.4"/><path d="M714.6 452.4L721.7 456.0" stroke="rgba(30,30,30,0.04)" stroke-width="1.4"/><path d="M706.5 454.4L714.3 458.3" stroke="rgba(30,30,30,0.24)" stroke-width="1.0"/><path d="M706.5 450.2L715.2 454.6" stroke="rgba(30,30,30,0.16)" stroke-width="1.5"/><path d="M714.3 453.4L721.8 457.2" stroke="rgba(30,30,30,0.07)" stroke-width="0.8"/><path d="M710.8 454.2L721.4 459.6" stroke="rgba(30,30,30,0.10)" stroke-width="0.8"/><path d="M708.8 452.5L718.1 457.2" stroke="rgba(30,30,30,0.13)" stroke-width="1.3"/><path d="M718.8 453.0L728.0 457.7" stroke="rgba(30,30,30,0.07)" stroke-width="1.3"/><path d="M721.0 456.3L727.3 459.5" stroke="rgba(30,30,30,0.20)" stroke-width="1.1"/><path d="M708.6 452.8L717.2 457.2" stroke="rgba(30,30,30,0.12)" stroke-width="1.0"/><path d="M718.4 453.5L727.5 458.1" stroke="rgba(30,30,30,0.14)" stroke-width="1.3"/><path d="M726.2 450.8L732.0 453.8" stroke="rgba(30,30,30,0.06)" stroke-width="1.4"/><path d="M714.3 454.3L723.1 458.8" stroke="rgba(30,30,30,0.06)" stroke-width="1.2"/><path d="M719.9 455.1L727.0 458.7" stroke="rgba(30,30,30,0.12)" stroke-width="0.7"/><path d="M707.0 450.9L714.2 454.6" stroke="rgba(30,30,30,0.12)" stroke-width="0.7"/><path d="M715.6 449.0L721.5 452.0" stroke="rgba(30,30,30,0.08)" stroke-width="0.9"/><path d="M706.5 452.5L711.1 454.8" stroke="rgba(30,30,30,0.11)" stroke-width="1.4"/><path d="M706.5 451.4L710.0 453.2" stroke="rgba(30,30,30,0.05)" stroke-width="1.0"/><path d="M706.5 450.8L711.6 453.4" stroke="rgba(30,30,30,0.08)" stroke-width="1.5"/><path d="M723.8 455.9L730.9 459.5" stroke="rgba(30,30,30,0.08)" stroke-width="1.2"/><path d="M715.7 454.7L726.1 460.0" stroke="rgba(30,30,30,0.08)" stroke-width="0.7"/><path d="M706.5 450.7L713.2 454.1" stroke="rgba(30,30,30,0.11)" stroke-width="1.0"/><path d="M714.6 454.0L720.4 457.0" stroke="rgba(30,30,30,0.08)" stroke-width="1.4"/><path d="M718.7 455.5L724.7 458.6" stroke="rgba(30,30,30,0.09)" stroke-width="1.5"/><path d="M715.9 451.0L722.2 454.1" stroke="rgba(30,30,30,0.11)" stroke-width="0.9"/><path d="M721.6 450.8L731.2 455.7" stroke="rgba(30,30,30,0.07)" stroke-width="1.3"/><path d="M709.7 452.8L715.8 455.9" stroke="rgba(30,30,30,0.07)" stroke-width="1.1"/><path d="M718.8 452.2L727.1 456.4" stroke="rgba(30,30,30,0.13)" stroke-width="1.1"/><path d="M711.9 452.3L718.2 455.5" stroke="rgba(30,30,30,0.08)" stroke-width="1.2"/><path d="M706.5 454.3L710.4 456.3" stroke="rgba(30,30,30,0.15)" stroke-width="0.7"/><path d="M722.8 454.9L729.9 458.5" stroke="rgba(30,30,30,0.12)" stroke-width="1.4"/><path d="M712.9 452.6L719.8 456.1" stroke="rgba(30,30,30,0.07)" stroke-width="0.8"/><path d="M723.4 452.0L732.0 456.4" stroke="rgba(30,30,30,0.13)" stroke-width="0.8"/><path d="M714.8 451.6L722.6 455.6" stroke="rgba(30,30,30,0.06)" stroke-width="1.3"/><path d="M706.5 455.1L711.2 457.5" stroke="rgba(30,30,30,0.21)" stroke-width="1.3"/><path d="M726.1 449.4L732.0 452.4" stroke="rgba(30,30,30,0.14)" stroke-width="1.2"/><path d="M726.3 448.5L732.0 451.4" stroke="rgba(30,30,30,0.15)" stroke-width="1.2"/><path d="M714.3 451.2L719.8 454.0" stroke="rgba(30,30,30,0.05)" stroke-width="0.8"/><path d="M706.5 455.3L712.0 458.1" stroke="rgba(30,30,30,0.05)" stroke-width="1.0"/><path d="M718.1 454.4L725.6 458.2" stroke="rgba(30,30,30,0.05)" stroke-width="0.8"/><path d="M718.8 455.2L726.4 459.1" stroke="rgba(30,30,30,0.11)" stroke-width="1.1"/><path d="M708.4 449.7L717.6 454.4" stroke="rgba(30,30,30,0.07)" stroke-width="1.3"/><path d="M706.6 450.0L715.5 454.5" stroke="rgba(30,30,30,0.21)" stroke-width="0.8"/><path d="M718.7 455.0L724.6 458.0" stroke="rgba(30,30,30,0.08)" stroke-width="0.7"/><path d="M722.6 454.5L727.4 456.9" stroke="rgba(30,30,30,0.12)" stroke-width="0.8"/><path d="M727.0 450.9L732.0 453.4" stroke="rgba(30,30,30,0.11)" stroke-width="0.9"/><path d="M710.9 450.6L719.1 454.8" stroke="rgba(30,30,30,0.06)" stroke-width="1.2"/><path d="M723.4 455.4L730.6 459.0" stroke="rgba(30,30,30,0.11)" stroke-width="1.3"/><path d="M714.1 449.2L719.1 451.8" stroke="rgba(30,30,30,0.04)" stroke-width="1.1"/><path d="M723.7 455.9L728.1 458.2" stroke="rgba(30,30,30,0.11)" stroke-width="1.1"/><path d="M706.5 449.7L711.8 452.4" stroke="rgba(30,30,30,0.09)" stroke-width="0.8"/><path d="M709.9 449.5L716.1 452.7" stroke="rgba(30,30,30,0.07)" stroke-width="0.7"/><path d="M726.7 454.4L732.0 457.1" stroke="rgba(30,30,30,0.12)" stroke-width="1.5"/><path d="M706.5 451.6L713.8 455.3" stroke="rgba(30,30,30,0.13)" stroke-width="0.9"/><path d="M706.5 450.2L710.1 452.0" stroke="rgba(30,30,30,0.16)" stroke-width="0.9"/><path d="M715.3 454.9L721.5 458.1" stroke="rgba(30,30,30,0.06)" stroke-width="1.2"/><path d="M726.2 452.9L732.0 455.9" stroke="rgba(30,30,30,0.07)" stroke-width="1.3"/><path d="M714.6 455.5L719.3 458.0" stroke="rgba(30,30,30,0.10)" stroke-width="0.8"/><path d="M706.5 454.2L713.3 457.7" stroke="rgba(30,30,30,0.05)" stroke-width="0.7"/><path d="M714.2 451.3L719.0 453.8" stroke="rgba(30,30,30,0.14)" stroke-width="0.7"/><path d="M728.5 451.4L732.0 453.2" stroke="rgba(30,30,30,0.19)" stroke-width="1.0"/><path d="M706.5 454.3L713.2 457.7" stroke="rgba(30,30,30,0.14)" stroke-width="0.7"/><path d="M716.5 452.5L724.0 456.3" stroke="rgba(30,30,30,0.11)" stroke-width="1.4"/><path d="M710.7 452.3L718.0 456.0" stroke="rgba(30,30,30,0.05)" stroke-width="0.8"/><path d="M721.4 450.3L731.0 455.2" stroke="rgba(30,30,30,0.05)" stroke-width="0.8"/><path d="M713.4 448.9L721.5 453.0" stroke="rgba(30,30,30,0.22)" stroke-width="0.9"/><path d="M710.4 449.8L717.2 453.2" stroke="rgba(30,30,30,0.08)" stroke-width="1.1"/><path d="M725.1 452.4L732.0 456.0" stroke="rgba(30,30,30,0.09)" stroke-width="1.2"/><path d="M726.3 450.8L732.0 453.6" stroke="rgba(30,30,30,0.14)" stroke-width="0.8"/><path d="M706.5 451.9L710.9 454.2" stroke="rgba(30,30,30,0.13)" stroke-width="1.3"/></g>
<g filter="url(#bl)" stroke-linecap="butt"><path d="M1237.0 227.2L1244.5 231.0" stroke="rgba(30,30,30,0.12)" stroke-width="1.3"/><path d="M1181.4 229.6L1190.7 234.3" stroke="rgba(30,30,30,0.13)" stroke-width="1.1"/><path d="M1220.9 233.8L1226.5 236.7" stroke="rgba(30,30,30,0.07)" stroke-width="1.2"/><path d="M1240.2 230.9L1246.8 234.2" stroke="rgba(30,30,30,0.14)" stroke-width="0.8"/><path d="M1160.3 230.8L1168.8 235.1" stroke="rgba(30,30,30,0.11)" stroke-width="1.2"/><path d="M1179.3 233.7L1189.6 238.9" stroke="rgba(30,30,30,0.12)" stroke-width="1.3"/><path d="M1257.3 230.9L1261.9 233.2" stroke="rgba(30,30,30,0.08)" stroke-width="0.8"/><path d="M1244.0 230.6L1251.7 234.5" stroke="rgba(30,30,30,0.08)" stroke-width="1.1"/><path d="M1154.5 235.0L1160.2 237.9" stroke="rgba(30,30,30,0.04)" stroke-width="0.7"/><path d="M1176.1 230.9L1186.2 236.0" stroke="rgba(30,30,30,0.08)" stroke-width="0.8"/><path d="M1260.1 232.2L1262.5 233.4" stroke="rgba(30,30,30,0.09)" stroke-width="0.9"/><path d="M1255.0 232.5L1262.5 236.3" stroke="rgba(30,30,30,0.09)" stroke-width="1.3"/><path d="M1199.8 232.5L1207.2 236.2" stroke="rgba(30,30,30,0.05)" stroke-width="0.9"/><path d="M1195.3 227.0L1204.7 231.8" stroke="rgba(30,30,30,0.05)" stroke-width="1.0"/><path d="M1168.1 231.7L1175.4 235.4" stroke="rgba(30,30,30,0.09)" stroke-width="1.2"/><path d="M1169.5 229.1L1176.9 232.8" stroke="rgba(30,30,30,0.08)" stroke-width="1.3"/><path d="M1175.7 234.6L1184.2 239.0" stroke="rgba(30,30,30,0.08)" stroke-width="1.0"/><path d="M1185.3 233.7L1192.8 237.5" stroke="rgba(30,30,30,0.13)" stroke-width="1.1"/><path d="M1145.1 230.7L1149.8 233.1" stroke="rgba(30,30,30,0.13)" stroke-width="1.5"/><path d="M1242.2 232.7L1247.0 235.1" stroke="rgba(30,30,30,0.11)" stroke-width="1.3"/><path d="M1236.0 228.6L1243.5 232.4" stroke="rgba(30,30,30,0.08)" stroke-width="1.2"/><path d="M1211.8 229.6L1217.2 232.3" stroke="rgba(30,30,30,0.05)" stroke-width="1.1"/><path d="M1246.1 230.9L1254.4 235.2" stroke="rgba(30,30,30,0.25)" stroke-width="1.2"/><path d="M1246.6 233.2L1256.7 238.4" stroke="rgba(30,30,30,0.12)" stroke-width="0.8"/><path d="M1250.5 230.2L1260.7 235.4" stroke="rgba(30,30,30,0.09)" stroke-width="1.3"/><path d="M1143.5 231.4L1153.0 236.3" stroke="rgba(30,30,30,0.27)" stroke-width="1.4"/><path d="M1169.4 232.1L1179.9 237.4" stroke="rgba(30,30,30,0.08)" stroke-width="1.4"/><path d="M1214.5 227.0L1222.3 231.0" stroke="rgba(30,30,30,0.15)" stroke-width="1.5"/><path d="M1228.7 229.4L1239.0 234.7" stroke="rgba(30,30,30,0.05)" stroke-width="0.8"/><path d="M1203.6 230.2L1210.9 234.0" stroke="rgba(30,30,30,0.05)" stroke-width="0.7"/><path d="M1201.9 229.7L1207.3 232.5" stroke="rgba(30,30,30,0.11)" stroke-width="0.9"/><path d="M1163.5 231.7L1171.5 235.8" stroke="rgba(30,30,30,0.06)" stroke-width="0.9"/><path d="M1205.6 228.2L1215.0 232.9" stroke="rgba(30,30,30,0.08)" stroke-width="1.1"/><path d="M1183.7 230.3L1194.3 235.7" stroke="rgba(30,30,30,0.13)" stroke-width="1.3"/><path d="M1181.6 232.9L1190.2 237.3" stroke="rgba(30,30,30,0.11)" stroke-width="0.7"/><path d="M1140.8 229.0L1150.0 233.7" stroke="rgba(30,30,30,0.05)" stroke-width="0.7"/><path d="M1202.0 230.8L1211.4 235.5" stroke="rgba(30,30,30,0.15)" stroke-width="1.1"/><path d="M1223.9 230.7L1233.8 235.8" stroke="rgba(30,30,30,0.10)" stroke-width="1.5"/><path d="M1141.5 231.8L1151.7 237.0" stroke="rgba(30,30,30,0.13)" stroke-width="0.9"/><path d="M1191.7 234.3L1197.4 237.3" stroke="rgba(30,30,30,0.13)" stroke-width="1.2"/><path d="M1166.9 233.9L1176.3 238.7" stroke="rgba(30,30,30,0.12)" stroke-width="1.3"/><path d="M1147.8 228.0L1156.0 232.1" stroke="rgba(30,30,30,0.05)" stroke-width="0.7"/><path d="M1247.7 232.9L1258.1 238.2" stroke="rgba(30,30,30,0.04)" stroke-width="0.7"/><path d="M1146.6 231.1L1151.0 233.3" stroke="rgba(30,30,30,0.11)" stroke-width="0.8"/><path d="M1188.8 232.6L1194.4 235.5" stroke="rgba(30,30,30,0.11)" stroke-width="1.2"/><path d="M1196.0 231.8L1202.2 234.9" stroke="rgba(30,30,30,0.06)" stroke-width="1.3"/><path d="M1205.6 230.8L1216.0 236.1" stroke="rgba(30,30,30,0.05)" stroke-width="1.1"/><path d="M1241.8 233.9L1249.5 237.8" stroke="rgba(30,30,30,0.10)" stroke-width="1.4"/><path d="M1154.2 233.8L1164.4 239.0" stroke="rgba(30,30,30,0.08)" stroke-width="0.8"/><path d="M1180.9 228.8L1190.7 233.8" stroke="rgba(30,30,30,0.14)" stroke-width="1.2"/><path d="M1229.1 227.0L1239.3 232.2" stroke="rgba(30,30,30,0.05)" stroke-width="1.4"/><path d="M1198.7 232.6L1209.1 237.9" stroke="rgba(30,30,30,0.10)" stroke-width="1.5"/><path d="M1239.1 233.5L1247.3 237.7" stroke="rgba(30,30,30,0.24)" stroke-width="0.8"/><path d="M1149.7 230.5L1158.0 234.7" stroke="rgba(30,30,30,0.18)" stroke-width="1.3"/><path d="M1233.0 234.0L1238.0 236.5" stroke="rgba(30,30,30,0.05)" stroke-width="0.8"/><path d="M1224.2 228.4L1234.4 233.6" stroke="rgba(30,30,30,0.11)" stroke-width="1.3"/><path d="M1193.8 231.9L1198.9 234.5" stroke="rgba(30,30,30,0.14)" stroke-width="1.3"/><path d="M1254.8 230.9L1262.5 234.9" stroke="rgba(30,30,30,0.04)" stroke-width="0.7"/><path d="M1258.1 227.4L1262.5 229.6" stroke="rgba(30,30,30,0.13)" stroke-width="1.2"/><path d="M1148.1 231.7L1157.8 236.6" stroke="rgba(30,30,30,0.06)" stroke-width="1.1"/><path d="M1187.6 232.7L1192.1 235.0" stroke="rgba(30,30,30,0.05)" stroke-width="0.7"/><path d="M1256.5 230.6L1262.5 233.7" stroke="rgba(30,30,30,0.05)" stroke-width="1.3"/><path d="M1232.1 231.1L1242.7 236.5" stroke="rgba(30,30,30,0.07)" stroke-width="1.0"/><path d="M1202.0 233.8L1212.0 238.9" stroke="rgba(30,30,30,0.23)" stroke-width="1.3"/><path d="M1217.0 230.4L1225.4 234.7" stroke="rgba(30,30,30,0.10)" stroke-width="0.8"/><path d="M1142.6 228.6L1147.1 230.9" stroke="rgba(30,30,30,0.10)" stroke-width="1.3"/><path d="M1221.2 231.0L1231.2 236.0" stroke="rgba(30,30,30,0.20)" stroke-width="1.4"/><path d="M1181.3 233.3L1186.9 236.1" stroke="rgba(30,30,30,0.07)" stroke-width="1.1"/><path d="M1180.0 229.7L1188.6 234.0" stroke="rgba(30,30,30,0.11)" stroke-width="1.2"/><path d="M1169.1 232.9L1177.6 237.2" stroke="rgba(30,30,30,0.12)" stroke-width="0.9"/><path d="M1167.7 228.8L1178.2 234.1" stroke="rgba(30,30,30,0.08)" stroke-width="1.1"/><path d="M1247.1 232.1L1252.6 234.9" stroke="rgba(30,30,30,0.08)" stroke-width="1.1"/><path d="M1147.5 231.3L1152.6 233.9" stroke="rgba(30,30,30,0.06)" stroke-width="0.7"/><path d="M1169.8 231.1L1176.1 234.3" stroke="rgba(30,30,30,0.14)" stroke-width="1.3"/><path d="M1171.2 234.2L1178.8 238.0" stroke="rgba(30,30,30,0.12)" stroke-width="0.7"/><path d="M1198.4 230.9L1208.3 236.0" stroke="rgba(30,30,30,0.12)" stroke-width="1.4"/><path d="M1148.9 227.1L1158.3 231.9" stroke="rgba(30,30,30,0.09)" stroke-width="0.8"/><path d="M1171.4 227.7L1176.9 230.6" stroke="rgba(30,30,30,0.04)" stroke-width="1.0"/><path d="M1187.3 230.5L1196.1 235.0" stroke="rgba(30,30,30,0.08)" stroke-width="0.9"/><path d="M1159.6 232.0L1164.7 234.7" stroke="rgba(30,30,30,0.07)" stroke-width="1.2"/><path d="M1215.4 229.8L1223.6 233.9" stroke="rgba(30,30,30,0.15)" stroke-width="1.0"/><path d="M1184.9 228.7L1192.9 232.8" stroke="rgba(30,30,30,0.15)" stroke-width="1.1"/><path d="M1166.3 228.7L1176.4 233.9" stroke="rgba(30,30,30,0.12)" stroke-width="1.4"/><path d="M1186.6 229.6L1194.7 233.7" stroke="rgba(30,30,30,0.17)" stroke-width="1.4"/><path d="M1156.0 232.7L1164.1 236.8" stroke="rgba(30,30,30,0.08)" stroke-width="1.5"/><path d="M1140.5 231.4L1146.9 234.7" stroke="rgba(30,30,30,0.12)" stroke-width="1.4"/><path d="M1255.8 228.9L1262.5 232.3" stroke="rgba(30,30,30,0.15)" stroke-width="0.8"/><path d="M1209.5 230.7L1214.7 233.3" stroke="rgba(30,30,30,0.11)" stroke-width="1.4"/><path d="M1209.5 230.0L1220.0 235.4" stroke="rgba(30,30,30,0.13)" stroke-width="1.5"/><path d="M1212.5 230.8L1219.6 234.4" stroke="rgba(30,30,30,0.15)" stroke-width="1.3"/><path d="M1140.5 229.7L1143.7 231.3" stroke="rgba(30,30,30,0.11)" stroke-width="1.4"/><path d="M1195.0 232.1L1200.8 235.1" stroke="rgba(30,30,30,0.04)" stroke-width="1.5"/><path d="M1188.1 229.3L1194.8 232.7" stroke="rgba(30,30,30,0.13)" stroke-width="0.9"/><path d="M1159.0 229.5L1168.5 234.4" stroke="rgba(30,30,30,0.06)" stroke-width="1.1"/><path d="M1248.2 230.3L1256.9 234.7" stroke="rgba(30,30,30,0.15)" stroke-width="0.8"/><path d="M1146.1 229.9L1154.8 234.3" stroke="rgba(30,30,30,0.29)" stroke-width="1.2"/><path d="M1196.0 232.1L1202.6 235.4" stroke="rgba(30,30,30,0.13)" stroke-width="0.7"/><path d="M1176.4 231.2L1184.2 235.2" stroke="rgba(30,30,30,0.08)" stroke-width="1.1"/><path d="M1163.9 230.6L1169.6 233.5" stroke="rgba(30,30,30,0.12)" stroke-width="1.1"/><path d="M1188.4 233.7L1198.3 238.8" stroke="rgba(30,30,30,0.15)" stroke-width="0.9"/><path d="M1223.0 230.7L1229.2 233.9" stroke="rgba(30,30,30,0.04)" stroke-width="0.9"/><path d="M1165.3 232.5L1172.5 236.1" stroke="rgba(30,30,30,0.08)" stroke-width="1.0"/><path d="M1180.7 229.6L1187.7 233.2" stroke="rgba(30,30,30,0.16)" stroke-width="1.2"/><path d="M1211.1 228.6L1218.7 232.5" stroke="rgba(30,30,30,0.05)" stroke-width="1.1"/><path d="M1140.5 232.3L1144.9 234.6" stroke="rgba(30,30,30,0.25)" stroke-width="1.0"/><path d="M1180.6 234.1L1185.9 236.8" stroke="rgba(30,30,30,0.15)" stroke-width="1.3"/><path d="M1152.2 230.1L1160.6 234.4" stroke="rgba(30,30,30,0.11)" stroke-width="1.2"/><path d="M1248.8 231.8L1254.7 234.8" stroke="rgba(30,30,30,0.05)" stroke-width="0.7"/><path d="M1180.4 232.8L1186.8 236.0" stroke="rgba(30,30,30,0.13)" stroke-width="1.2"/><path d="M1239.3 234.1L1244.1 236.6" stroke="rgba(30,30,30,0.11)" stroke-width="0.9"/><path d="M1158.3 231.0L1163.8 233.8" stroke="rgba(30,30,30,0.13)" stroke-width="0.8"/><path d="M1234.2 230.2L1241.5 233.9" stroke="rgba(30,30,30,0.04)" stroke-width="1.0"/><path d="M1200.7 234.8L1206.7 237.8" stroke="rgba(30,30,30,0.08)" stroke-width="1.0"/><path d="M1204.8 230.1L1213.0 234.2" stroke="rgba(30,30,30,0.05)" stroke-width="1.0"/><path d="M1200.0 231.6L1205.1 234.2" stroke="rgba(30,30,30,0.11)" stroke-width="0.8"/><path d="M1144.3 229.6L1154.4 234.7" stroke="rgba(30,30,30,0.13)" stroke-width="0.7"/><path d="M1213.5 227.0L1223.2 231.9" stroke="rgba(30,30,30,0.15)" stroke-width="1.3"/><path d="M1230.2 227.0L1238.4 231.2" stroke="rgba(30,30,30,0.04)" stroke-width="1.2"/><path d="M1258.5 228.6L1262.5 230.6" stroke="rgba(30,30,30,0.15)" stroke-width="1.4"/><path d="M1213.6 230.0L1222.9 234.7" stroke="rgba(30,30,30,0.09)" stroke-width="0.7"/><path d="M1172.6 230.3L1180.6 234.3" stroke="rgba(30,30,30,0.05)" stroke-width="1.2"/><path d="M1175.3 229.4L1185.9 234.8" stroke="rgba(30,30,30,0.09)" stroke-width="1.0"/><path d="M1257.1 233.1L1262.5 235.8" stroke="rgba(30,30,30,0.07)" stroke-width="1.1"/><path d="M1239.2 233.5L1249.0 238.4" stroke="rgba(30,30,30,0.05)" stroke-width="0.8"/><path d="M1140.5 228.0L1146.1 230.9" stroke="rgba(30,30,30,0.06)" stroke-width="0.9"/><path d="M1239.3 227.2L1249.6 232.5" stroke="rgba(30,30,30,0.06)" stroke-width="1.3"/><path d="M1175.4 227.0L1184.7 231.7" stroke="rgba(30,30,30,0.08)" stroke-width="1.4"/><path d="M1251.0 232.1L1261.1 237.2" stroke="rgba(30,30,30,0.16)" stroke-width="1.2"/><path d="M1247.5 232.3L1256.9 237.1" stroke="rgba(30,30,30,0.13)" stroke-width="1.3"/><path d="M1207.3 229.2L1217.7 234.5" stroke="rgba(30,30,30,0.16)" stroke-width="0.7"/><path d="M1174.2 231.0L1179.4 233.7" stroke="rgba(30,30,30,0.15)" stroke-width="1.3"/><path d="M1161.7 228.8L1168.3 232.1" stroke="rgba(30,30,30,0.13)" stroke-width="1.3"/><path d="M1192.9 232.3L1200.0 235.9" stroke="rgba(30,30,30,0.07)" stroke-width="0.9"/><path d="M1153.1 234.7L1157.7 237.1" stroke="rgba(30,30,30,0.08)" stroke-width="1.4"/><path d="M1144.0 230.7L1150.2 233.9" stroke="rgba(30,30,30,0.07)" stroke-width="0.9"/><path d="M1157.2 236.6L1162.0 239.0" stroke="rgba(30,30,30,0.12)" stroke-width="1.1"/><path d="M1201.0 229.1L1211.3 234.3" stroke="rgba(30,30,30,0.14)" stroke-width="0.9"/><path d="M1162.4 231.3L1172.2 236.3" stroke="rgba(30,30,30,0.11)" stroke-width="1.1"/><path d="M1235.9 230.4L1242.4 233.7" stroke="rgba(30,30,30,0.06)" stroke-width="0.8"/><path d="M1255.0 228.9L1261.0 231.9" stroke="rgba(30,30,30,0.14)" stroke-width="1.2"/><path d="M1258.7 230.6L1262.5 232.6" stroke="rgba(30,30,30,0.27)" stroke-width="1.0"/><path d="M1204.0 231.7L1211.4 235.5" stroke="rgba(30,30,30,0.26)" stroke-width="1.5"/><path d="M1234.1 227.0L1238.7 229.3" stroke="rgba(30,30,30,0.05)" stroke-width="0.9"/><path d="M1200.6 233.1L1208.1 237.0" stroke="rgba(30,30,30,0.11)" stroke-width="1.4"/><path d="M1210.8 230.9L1220.7 235.9" stroke="rgba(30,30,30,0.14)" stroke-width="0.7"/><path d="M1176.7 233.6L1185.4 238.0" stroke="rgba(30,30,30,0.13)" stroke-width="1.4"/><path d="M1166.8 233.5L1176.9 238.7" stroke="rgba(30,30,30,0.07)" stroke-width="1.4"/><path d="M1241.1 229.6L1246.9 232.6" stroke="rgba(30,30,30,0.05)" stroke-width="0.8"/><path d="M1150.7 229.4L1160.7 234.4" stroke="rgba(30,30,30,0.10)" stroke-width="1.1"/><path d="M1227.6 227.0L1237.6 232.1" stroke="rgba(30,30,30,0.15)" stroke-width="1.4"/><path d="M1213.8 230.8L1221.9 235.0" stroke="rgba(30,30,30,0.14)" stroke-width="0.9"/><path d="M1166.3 230.2L1173.4 233.8" stroke="rgba(30,30,30,0.15)" stroke-width="1.4"/><path d="M1170.7 233.3L1177.5 236.8" stroke="rgba(30,30,30,0.15)" stroke-width="0.9"/><path d="M1235.9 227.8L1241.9 230.8" stroke="rgba(30,30,30,0.28)" stroke-width="1.4"/><path d="M1221.4 230.6L1230.0 235.0" stroke="rgba(30,30,30,0.10)" stroke-width="1.4"/><path d="M1188.6 229.5L1195.8 233.1" stroke="rgba(30,30,30,0.08)" stroke-width="1.4"/><path d="M1141.1 232.9L1146.5 235.6" stroke="rgba(30,30,30,0.12)" stroke-width="1.1"/><path d="M1255.7 230.9L1262.5 234.4" stroke="rgba(30,30,30,0.16)" stroke-width="1.4"/><path d="M1162.2 232.4L1167.0 234.8" stroke="rgba(30,30,30,0.13)" stroke-width="1.4"/><path d="M1172.8 232.0L1182.2 236.7" stroke="rgba(30,30,30,0.10)" stroke-width="1.2"/><path d="M1249.4 234.1L1256.9 238.0" stroke="rgba(30,30,30,0.05)" stroke-width="1.4"/><path d="M1188.9 230.0L1196.1 233.6" stroke="rgba(30,30,30,0.07)" stroke-width="0.8"/><path d="M1193.4 230.7L1200.6 234.4" stroke="rgba(30,30,30,0.11)" stroke-width="1.4"/><path d="M1188.9 227.7L1197.6 232.2" stroke="rgba(30,30,30,0.10)" stroke-width="0.9"/><path d="M1216.8 229.9L1224.7 233.9" stroke="rgba(30,30,30,0.16)" stroke-width="1.3"/><path d="M1176.8 234.5L1185.7 239.0" stroke="rgba(30,30,30,0.14)" stroke-width="1.4"/><path d="M1150.3 234.1L1159.8 239.0" stroke="rgba(30,30,30,0.09)" stroke-width="1.1"/><path d="M1145.7 229.3L1155.9 234.5" stroke="rgba(30,30,30,0.12)" stroke-width="1.2"/><path d="M1251.7 227.7L1260.4 232.1" stroke="rgba(30,30,30,0.15)" stroke-width="1.1"/><path d="M1201.5 230.9L1210.7 235.6" stroke="rgba(30,30,30,0.07)" stroke-width="0.7"/><path d="M1215.6 230.2L1223.9 234.4" stroke="rgba(30,30,30,0.16)" stroke-width="0.9"/><path d="M1191.7 229.8L1200.4 234.2" stroke="rgba(30,30,30,0.20)" stroke-width="1.1"/><path d="M1140.5 227.5L1147.6 231.1" stroke="rgba(30,30,30,0.09)" stroke-width="0.7"/><path d="M1232.5 230.9L1239.4 234.5" stroke="rgba(30,30,30,0.18)" stroke-width="0.7"/><path d="M1169.4 228.9L1180.1 234.3" stroke="rgba(30,30,30,0.11)" stroke-width="0.9"/><path d="M1219.3 233.5L1229.5 238.7" stroke="rgba(30,30,30,0.14)" stroke-width="0.9"/><path d="M1198.6 235.4L1204.2 238.3" stroke="rgba(30,30,30,0.12)" stroke-width="1.3"/><path d="M1185.8 228.9L1191.4 231.7" stroke="rgba(30,30,30,0.28)" stroke-width="1.4"/><path d="M1190.0 232.2L1194.6 234.6" stroke="rgba(30,30,30,0.05)" stroke-width="1.1"/><path d="M1192.0 231.3L1198.6 234.7" stroke="rgba(30,30,30,0.09)" stroke-width="1.1"/><path d="M1221.6 235.6L1228.2 239.0" stroke="rgba(30,30,30,0.11)" stroke-width="1.5"/><path d="M1160.7 231.5L1166.7 234.5" stroke="rgba(30,30,30,0.15)" stroke-width="1.2"/><path d="M1217.1 233.2L1226.0 237.7" stroke="rgba(30,30,30,0.09)" stroke-width="0.8"/><path d="M1230.5 227.0L1235.9 229.8" stroke="rgba(30,30,30,0.07)" stroke-width="1.3"/><path d="M1140.5 231.1L1144.1 232.9" stroke="rgba(30,30,30,0.15)" stroke-width="0.8"/><path d="M1172.2 231.3L1182.4 236.6" stroke="rgba(30,30,30,0.06)" stroke-width="1.0"/><path d="M1161.6 228.2L1170.2 232.6" stroke="rgba(30,30,30,0.09)" stroke-width="0.9"/><path d="M1166.9 227.0L1176.9 232.1" stroke="rgba(30,30,30,0.17)" stroke-width="0.8"/><path d="M1184.0 230.4L1191.6 234.3" stroke="rgba(30,30,30,0.06)" stroke-width="1.0"/><path d="M1150.1 233.6L1155.1 236.1" stroke="rgba(30,30,30,0.06)" stroke-width="0.8"/><path d="M1181.7 231.8L1191.7 236.9" stroke="rgba(30,30,30,0.13)" stroke-width="0.7"/><path d="M1152.0 233.8L1156.8 236.2" stroke="rgba(30,30,30,0.14)" stroke-width="0.8"/><path d="M1213.3 233.0L1218.8 235.8" stroke="rgba(30,30,30,0.08)" stroke-width="1.2"/><path d="M1176.4 234.3L1182.7 237.5" stroke="rgba(30,30,30,0.05)" stroke-width="1.1"/><path d="M1165.4 230.6L1171.4 233.7" stroke="rgba(30,30,30,0.12)" stroke-width="1.0"/><path d="M1209.2 227.8L1215.0 230.8" stroke="rgba(30,30,30,0.21)" stroke-width="1.1"/><path d="M1175.2 227.3L1184.0 231.8" stroke="rgba(30,30,30,0.04)" stroke-width="1.2"/><path d="M1230.0 231.1L1238.4 235.4" stroke="rgba(30,30,30,0.04)" stroke-width="0.9"/><path d="M1158.8 235.5L1163.8 238.1" stroke="rgba(30,30,30,0.06)" stroke-width="1.4"/><path d="M1225.6 231.1L1236.3 236.6" stroke="rgba(30,30,30,0.04)" stroke-width="1.1"/><path d="M1165.8 230.1L1172.5 233.5" stroke="rgba(30,30,30,0.05)" stroke-width="0.9"/><path d="M1198.9 234.5L1205.6 237.9" stroke="rgba(30,30,30,0.15)" stroke-width="0.7"/><path d="M1236.5 233.5L1242.4 236.5" stroke="rgba(30,30,30,0.07)" stroke-width="1.3"/><path d="M1197.2 228.2L1203.3 231.3" stroke="rgba(30,30,30,0.04)" stroke-width="0.9"/><path d="M1246.9 234.6L1253.3 237.8" stroke="rgba(30,30,30,0.10)" stroke-width="1.5"/><path d="M1153.3 231.6L1161.3 235.7" stroke="rgba(30,30,30,0.06)" stroke-width="1.1"/><path d="M1193.5 229.3L1198.9 232.1" stroke="rgba(30,30,30,0.07)" stroke-width="1.1"/><path d="M1185.3 232.7L1192.9 236.6" stroke="rgba(30,30,30,0.15)" stroke-width="1.1"/><path d="M1176.5 233.2L1184.1 237.1" stroke="rgba(30,30,30,0.11)" stroke-width="1.3"/><path d="M1230.1 232.4L1236.4 235.6" stroke="rgba(30,30,30,0.08)" stroke-width="1.2"/><path d="M1141.8 228.6L1150.8 233.2" stroke="rgba(30,30,30,0.13)" stroke-width="0.7"/><path d="M1202.1 233.4L1208.1 236.5" stroke="rgba(30,30,30,0.14)" stroke-width="1.4"/><path d="M1232.0 233.0L1241.4 237.8" stroke="rgba(30,30,30,0.15)" stroke-width="1.4"/><path d="M1165.7 232.7L1170.7 235.3" stroke="rgba(30,30,30,0.21)" stroke-width="0.9"/><path d="M1232.5 234.5L1237.9 237.3" stroke="rgba(30,30,30,0.13)" stroke-width="1.2"/><path d="M1249.9 230.4L1254.6 232.8" stroke="rgba(30,30,30,0.15)" stroke-width="1.4"/><path d="M1231.0 233.6L1240.4 238.4" stroke="rgba(30,30,30,0.05)" stroke-width="1.0"/><path d="M1255.5 229.4L1262.0 232.7" stroke="rgba(30,30,30,0.09)" stroke-width="1.1"/><path d="M1188.6 232.5L1196.6 236.5" stroke="rgba(30,30,30,0.14)" stroke-width="1.0"/><path d="M1157.4 231.1L1165.3 235.1" stroke="rgba(30,30,30,0.10)" stroke-width="1.0"/><path d="M1195.9 233.7L1206.1 238.9" stroke="rgba(30,30,30,0.13)" stroke-width="0.9"/><path d="M1220.6 227.2L1229.2 231.6" stroke="rgba(30,30,30,0.15)" stroke-width="0.7"/><path d="M1240.9 233.0L1251.4 238.4" stroke="rgba(30,30,30,0.08)" stroke-width="1.1"/><path d="M1148.7 231.4L1155.0 234.6" stroke="rgba(30,30,30,0.12)" stroke-width="1.5"/><path d="M1255.5 230.1L1262.1 233.5" stroke="rgba(30,30,30,0.10)" stroke-width="1.0"/><path d="M1229.6 228.0L1236.1 231.3" stroke="rgba(30,30,30,0.07)" stroke-width="1.3"/><path d="M1254.1 229.0L1261.9 233.0" stroke="rgba(30,30,30,0.07)" stroke-width="1.0"/><path d="M1223.0 232.2L1232.0 236.8" stroke="rgba(30,30,30,0.14)" stroke-width="0.8"/><path d="M1201.7 233.4L1207.3 236.3" stroke="rgba(30,30,30,0.21)" stroke-width="1.2"/><path d="M1175.0 230.5L1181.0 233.6" stroke="rgba(30,30,30,0.12)" stroke-width="0.9"/><path d="M1182.8 229.7L1190.3 233.5" stroke="rgba(30,30,30,0.07)" stroke-width="1.4"/><path d="M1173.5 234.2L1183.0 239.0" stroke="rgba(30,30,30,0.09)" stroke-width="0.9"/><path d="M1193.1 231.7L1202.9 236.7" stroke="rgba(30,30,30,0.14)" stroke-width="0.9"/><path d="M1218.8 228.8L1224.3 231.6" stroke="rgba(30,30,30,0.09)" stroke-width="1.2"/><path d="M1219.5 233.2L1229.7 238.4" stroke="rgba(30,30,30,0.05)" stroke-width="1.1"/><path d="M1167.3 231.7L1171.9 234.1" stroke="rgba(30,30,30,0.05)" stroke-width="0.8"/><path d="M1209.0 228.8L1216.5 232.6" stroke="rgba(30,30,30,0.14)" stroke-width="1.5"/><path d="M1229.9 228.9L1236.0 232.0" stroke="rgba(30,30,30,0.10)" stroke-width="1.3"/><path d="M1161.5 228.3L1171.8 233.5" stroke="rgba(30,30,30,0.07)" stroke-width="1.2"/><path d="M1222.9 229.5L1229.4 232.8" stroke="rgba(30,30,30,0.12)" stroke-width="1.5"/><path d="M1229.4 233.6L1237.8 237.9" stroke="rgba(30,30,30,0.10)" stroke-width="0.8"/><path d="M1197.5 231.7L1204.0 235.0" stroke="rgba(30,30,30,0.04)" stroke-width="0.9"/><path d="M1243.6 234.8L1249.7 237.9" stroke="rgba(30,30,30,0.09)" stroke-width="1.1"/><path d="M1226.0 230.1L1234.9 234.6" stroke="rgba(30,30,30,0.08)" stroke-width="1.2"/><path d="M1160.6 230.2L1166.8 233.4" stroke="rgba(30,30,30,0.08)" stroke-width="1.2"/><path d="M1228.7 230.6L1235.2 233.9" stroke="rgba(30,30,30,0.11)" stroke-width="1.5"/><path d="M1165.9 230.0L1173.0 233.6" stroke="rgba(30,30,30,0.04)" stroke-width="1.0"/><path d="M1217.4 229.6L1227.7 234.8" stroke="rgba(30,30,30,0.10)" stroke-width="1.3"/><path d="M1147.4 228.7L1156.7 233.4" stroke="rgba(30,30,30,0.12)" stroke-width="0.9"/><path d="M1175.3 230.5L1183.9 234.8" stroke="rgba(30,30,30,0.11)" stroke-width="1.2"/><path d="M1178.5 230.2L1186.3 234.2" stroke="rgba(30,30,30,0.09)" stroke-width="0.7"/><path d="M1154.0 231.7L1159.1 234.2" stroke="rgba(30,30,30,0.07)" stroke-width="1.4"/><path d="M1207.2 229.1L1214.7 232.9" stroke="rgba(30,30,30,0.04)" stroke-width="1.2"/><path d="M1209.9 231.4L1220.3 236.7" stroke="rgba(30,30,30,0.07)" stroke-width="1.2"/><path d="M1236.1 227.0L1246.6 232.4" stroke="rgba(30,30,30,0.12)" stroke-width="0.7"/><path d="M1175.5 232.3L1184.2 236.7" stroke="rgba(30,30,30,0.07)" stroke-width="0.9"/><path d="M1209.2 228.5L1218.9 233.5" stroke="rgba(30,30,30,0.08)" stroke-width="0.8"/><path d="M1161.3 230.3L1167.7 233.6" stroke="rgba(30,30,30,0.29)" stroke-width="0.7"/><path d="M1158.7 227.0L1168.0 231.8" stroke="rgba(30,30,30,0.14)" stroke-width="1.2"/><path d="M1173.1 232.1L1183.0 237.1" stroke="rgba(30,30,30,0.10)" stroke-width="1.0"/><path d="M1192.2 230.9L1200.1 234.9" stroke="rgba(30,30,30,0.05)" stroke-width="0.9"/><path d="M1167.4 230.6L1174.4 234.2" stroke="rgba(30,30,30,0.14)" stroke-width="1.3"/><path d="M1229.1 230.3L1234.2 232.9" stroke="rgba(30,30,30,0.09)" stroke-width="1.0"/><path d="M1214.4 227.0L1220.4 230.0" stroke="rgba(30,30,30,0.06)" stroke-width="0.8"/><path d="M1209.5 229.9L1216.9 233.7" stroke="rgba(30,30,30,0.08)" stroke-width="1.5"/><path d="M1186.1 232.3L1191.6 235.1" stroke="rgba(30,30,30,0.05)" stroke-width="0.9"/><path d="M1216.3 229.9L1221.2 232.4" stroke="rgba(30,30,30,0.08)" stroke-width="0.7"/><path d="M1205.8 231.1L1215.4 236.0" stroke="rgba(30,30,30,0.04)" stroke-width="1.3"/><path d="M1247.2 230.6L1256.9 235.5" stroke="rgba(30,30,30,0.06)" stroke-width="0.8"/><path d="M1159.0 235.2L1164.2 237.8" stroke="rgba(30,30,30,0.08)" stroke-width="1.1"/><path d="M1185.2 230.6L1194.2 235.3" stroke="rgba(30,30,30,0.15)" stroke-width="0.9"/><path d="M1185.3 230.3L1191.5 233.4" stroke="rgba(30,30,30,0.08)" stroke-width="0.9"/><path d="M1151.7 233.0L1162.3 238.4" stroke="rgba(30,30,30,0.11)" stroke-width="0.8"/><path d="M1145.7 230.4L1153.5 234.4" stroke="rgba(30,30,30,0.15)" stroke-width="0.8"/><path d="M1153.3 231.3L1161.6 235.6" stroke="rgba(30,30,30,0.06)" stroke-width="1.0"/><path d="M1185.8 230.0L1192.7 233.5" stroke="rgba(30,30,30,0.08)" stroke-width="1.2"/><path d="M1194.1 229.5L1204.3 234.7" stroke="rgba(30,30,30,0.05)" stroke-width="1.3"/><path d="M1228.4 228.4L1236.9 232.8" stroke="rgba(30,30,30,0.14)" stroke-width="0.9"/><path d="M1170.7 231.7L1175.8 234.3" stroke="rgba(30,30,30,0.11)" stroke-width="0.8"/><path d="M1189.3 233.5L1199.6 238.8" stroke="rgba(30,30,30,0.13)" stroke-width="1.3"/><path d="M1190.4 234.7L1197.7 238.5" stroke="rgba(30,30,30,0.04)" stroke-width="1.0"/><path d="M1247.2 233.0L1251.9 235.4" stroke="rgba(30,30,30,0.08)" stroke-width="1.2"/><path d="M1166.6 227.5L1174.2 231.4" stroke="rgba(30,30,30,0.15)" stroke-width="1.3"/><path d="M1227.2 231.8L1237.1 236.8" stroke="rgba(30,30,30,0.12)" stroke-width="1.4"/><path d="M1233.3 227.0L1238.3 229.6" stroke="rgba(30,30,30,0.12)" stroke-width="0.8"/><path d="M1161.0 228.9L1171.4 234.2" stroke="rgba(30,30,30,0.26)" stroke-width="1.3"/><path d="M1203.5 230.0L1210.0 233.3" stroke="rgba(30,30,30,0.13)" stroke-width="0.7"/><path d="M1171.6 228.4L1180.4 232.9" stroke="rgba(30,30,30,0.11)" stroke-width="1.1"/><path d="M1248.7 233.9L1255.4 237.3" stroke="rgba(30,30,30,0.17)" stroke-width="0.7"/><path d="M1182.2 233.8L1189.4 237.5" stroke="rgba(30,30,30,0.11)" stroke-width="0.9"/><path d="M1140.5 227.1L1148.2 231.0" stroke="rgba(30,30,30,0.06)" stroke-width="1.3"/><path d="M1253.5 232.8L1260.3 236.3" stroke="rgba(30,30,30,0.13)" stroke-width="1.4"/><path d="M1224.1 233.1L1233.5 237.9" stroke="rgba(30,30,30,0.11)" stroke-width="0.7"/><path d="M1163.4 227.3L1172.0 231.7" stroke="rgba(30,30,30,0.12)" stroke-width="1.0"/><path d="M1253.5 229.6L1262.5 234.2" stroke="rgba(30,30,30,0.15)" stroke-width="1.3"/><path d="M1169.9 233.0L1174.9 235.5" stroke="rgba(30,30,30,0.14)" stroke-width="1.4"/><path d="M1147.4 234.6L1154.4 238.1" stroke="rgba(30,30,30,0.10)" stroke-width="1.1"/><path d="M1254.3 228.5L1262.5 232.7" stroke="rgba(30,30,30,0.17)" stroke-width="0.9"/><path d="M1184.6 231.5L1189.8 234.2" stroke="rgba(30,30,30,0.11)" stroke-width="1.4"/><path d="M1203.3 235.7L1209.8 239.0" stroke="rgba(30,30,30,0.09)" stroke-width="0.8"/><path d="M1181.8 234.6L1186.4 237.0" stroke="rgba(30,30,30,0.06)" stroke-width="0.7"/><path d="M1246.2 234.6L1254.9 239.0" stroke="rgba(30,30,30,0.14)" stroke-width="1.4"/><path d="M1151.6 231.0L1161.6 236.1" stroke="rgba(30,30,30,0.11)" stroke-width="1.0"/><path d="M1169.9 228.8L1176.7 232.3" stroke="rgba(30,30,30,0.14)" stroke-width="0.9"/><path d="M1204.5 232.1L1210.6 235.2" stroke="rgba(30,30,30,0.11)" stroke-width="1.1"/><path d="M1209.8 231.6L1217.0 235.2" stroke="rgba(30,30,30,0.08)" stroke-width="1.4"/><path d="M1202.5 233.0L1207.7 235.6" stroke="rgba(30,30,30,0.07)" stroke-width="1.1"/><path d="M1253.1 231.5L1262.5 236.2" stroke="rgba(30,30,30,0.09)" stroke-width="0.8"/><path d="M1239.7 231.2L1249.5 236.2" stroke="rgba(30,30,30,0.11)" stroke-width="1.4"/><path d="M1155.1 234.7L1160.9 237.7" stroke="rgba(30,30,30,0.05)" stroke-width="0.8"/><path d="M1188.8 234.5L1197.2 238.9" stroke="rgba(30,30,30,0.16)" stroke-width="0.9"/><path d="M1140.5 234.0L1146.3 237.0" stroke="rgba(30,30,30,0.07)" stroke-width="1.2"/><path d="M1210.0 229.0L1216.0 232.1" stroke="rgba(30,30,30,0.12)" stroke-width="1.3"/><path d="M1215.2 231.0L1223.9 235.5" stroke="rgba(30,30,30,0.07)" stroke-width="1.1"/><path d="M1239.4 234.2L1248.8 239.0" stroke="rgba(30,30,30,0.13)" stroke-width="1.4"/><path d="M1216.2 229.1L1220.7 231.4" stroke="rgba(30,30,30,0.11)" stroke-width="1.4"/><path d="M1237.3 229.5L1245.3 233.5" stroke="rgba(30,30,30,0.17)" stroke-width="1.0"/><path d="M1151.3 234.7L1159.6 239.0" stroke="rgba(30,30,30,0.13)" stroke-width="0.8"/><path d="M1210.8 228.3L1220.8 233.4" stroke="rgba(30,30,30,0.11)" stroke-width="1.4"/><path d="M1184.4 229.0L1193.8 233.8" stroke="rgba(30,30,30,0.05)" stroke-width="0.8"/><path d="M1186.3 230.0L1196.3 235.1" stroke="rgba(30,30,30,0.12)" stroke-width="0.7"/><path d="M1222.3 234.3L1229.3 237.8" stroke="rgba(30,30,30,0.10)" stroke-width="1.1"/><path d="M1236.3 232.9L1242.0 235.8" stroke="rgba(30,30,30,0.06)" stroke-width="0.8"/><path d="M1143.7 232.1L1152.6 236.7" stroke="rgba(30,30,30,0.09)" stroke-width="1.0"/><path d="M1247.8 235.0L1255.7 239.0" stroke="rgba(30,30,30,0.11)" stroke-width="0.8"/><path d="M1198.3 231.5L1203.6 234.2" stroke="rgba(30,30,30,0.12)" stroke-width="0.8"/><path d="M1228.2 229.1L1236.7 233.5" stroke="rgba(30,30,30,0.20)" stroke-width="1.2"/><path d="M1228.4 231.5L1238.5 236.6" stroke="rgba(30,30,30,0.22)" stroke-width="1.3"/><path d="M1197.4 235.4L1202.7 238.1" stroke="rgba(30,30,30,0.12)" stroke-width="0.8"/><path d="M1201.5 228.7L1206.4 231.2" stroke="rgba(30,30,30,0.09)" stroke-width="1.1"/><path d="M1195.2 228.5L1199.7 230.8" stroke="rgba(30,30,30,0.25)" stroke-width="1.3"/><path d="M1185.8 228.1L1195.9 233.3" stroke="rgba(30,30,30,0.04)" stroke-width="1.3"/><path d="M1175.0 228.2L1185.3 233.5" stroke="rgba(30,30,30,0.14)" stroke-width="1.0"/><path d="M1249.4 232.5L1258.9 237.3" stroke="rgba(30,30,30,0.19)" stroke-width="0.9"/><path d="M1165.3 227.2L1175.0 232.1" stroke="rgba(30,30,30,0.22)" stroke-width="0.9"/><path d="M1191.1 232.8L1198.9 236.8" stroke="rgba(30,30,30,0.21)" stroke-width="0.9"/><path d="M1184.9 232.1L1191.2 235.3" stroke="rgba(30,30,30,0.15)" stroke-width="1.1"/><path d="M1201.2 233.1L1208.4 236.7" stroke="rgba(30,30,30,0.05)" stroke-width="1.2"/><path d="M1237.8 227.9L1244.2 231.2" stroke="rgba(30,30,30,0.05)" stroke-width="1.0"/><path d="M1177.9 235.8L1184.1 239.0" stroke="rgba(30,30,30,0.12)" stroke-width="0.7"/><path d="M1143.7 234.8L1151.4 238.7" stroke="rgba(30,30,30,0.14)" stroke-width="1.0"/><path d="M1187.7 229.3L1193.2 232.2" stroke="rgba(30,30,30,0.09)" stroke-width="1.0"/><path d="M1202.5 231.9L1210.2 235.8" stroke="rgba(30,30,30,0.14)" stroke-width="1.2"/><path d="M1233.1 231.0L1239.1 234.0" stroke="rgba(30,30,30,0.10)" stroke-width="0.8"/><path d="M1150.0 227.7L1157.0 231.3" stroke="rgba(30,30,30,0.10)" stroke-width="1.4"/><path d="M1195.4 232.3L1205.9 237.7" stroke="rgba(30,30,30,0.07)" stroke-width="0.7"/><path d="M1141.8 229.6L1151.4 234.5" stroke="rgba(30,30,30,0.10)" stroke-width="1.2"/><path d="M1140.5 229.2L1145.8 231.9" stroke="rgba(30,30,30,0.13)" stroke-width="1.4"/><path d="M1232.5 232.2L1242.2 237.2" stroke="rgba(30,30,30,0.06)" stroke-width="0.8"/><path d="M1159.6 232.6L1164.5 235.1" stroke="rgba(30,30,30,0.07)" stroke-width="0.9"/><path d="M1203.2 232.1L1208.2 234.6" stroke="rgba(30,30,30,0.12)" stroke-width="0.7"/><path d="M1140.5 231.9L1148.8 236.1" stroke="rgba(30,30,30,0.13)" stroke-width="1.4"/><path d="M1180.9 230.7L1190.1 235.4" stroke="rgba(30,30,30,0.05)" stroke-width="1.2"/><path d="M1223.0 231.7L1232.2 236.4" stroke="rgba(30,30,30,0.08)" stroke-width="0.9"/><path d="M1153.1 231.5L1161.8 235.9" stroke="rgba(30,30,30,0.12)" stroke-width="1.2"/><path d="M1173.8 227.0L1181.6 231.0" stroke="rgba(30,30,30,0.15)" stroke-width="1.5"/><path d="M1251.5 227.1L1258.3 230.6" stroke="rgba(30,30,30,0.14)" stroke-width="1.1"/><path d="M1218.6 231.9L1225.2 235.2" stroke="rgba(30,30,30,0.08)" stroke-width="1.1"/><path d="M1159.4 232.6L1167.6 236.8" stroke="rgba(30,30,30,0.12)" stroke-width="1.5"/><path d="M1147.1 228.3L1155.1 232.4" stroke="rgba(30,30,30,0.10)" stroke-width="1.1"/><path d="M1195.7 229.5L1206.1 234.9" stroke="rgba(30,30,30,0.10)" stroke-width="1.0"/><path d="M1248.3 235.0L1254.5 238.2" stroke="rgba(30,30,30,0.14)" stroke-width="1.1"/><path d="M1165.1 230.7L1175.4 235.9" stroke="rgba(30,30,30,0.13)" stroke-width="1.3"/><path d="M1242.4 229.9L1251.5 234.6" stroke="rgba(30,30,30,0.09)" stroke-width="1.0"/><path d="M1181.3 232.7L1189.2 236.7" stroke="rgba(30,30,30,0.24)" stroke-width="1.2"/><path d="M1152.6 229.3L1158.9 232.5" stroke="rgba(30,30,30,0.05)" stroke-width="1.4"/></g>
<g fill="none" stroke="#fff" stroke-width="1.2"><path d="M182.5 641.6 L181 640.6 H176.6 V650.4 H181 L182.5 651.4 V641.6 L184 640.6 H188.4 V642.2 M188.4 650.4 H184 L182.5 651.4"/></g><path d="M181.2 651.2 h2.6 l-1.3 1.9 z" fill="#fff"/><path d="M185.3 643.7 L189.7 648.5 M189.7 643.7 L185.3 648.5" stroke="#1f4a8d" stroke-width="3"/><path d="M185.3 643.7 L189.7 648.5 M189.7 643.7 L185.3 648.5" stroke="#fff" stroke-width="1.6"/><g fill="none" stroke="#fff" stroke-width="1.3"><path d="M1032.5 651.3 V641.3 L1031.5 640.6 H1026.6 V650.4 H1031.5 L1032.5 651.3 L1033.5 650.4 H1038.4 V640.6 H1033.5 L1032.5 641.3"/></g><g fill="#fff"><rect x="1028.4" y="642" width="3" height="1"/><rect x="1033.6" y="642" width="3" height="1"/><rect x="1028.4" y="644" width="3" height="1"/><rect x="1033.6" y="644" width="3" height="1"/><rect x="1028.4" y="646" width="3" height="1"/><rect x="1033.6" y="646" width="3" height="1"/><rect x="1028.4" y="648" width="3" height="1"/><rect x="1033.6" y="648" width="3" height="1"/><path d="M1031 651 h3 l-1.5 2 z"/></g><rect x="1064.65" y="640.65" width="12.7" height="11.7" fill="none" stroke="#fff" stroke-width="1.3"/><g fill="#fff"><rect x="1066.3" y="642" width="9.6" height="1"/><rect x="1066.3" y="644" width="9.6" height="1"/><rect x="1066.3" y="646" width="9.6" height="1"/><rect x="1066.3" y="648" width="9.6" height="1"/><rect x="1066.3" y="650" width="9.6" height="1"/></g><path d="M1108 650.3 h-5.35 v-9.65 h11 v4" fill="none" stroke="#fff" stroke-width="1.3"/><g fill="#fff"><rect x="1104.2" y="642" width="8" height="1"/><rect x="1104.2" y="644" width="6.4" height="1"/><rect x="1104.2" y="646" width="3.4" height="1"/><rect x="1104.2" y="648" width="2.6" height="1"/></g><circle cx="1112" cy="649" r="4.2" fill="#fff"/><path d="M1110 647.6 q1.2 -1.4 2.4 -.8 q-.2 1 .5 1.6 q.3 1.2 -.8 2.2 q-.8 -.8 -.9 -1.9 q-1.1 -.2 -1.2 -1.1z M1113.8 647 q1.2 .6 1.3 2 q-1 -.4 -1.3 -2z" fill="#2b579a" opacity=".9"/><rect x="1133" y="646" width="6" height="2" fill="#fff"/><rect x="1143" y="646" width="100" height="1" fill="#fff"/><rect x="1191" y="641" width="4" height="11" fill="#fff"/><rect x="1247" y="646" width="8" height="2" fill="#fff"/><rect x="1250" y="643" width="2" height="8" fill="#fff"/>
</svg>
<svg width="20" height="659" viewBox="0 0 20 659"><rect x="10" y="150" width="5" height="1" fill="#b2b2b2"/>
<rect x="12" y="159" width="2" height="1" fill="#b2b2b2"/>
<rect x="12" y="178" width="2" height="1" fill="#b2b2b2"/>
<rect x="10" y="188" width="5" height="1" fill="#b2b2b2"/>
<rect x="12" y="197" width="2" height="1" fill="#b2b2b2"/>
<rect x="12" y="216" width="2" height="1" fill="#b2b2b2"/>
<rect x="10" y="226" width="5" height="1" fill="#b2b2b2"/>
<rect x="12" y="235" width="2" height="1" fill="#b2b2b2"/>
<rect x="12" y="254" width="2" height="1" fill="#b2b2b2"/>
<rect x="10" y="263" width="5" height="1" fill="#b2b2b2"/>
<rect x="12" y="273" width="2" height="1" fill="#b2b2b2"/>
<rect x="12" y="292" width="2" height="1" fill="#b2b2b2"/>
<rect x="10" y="301" width="5" height="1" fill="#b2b2b2"/>
<rect x="12" y="311" width="2" height="1" fill="#b2b2b2"/>
<rect x="12" y="330" width="2" height="1" fill="#b2b2b2"/>
<rect x="10" y="339" width="5" height="1" fill="#b2b2b2"/>
<rect x="12" y="348" width="2" height="1" fill="#b2b2b2"/>
<rect x="12" y="367" width="2" height="1" fill="#b2b2b2"/>
<rect x="10" y="377" width="5" height="1" fill="#b2b2b2"/>
<rect x="12" y="386" width="2" height="1" fill="#b2b2b2"/>
<rect x="12" y="405" width="2" height="1" fill="#b2b2b2"/>
<rect x="10" y="415" width="5" height="1" fill="#b2b2b2"/>
<rect x="12" y="424" width="2" height="1" fill="#b2b2b2"/>
<rect x="12" y="443" width="2" height="1" fill="#b2b2b2"/>
<rect x="10" y="452" width="5" height="1" fill="#b2b2b2"/>
<rect x="12" y="462" width="2" height="1" fill="#b2b2b2"/>
<rect x="12" y="481" width="2" height="1" fill="#b2b2b2"/>
<rect x="10" y="490" width="5" height="1" fill="#b2b2b2"/>
<rect x="12" y="500" width="2" height="1" fill="#b2b2b2"/>
<rect x="12" y="519" width="2" height="1" fill="#b2b2b2"/>
<rect x="10" y="528" width="5" height="1" fill="#b2b2b2"/>
<rect x="12" y="537" width="2" height="1" fill="#b2b2b2"/>
<rect x="12" y="556" width="2" height="1" fill="#b2b2b2"/>
<rect x="10" y="566" width="5" height="1" fill="#b2b2b2"/>
<rect x="12" y="575" width="2" height="1" fill="#b2b2b2"/>
<rect x="12" y="594" width="2" height="1" fill="#b2b2b2"/>
<rect x="10" y="604" width="5" height="1" fill="#b2b2b2"/>
<rect x="12" y="613" width="2" height="1" fill="#b2b2b2"/>
<rect x="12" y="632" width="2" height="1" fill="#b2b2b2"/>
<rect x="4" y="146" width="13" height="16" fill="#e4e4e4"/>
<rect x="4" y="172" width="13" height="9" fill="#e4e4e4"/>
<rect x="4" y="191" width="13" height="9" fill="#e4e4e4"/>
<rect x="4" y="212" width="13" height="9" fill="#e4e4e4"/>
<rect x="4" y="230" width="13" height="9" fill="#e4e4e4"/>
<rect x="4" y="256" width="13" height="9" fill="#e4e4e4"/>
<rect x="4" y="282" width="13" height="9" fill="#e4e4e4"/>
<rect x="4" y="301" width="13" height="9" fill="#e4e4e4"/>
<rect x="4" y="322" width="13" height="9" fill="#e4e4e4"/>
<rect x="4" y="365" width="13" height="9" fill="#e4e4e4"/>
<rect x="4" y="386" width="13" height="9" fill="#e4e4e4"/>
<rect x="4" y="405" width="13" height="9" fill="#e4e4e4"/>
<rect x="4" y="426" width="13" height="9" fill="#e4e4e4"/>
<rect x="4" y="446" width="13" height="9" fill="#e4e4e4"/>
<rect x="4" y="465" width="13" height="9" fill="#e4e4e4"/>
<rect x="4" y="486" width="13" height="9" fill="#e4e4e4"/>
<rect x="4" y="503" width="13" height="9" fill="#e4e4e4"/>
<rect x="4" y="532" width="13" height="9" fill="#e4e4e4"/>
<rect x="4" y="623" width="13" height="9" fill="#e4e4e4"/></svg>
<div class="a" style="left:0;top:0;width:1317px;height:659px;will-change:transform"><span class="t" style="left:18.53px;top:-2.00px;font-size:12px;color:#fff;transform:scaleX(0.8706);">FILE</span>
<span class="t" style="left:75.39px;top:-2.00px;font-size:12px;color:#444;transform:scaleX(0.9954);">HOME</span>
<span class="t" style="left:139.65px;top:-2.00px;font-size:12px;color:#444;transform:scaleX(0.8375);">INSERT</span>
<span class="t" style="left:205.71px;top:-2.00px;font-size:12px;color:#444;transform:scaleX(0.8842);">DESIGN</span>
<span class="t" style="left:274.49px;top:-2.00px;font-size:12px;color:#444;transform:scaleX(0.9041);">PAGE LAYOUT</span>
<span class="t" style="left:378.78px;top:-2.00px;font-size:12px;color:#444;transform:scaleX(0.8248);">REFERENCES</span>
<span class="t" style="left:474.63px;top:-2.00px;font-size:12px;color:#444;transform:scaleX(0.9536);">MAILINGS</span>
<span class="t" style="left:557.45px;top:-2.00px;font-size:12px;color:#444;transform:scaleX(0.8493);">REVIEW</span>
<span class="t" style="left:626.91px;top:-2.00px;font-size:12px;color:#444;transform:scaleX(0.8856);">VIEW</span>
<span class="t" style="left:682.73px;top:-2.00px;font-size:12px;color:#2b579a;transform:scaleX(0.8703);">FORESIGHT</span>
<span class="t" style="left:774.62px;top:-2.00px;font-size:12px;color:#444;transform:scaleX(0.8773);">DESIGN</span>
<span class="t" style="left:843.67px;top:-2.00px;font-size:12px;color:#444;transform:scaleX(0.9253);">LAYOUT</span>
<span class="t" style="left:1280.60px;top:-5.00px;font-size:12.5px;color:#444;transform:scaleX(0.9659);">Sign in</span>
<span class="t" style="left:5.77px;top:59.00px;font-size:12px;color:#3a3a3a;transform:scaleX(1.0233);">Analytical</span>
<span class="t" style="left:8.83px;top:75.00px;font-size:12px;color:#3a3a3a;transform:scaleX(0.9802);">queries</span>
<span class="t" style="left:63.79px;top:59.00px;font-size:12px;color:#3a3a3a;transform:scaleX(0.9482);">Time series</span>
<span class="t" style="left:67.93px;top:75.00px;font-size:12px;color:#3a3a3a;transform:scaleX(0.9470);">analysis</span>
<span class="t" style="left:126.41px;top:59.00px;font-size:12px;color:#3a3a3a;transform:scaleX(0.9715);">Reports</span>
<span class="t" style="left:171.55px;top:59.00px;font-size:12px;color:#3a3a3a;transform:scaleX(0.9438);">Refresh</span>
<span class="t" style="left:228.25px;top:59.00px;font-size:12px;color:#3a3a3a;transform:scaleX(1.0588);">Unbind</span>
<span class="t" style="left:215.88px;top:75.00px;font-size:12px;color:#3a3a3a;transform:scaleX(1.0200);">from source</span>
<span class="t" style="left:297.58px;top:59.00px;font-size:12px;color:#3a3a3a;transform:scaleX(0.9984);">Batch</span>
<span class="t" style="left:295.81px;top:75.00px;font-size:12px;color:#3a3a3a;transform:scaleX(1.0357);">print...</span>
<span class="t" style="left:341.58px;top:59.00px;font-size:12px;color:#3a3a3a;transform:scaleX(1.0053);">Batch</span>
<span class="t" style="left:335.94px;top:75.00px;font-size:12px;color:#3a3a3a;transform:scaleX(0.9771);">export...</span>
<span class="t" style="left:392.04px;top:59.00px;font-size:12px;color:#3a3a3a;transform:scaleX(1.0093);">Controls</span>
<span class="t" style="left:470.63px;top:25.00px;font-size:12px;color:#ababab;transform:scaleX(1.0450);">Help</span>
<span class="t" style="left:451.96px;top:48.00px;font-size:12px;color:#3a3a3a;transform:scaleX(1.0498);">About</span>
<span class="t" style="left:125.50px;top:94.00px;font-size:12px;color:#666;transform:scaleX(0.9850);">Report</span>
<span class="t" style="left:291.60px;top:94.00px;font-size:12px;color:#666;transform:scaleX(0.9802);">Batch operations</span>
<span class="t" style="left:402.19px;top:94.00px;font-size:12px;color:#666;transform:scaleX(0.9526);">View</span>
<span class="t" style="left:463.50px;top:94.00px;font-size:12px;color:#666;transform:scaleX(0.9846);">Help</span>
<span class="t" style="left:7.39px;top:631.00px;font-size:11.5px;color:#fff;transform:scaleX(0.9240);">PAGE 1 OF 28</span>
<span class="t" style="left:94.36px;top:631.00px;font-size:11.5px;color:#fff;transform:scaleX(0.9493);">140 WORDS</span>
<span class="t" style="left:207.66px;top:631.00px;font-size:11.5px;color:#fff;transform:scaleX(0.8645);">ENGLISH (UNITED STATES)</span>
<span class="t" style="left:1271.00px;top:631.00px;font-size:11.5px;color:#fff;transform:scaleX(0.9214);">100%</span>
<span class="t" style="left:1135.59px;top:129.50px;font-size:20px;color:#2b579a;transform:scaleX(1.0437);-webkit-text-stroke:0.55px #fff;">Controls</span>
<span class="t" style="left:1136.43px;top:161.00px;font-size:11px;color:#000;transform:scaleX(1.1152);font-family:'DejaVu Sans Condensed', 'DejaVu Sans', 'Liberation Sans', sans-serif;">Year:</span>
<span class="t" style="left:1141.49px;top:178.50px;font-size:11px;color:#000;transform:scaleX(0.9785);font-family:'DejaVu Sans Condensed', 'DejaVu Sans', 'Liberation Sans', sans-serif;">(3 of 6 selected)</span>
<span class="t" style="left:1136.20px;top:201.00px;font-size:11px;color:#000;transform:scaleX(0.9842);font-family:'DejaVu Sans Condensed', 'DejaVu Sans', 'Liberation Sans', sans-serif;">Organization:</span>
<span class="t" style="left:439.07px;top:165.00px;font-size:10.67px;color:#000;letter-spacing:0.125px;">Forms</span>
<span class="t" style="left:351.33px;top:185.00px;font-size:10.67px;color:#000;letter-spacing:0.017px;">of balance sheet and financial results report</span>
<span class="t" style="left:399.52px;top:227.60px;font-size:16px;color:#000;letter-spacing:0.039px;font-weight:700;">Balance Sheet</span>
<span class="t" style="left:390.20px;top:251.60px;font-size:14.67px;color:#000;letter-spacing:0.019px;font-weight:700;">31 December 2016</span>
<span class="t" style="left:703.33px;top:276.00px;font-size:10.67px;color:#000;letter-spacing:0.072px;">Codes</span>
<span class="t" style="left:314.53px;top:297.00px;font-size:10.67px;color:#000;letter-spacing:0.036px;">Organization:</span>
<span class="t" style="left:619.44px;top:297.00px;font-size:10.67px;color:#000;letter-spacing:0.032px;">OKUD form</span>
<span class="t" style="left:651.68px;top:315.00px;font-size:10.67px;color:#000;letter-spacing:0.213px;">Date</span>
<span class="t" style="left:691.10px;top:315.00px;font-size:10.67px;color:#000;letter-spacing:0.007px;">08/07/2019</span>
<span class="t" style="left:600.69px;top:327.00px;font-size:10.67px;color:#000;letter-spacing:0.012px;">(month/day/yea</span>
<span class="t" style="left:667.05px;top:340.00px;font-size:10.67px;color:#000;letter-spacing:0.617px;">r)</span>
<span class="t" style="left:314.65px;top:359.00px;font-size:10.67px;color:#000;letter-spacing:0.048px;">Taxpayer identification number</span>
<span class="t" style="left:643.52px;top:359.00px;font-size:10.67px;color:#000;letter-spacing:-0.024px;">OKPO</span>
<span class="t" style="left:314.27px;top:379.00px;font-size:10.67px;color:#000;letter-spacing:0.037px;">Economic activity type</span>
<span class="t" style="left:657.35px;top:379.00px;font-size:10.67px;color:#000;letter-spacing:0.206px;">TIN</span>
<span class="t" style="left:314.27px;top:399.00px;font-size:10.67px;color:#000;letter-spacing:0.016px;">Legal organization form/Form of ownership</span>
<span class="t" style="left:637.12px;top:399.00px;font-size:10.67px;color:#000;letter-spacing:0.102px;">OKVED</span>
<span class="t" style="left:611.62px;top:418.70px;font-size:10.67px;color:#000;letter-spacing:0.021px;">OKPO/OKFS</span>
<span class="t" style="left:314.28px;top:438.70px;font-size:10.67px;color:#000;letter-spacing:0.030px;">Measurement unit: thousands rubles</span>
<span class="t" style="left:648.82px;top:438.70px;font-size:10.67px;color:#000;letter-spacing:0.286px;">OKEI</span>
<span class="t" style="left:314.27px;top:461.00px;font-size:10.67px;color:#000;letter-spacing:0.079px;">Residence (address)</span>
<span class="t" style="left:318.97px;top:551.50px;font-size:13.33px;color:#4f4f4f;letter-spacing:0.028px;font-weight:700;">Balance sheet indicators</span>
<span class="t" style="left:622.70px;top:505.80px;font-size:13.33px;color:#4f4f4f;letter-spacing:-0.022px;font-weight:700;">2014</span>
<span class="t" style="left:630.47px;top:534.50px;font-size:13.33px;color:#4f4f4f;letter-spacing:0.420px;font-weight:700;">At</span>
<span class="t" style="left:607.87px;top:549.80px;font-size:13.33px;color:#4f4f4f;letter-spacing:0.086px;font-weight:700;">reporting</span>
<span class="t" style="left:615.49px;top:565.30px;font-size:13.33px;color:#4f4f4f;letter-spacing:0.075px;font-weight:700;">date of</span>
<span class="t" style="left:607.87px;top:580.80px;font-size:13.33px;color:#4f4f4f;letter-spacing:0.086px;font-weight:700;">reporting</span>
<span class="t" style="left:616.97px;top:596.10px;font-size:13.33px;color:#4f4f4f;letter-spacing:0.170px;font-weight:700;">period</span>
<span class="t" style="left:703.90px;top:505.80px;font-size:13.33px;color:#4f4f4f;letter-spacing:0.082px;font-weight:700;">2015</span>
<span class="t" style="left:711.67px;top:534.50px;font-size:13.33px;color:#4f4f4f;letter-spacing:0.420px;font-weight:700;">At</span>
<span class="t" style="left:689.07px;top:549.80px;font-size:13.33px;color:#4f4f4f;letter-spacing:0.086px;font-weight:700;">reporting</span>
<span class="t" style="left:696.69px;top:565.30px;font-size:13.33px;color:#4f4f4f;letter-spacing:0.075px;font-weight:700;">date of</span>
<span class="t" style="left:689.07px;top:580.80px;font-size:13.33px;color:#4f4f4f;letter-spacing:0.086px;font-weight:700;">reporting</span>
<span class="t" style="left:698.17px;top:596.10px;font-size:13.33px;color:#4f4f4f;letter-spacing:0.170px;font-weight:700;">period</span>
<span class="t" style="left:785.10px;top:505.80px;font-size:13.33px;color:#4f4f4f;letter-spacing:0.114px;font-weight:700;">2016</span>
<span class="t" style="left:792.87px;top:534.50px;font-size:13.33px;color:#4f4f4f;letter-spacing:0.420px;font-weight:700;">At</span>
<span class="t" style="left:770.27px;top:549.80px;font-size:13.33px;color:#4f4f4f;letter-spacing:0.086px;font-weight:700;">reporting</span>
<span class="t" style="left:777.89px;top:565.30px;font-size:13.33px;color:#4f4f4f;letter-spacing:0.075px;font-weight:700;">date of</span>
<span class="t" style="left:770.27px;top:580.80px;font-size:13.33px;color:#4f4f4f;letter-spacing:0.086px;font-weight:700;">reporting</span>
<span class="t" style="left:779.37px;top:596.10px;font-size:13.33px;color:#4f4f4f;letter-spacing:0.170px;font-weight:700;">period</span></div>
</body></html>
